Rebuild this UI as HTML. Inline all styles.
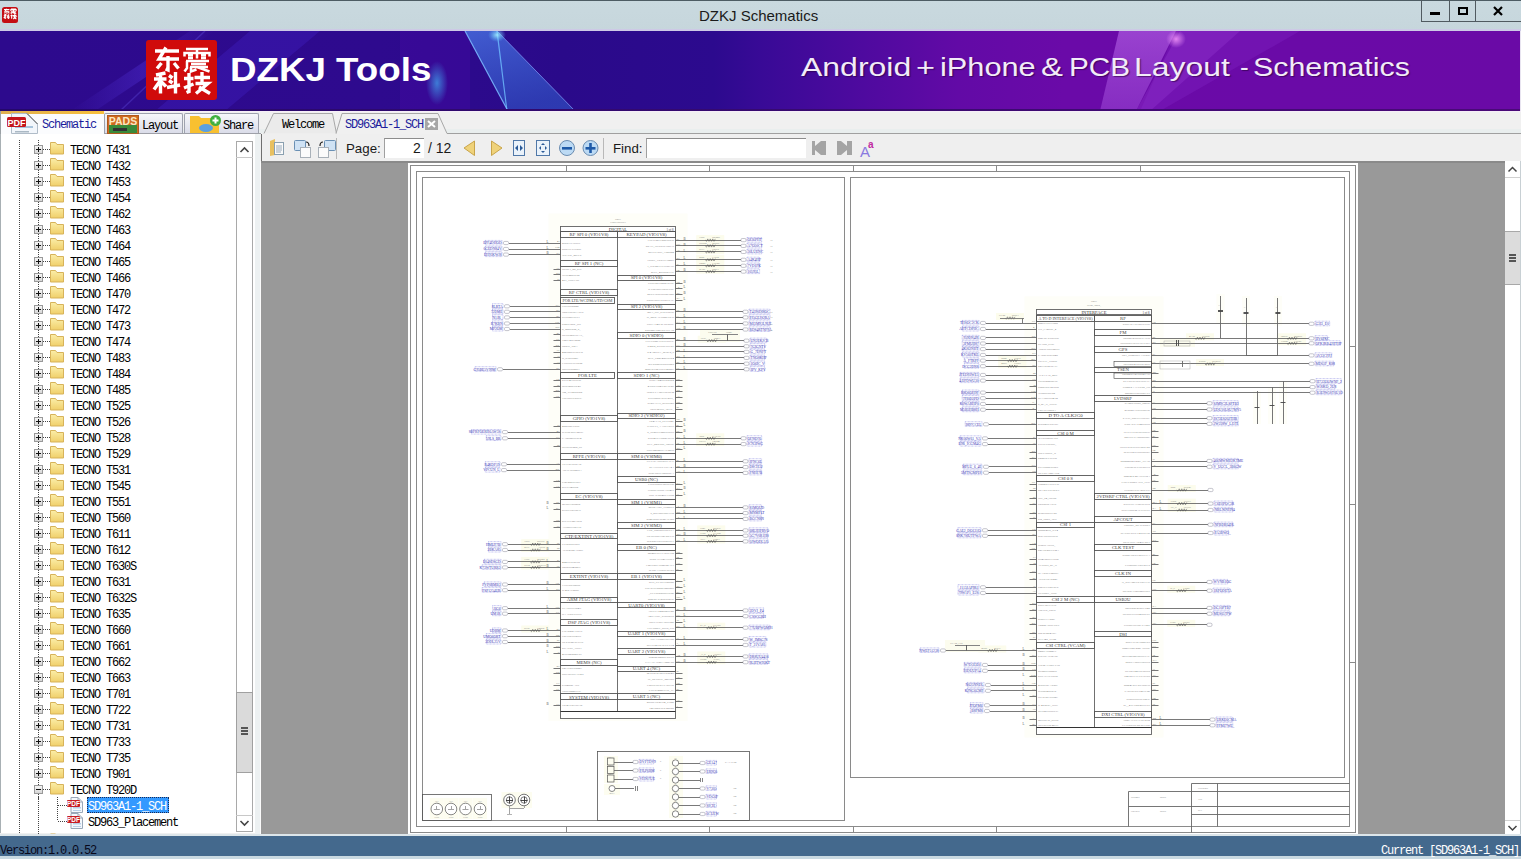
<!DOCTYPE html><html><head><meta charset="utf-8"><style>
*{margin:0;padding:0;box-sizing:border-box}
html,body{width:1521px;height:859px;overflow:hidden;background:#f0f0f0;position:relative;font-family:"Liberation Sans",sans-serif}
.abs{position:absolute}
.ttxt{position:absolute;font-family:"Liberation Mono",monospace;font-size:12px;line-height:14px;letter-spacing:-1.2px;color:#000;white-space:nowrap}
.tb{font-family:"Liberation Sans",sans-serif;font-size:14px;line-height:17px;color:#1a1a1a;white-space:nowrap}
</style></head><body><div class="abs" style="left:0;top:0;width:1521px;height:31px;background:linear-gradient(#c9d9df,#c6d6dc);border-top:1px solid #4d5c63"></div><div class="abs" style="left:0;top:29px;width:1521px;height:2px;background:#cdc9e6"></div><div class="abs" style="left:699px;top:7px;font-size:15px;line-height:18px;color:#1a1a1a;white-space:nowrap">DZKJ Schematics</div><div class="abs" style="left:1421px;top:0;width:101px;height:22px;border:1px solid #505a60;border-top:none"></div><div class="abs" style="left:1449px;top:0;width:1px;height:21px;background:#505a60"></div><div class="abs" style="left:1475px;top:0;width:1px;height:21px;background:#505a60"></div><div class="abs" style="left:1430px;top:12px;width:10px;height:3px;background:#000"></div><div class="abs" style="left:1458px;top:7px;width:10px;height:8px;border:2px solid #000"></div><svg class="abs" style="left:1490px;top:5px" width="16" height="12"><path d="M4 2 L12 10 M12 2 L4 10" stroke="#000" stroke-width="2.2"/></svg><svg class="abs" style="left:2px;top:7px" width="17" height="17"><rect x="0" y="0" width="16" height="16" rx="2.5" fill="#c40e14"/><g transform="scale(0.225) translate(0,0)" fill="none" stroke="#fff" stroke-width="5"><path d="M9 11 H33 M20 7.5 L13 19 H33 M22 16 V30 M15.5 23 L11 28.5 M28 23 L32.5 28.5"/><path d="M40 9 H62 M38.5 16.5 V13 H63.5 V16.5 M51 9 V18.5 M40 21 H63 M41 21 V31 M45 25 H60 M51 27 L63.5 31.5"/><path d="M10 35 L19.5 33 M8 39 H20.5 M14.5 34 V53.5 M14 41 L8 49.5 M23 37 L26.5 38 M23 41.5 L26.5 43 M21 47.5 L34 45 M29.5 32 V53.5"/><path d="M38 38.5 H47.5 M43 33 V52 M48.5 37.5 H64 M56 32 V43 M49.5 43.5 H62 L50 53.5 M53 47 L64 53.5"/></g></svg><div class="abs" style="left:0;top:31px;width:1520px;height:80px;overflow:hidden;background:linear-gradient(90deg,#2d0a8d 0%,#2e0a8e 25%,#2a0a8a 37%,#2c0a8e 47%,#380a96 50%,#4c0a9e 56%,#620aa6 63%,#6a0aa8 70%,#6a0aa6 100%)"><svg class="abs" style="left:0;top:0" width="1520" height="80"><defs><linearGradient id="tri" x1="0" y1="0" x2="0.3" y2="1"><stop offset="0" stop-color="#4a78e8" stop-opacity="0.75"/><stop offset="1" stop-color="#3060d0" stop-opacity="0.55"/></linearGradient><linearGradient id="str" x1="0" y1="0" x2="1" y2="0"><stop offset="0" stop-color="#5a3ae8" stop-opacity="0"/><stop offset="0.5" stop-color="#5a3ae8" stop-opacity="0.45"/><stop offset="1" stop-color="#5a3ae8" stop-opacity="0"/></linearGradient><radialGradient id="bl"><stop offset="0" stop-color="#40a8f0" stop-opacity="0.9"/><stop offset="1" stop-color="#40a8f0" stop-opacity="0"/></radialGradient><radialGradient id="cy"><stop offset="0" stop-color="#a0f0ff" stop-opacity="0.9"/><stop offset="1" stop-color="#60c0ff" stop-opacity="0"/></radialGradient><radialGradient id="pk"><stop offset="0" stop-color="#ffa0ff" stop-opacity="0.8"/><stop offset="1" stop-color="#f0a0ff" stop-opacity="0"/></radialGradient><linearGradient id="vio" x1="0" y1="0" x2="0" y2="1"><stop offset="0" stop-color="#c070f0" stop-opacity="0.55"/><stop offset="1" stop-color="#b060e8" stop-opacity="0.4"/></linearGradient></defs><path d="M190 0 L215 0 L95 80 L70 80 Z" fill="url(#str)" opacity="0.7"/><path d="M250 0 L320 0 L225 80 L155 80 Z" fill="#4a2ae0" opacity="0.25"/><line x1="205" y1="0" x2="120" y2="80" stroke="#6a5af0" stroke-width="1.5" opacity="0.3"/><path d="M400 0 L470 0 L470 80 L400 80 Z" fill="#4a0aa8" opacity="0.35"/><path d="M465 0 L497 0 L575 80 L508 80 Z" fill="url(#tri)"/><line x1="465" y1="0" x2="508" y2="80" stroke="#7ab8ff" stroke-width="1.2" opacity="0.9"/><line x1="497" y1="0" x2="507" y2="80" stroke="#70c0ff" stroke-width="1.2" opacity="0.8"/><line x1="497" y1="0" x2="575" y2="80" stroke="#7a90f0" stroke-width="1" opacity="0.8"/><ellipse cx="497" cy="4" rx="9" ry="7" fill="url(#cy)"/><ellipse cx="437" cy="52" rx="11" ry="22" fill="url(#bl)" opacity="0.8"/><path d="M1119 0 L1176 0 L1136 80 L1100 80 Z" fill="url(#vio)"/><path d="M1176 0 L1300 0 L1160 80 L1140 80 Z" fill="#8a30d0" opacity="0.25"/><path d="M1180 0 L1240 0 L1150 80 L1136 80 Z" fill="#9a40d8" opacity="0.3"/><ellipse cx="1176" cy="8" rx="10" ry="9" fill="url(#pk)"/></svg><div class="abs" style="left:146px;top:9px;width:71px;height:60px;background:#d00b0b;border-radius:3px"></div><svg class="abs" style="left:146px;top:9px" width="71" height="60" fill="none" stroke="#fff" stroke-width="3.4" stroke-linecap="butt" stroke-linejoin="miter"><path d="M9 11 H33 M20 7.5 L13 19 H33 M22 16 V30 L19.5 29 M15.5 23 L11 28.5 M28 23 L32.5 28.5"/><path stroke-width="2.5" d="M40 9 H62 M38.5 16.5 V13 H63.5 V16.5 M51 9 V18.5 M42 15.2 H47 M55 15.2 H60 M42 18 H47 M55 18 H60 M40 21 H63 M41 21 V28 L38.5 31.5 M45 24 H60 M44 27 H62 M51 27 L63.5 31.5 M45 27 V31.5 L50.5 29.5"/><path d="M10 35 L19.5 33 M8 39 H20.5 M14.5 34 V53.5 M14 41 L8 49.5 M15.5 42 L20 46.5 M23 35.5 L26.5 38 M23 40.5 L26.5 43 M21 47.5 L34 45 M29.5 32 V53.5"/><path d="M38 38.5 H47.5 M43 33 V51.5 L40.5 52.5 M38 48 L47.5 44 M48.5 37.5 H64 M56 32 V43 M49.5 43.5 H62 L50 53.5 M53 47 L64 53.5"/></svg><div class="abs" style="left:230px;top:21px;font-weight:bold;font-size:32.5px;line-height:36px;color:#fff;white-space:nowrap;transform-origin:0 0;transform:scaleX(1.13)">DZKJ Tools</div><div class="abs" style="left:801.0px;top:21px;font-size:26px;line-height:30px;color:#f2ecf8;white-space:nowrap;transform-origin:0 0;transform:scaleX(1.230);text-shadow:1px 1px 1px rgba(40,0,60,0.6)">Android</div><div class="abs" style="left:915.8px;top:21px;font-size:26px;line-height:30px;color:#f2ecf8;white-space:nowrap;transform-origin:0 0;transform:scaleX(1.250);text-shadow:1px 1px 1px rgba(40,0,60,0.6)">+</div><div class="abs" style="left:939.6px;top:21px;font-size:26px;line-height:30px;color:#f2ecf8;white-space:nowrap;transform-origin:0 0;transform:scaleX(1.182);text-shadow:1px 1px 1px rgba(40,0,60,0.6)">iPhone</div><div class="abs" style="left:1040.7px;top:21px;font-size:26px;line-height:30px;color:#f2ecf8;white-space:nowrap;transform-origin:0 0;transform:scaleX(1.267);text-shadow:1px 1px 1px rgba(40,0,60,0.6)">&amp;</div><div class="abs" style="left:1068.7px;top:21px;font-size:26px;line-height:30px;color:#f2ecf8;white-space:nowrap;transform-origin:0 0;transform:scaleX(1.143);text-shadow:1px 1px 1px rgba(40,0,60,0.6)">PCB</div><div class="abs" style="left:1133.5px;top:21px;font-size:26px;line-height:30px;color:#f2ecf8;white-space:nowrap;transform-origin:0 0;transform:scaleX(1.227);text-shadow:1px 1px 1px rgba(40,0,60,0.6)">Layout</div><div class="abs" style="left:1240.0px;top:21px;font-size:26px;line-height:30px;color:#f2ecf8;white-space:nowrap;transform-origin:0 0;transform:scaleX(1.000);text-shadow:1px 1px 1px rgba(40,0,60,0.6)">-</div><div class="abs" style="left:1252.8px;top:21px;font-size:26px;line-height:30px;color:#f2ecf8;white-space:nowrap;transform-origin:0 0;transform:scaleX(1.167);text-shadow:1px 1px 1px rgba(40,0,60,0.6)">Schematics</div></div><div class="abs" style="left:1520px;top:31px;width:1px;height:80px;background:#e8e4f0"></div><div class="abs" style="left:0;top:109px;width:1520px;height:2px;background:linear-gradient(90deg,#24086a,#3a0a70 60%,#4a0a78)"></div><div class="abs" style="left:0;top:111px;width:1521px;height:23px;background:#f0f0f0"></div><div class="abs" style="left:0;top:111px;width:1521px;height:1px;background:#f6eef8"></div><div class="abs" style="left:0;top:129px;width:1521px;height:4px;background:#e9eeee"></div><div class="abs" style="left:447px;top:133px;width:1074px;height:1px;background:#a0a0a0"></div><div class="abs" style="left:0;top:111px;width:104px;height:25px;background:#fbfcfe;border-left:1px solid #9aa0a4"></div><div class="abs" style="left:1px;top:111px;width:103px;height:3px;background:linear-gradient(90deg,#e0b050,#f7bf3c)"></div><div class="abs" style="left:104px;top:113px;width:79px;height:21px;background:linear-gradient(#f6f7fa,#d9dbe8);border:1px solid #9ea2ae;border-bottom:none;border-radius:2px 2px 0 0"></div><div class="abs" style="left:184px;top:113px;width:75px;height:21px;background:linear-gradient(#f6f7fa,#d9dbe8);border:1px solid #9ea2ae;border-bottom:none;border-radius:2px 2px 0 0"></div><div class="abs" style="left:104px;top:133px;width:157px;height:1px;background:#9ea0a8"></div><svg class="abs" style="left:0;top:111px" width="460" height="25"><path d="M11.5 2.5 H27 L37.5 13 V22.5 H11.5 Z" fill="#f2f6fb" stroke="#b0bcc8"/><path d="M27 2.5 L37.5 13" stroke="#555" stroke-width="1"/><rect x="15" y="15" width="18" height="2" fill="#a8c4dc"/><rect x="15" y="20" width="14" height="1.5" fill="#aab8c4"/><rect x="7" y="6" width="19" height="10" rx="1.5" fill="#c4141c"/><text x="16.5" y="14.5" font-family="Liberation Sans" font-weight="bold" font-size="9" fill="#fff" text-anchor="middle">PDF</text><rect x="107.5" y="4.5" width="31" height="18" fill="#d06a20" stroke="#b05a1c"/><rect x="109" y="14" width="28" height="8" fill="#3a8a3a"/><rect x="113" y="17" width="14" height="3" fill="#333"/><text x="123" y="13.5" font-family="Liberation Sans" font-weight="bold" font-size="10.5" fill="#fbe8c0" text-anchor="middle">PADS</text><path d="M190 5 h9 l2 2 h18 v15 h-29 z" fill="#f8c030"/><ellipse cx="206" cy="17" rx="7" ry="4" fill="#5aa0e0"/><circle cx="215.5" cy="9.5" r="5.5" fill="#40b040"/><rect x="212.5" y="8.5" width="6" height="2" fill="#fff"/><rect x="214.5" y="6.5" width="2" height="6" fill="#fff"/><path d="M264 22.5 L273.5 2.5 H332.5 L336.5 22.5" fill="#ebebeb" stroke="#a8a8a8"/><path d="M336 22.5 L342 2.5 H438 L447 22.5" fill="#f0f0f0" stroke="#a8a8a8"/><rect x="425" y="7" width="13" height="12" fill="#a6a6a6"/><path d="M428 10 L435 16 M435 10 L428 16" stroke="#fff" stroke-width="2"/></svg><div class="ttxt" style="left:42px;top:118px;color:#1c1c9c">Schematic</div><div class="ttxt" style="left:142px;top:119px">Layout</div><div class="ttxt" style="left:223px;top:119px">Share</div><div class="ttxt" style="left:282px;top:118px">Welcome</div><div class="ttxt" style="left:345px;top:118px;color:#1c1c9c">SD963A1-1_SCH</div><div class="abs" style="left:261px;top:134px;width:1260px;height:27px;background:#efefef;border-left:1px solid #707070"></div><div class="abs" style="left:336px;top:138px;width:1px;height:21px;background:#b8b8b8"></div><div class="abs" style="left:603px;top:138px;width:1px;height:21px;background:#b8b8b8"></div><div class="abs" style="left:384px;top:138px;width:40px;height:20px;background:#fff;border-top:1px solid #8c8c8c;border-left:1px solid #a0a0a0"></div><div class="abs" style="left:646px;top:138px;width:160px;height:20px;background:#fff;border-top:1px solid #8c8c8c;border-left:1px solid #a0a0a0"></div><div class="abs tb" style="left:346px;top:140px;font-size:13.3px">Page:</div><div class="abs tb" style="left:413px;top:140px">2</div><div class="abs tb" style="left:428px;top:140px">/ 12</div><div class="abs tb" style="left:613px;top:140px;font-size:13.3px">Find:</div><svg class="abs" style="left:262px;top:134px" width="620" height="27"><path d="M8 7 L13 5 V21 L8 22 Z" fill="#e8c060"/><rect x="12.5" y="8.5" width="9" height="12" fill="#fafafa" stroke="#8aa0b0"/><path d="M14 12 h6 M14 14 h6 M14 16 h6 M14 18 h5" stroke="#9ab" stroke-width="1"/><rect x="32.5" y="6.5" width="11" height="10" rx="1" fill="#cfe2f4" stroke="#6a90b4"/><rect x="38.5" y="13.5" width="10" height="10" fill="#fbfbfb" stroke="#a8b0b8"/><path d="M44 8 q3 0 3 4" stroke="#222" fill="none" stroke-width="1.2"/><rect x="62.5" y="6.5" width="11" height="10" rx="1" fill="#cfe2f4" stroke="#6a90b4"/><rect x="56.5" y="13.5" width="10" height="10" fill="#fbfbfb" stroke="#a8b0b8"/><path d="M61 8 q-3 0 -3 4" stroke="#222" fill="none" stroke-width="1.2"/><path d="M212.5 7 L202 14 L212.5 21.5 Z" fill="#efd27a" stroke="#c8a44a"/><path d="M229.5 7 L240 14 L229.5 21.5 Z" fill="#efd27a" stroke="#c8a44a"/><rect x="251.5" y="6.5" width="11" height="15" fill="#eaf2fa" stroke="#5078a8"/><path d="M253 14 L256 11 V17 Z M261 14 L258 11 V17 Z" fill="#2a5a98"/><rect x="274.5" y="6.5" width="13" height="15" fill="#eaf2fa" stroke="#5078a8"/><path d="M281 9 l-2 2 h4 z M281 19 l-2 -2 h4 z M277 14 l2 -2 v4 z M285 14 l-2 -2 v4 z" fill="#2a5a98"/><circle cx="305" cy="14" r="7.5" fill="#bcdaf4" stroke="#6a8cb0"/><rect x="300" y="13" width="10" height="2.6" fill="#1e5aa8"/><circle cx="328.5" cy="14" r="7.5" fill="#bcdaf4" stroke="#6a8cb0"/><rect x="323.5" y="13" width="10" height="2.6" fill="#1e5aa8"/><rect x="327.2" y="9" width="2.6" height="10" fill="#1e5aa8"/><path d="M550 7 h3 v5 l6 -5 h5 v14 h-5 l-6 -5 v5 h-3 z" fill="#a4a4a4"/><path d="M575 7 h4 l6 5 v-5 h5 v14 h-5 v-5 l-6 5 h-4 z" fill="#a4a4a4"/><text x="598" y="23" font-family="Liberation Sans" font-size="15" fill="#8a7ae0">A</text><text x="606" y="14" font-family="Liberation Sans" font-weight="bold" font-size="10" fill="#c02aa0">a</text></svg><div class="abs" style="left:261px;top:161px;width:1244px;height:673px;background:#999"></div><div class="abs" style="left:261px;top:161px;width:1244px;height:2px;background:#8a8a8a"></div><div class="abs" style="left:408px;top:163px;width:950px;height:671px;background:#fff"></div><svg class="abs" style="left:0;top:0" width="1521" height="859" font-family="Liberation Serif"><rect x="548.5" y="213.5" width="139.0" height="507.5" fill="#fefef8"/><rect x="521.25" y="539.2" width="28" height="7" fill="#fcfcec"/><rect x="521.25" y="545" width="28" height="7" fill="#fcfcec"/><rect x="521.25" y="556.9" width="28" height="7" fill="#fcfcec"/><rect x="521.25" y="562.4" width="28" height="7" fill="#fcfcec"/><rect x="521.25" y="625.5" width="28" height="7" fill="#fcfcec"/><rect x="696.25" y="235.1" width="28" height="7" fill="#fcfcec"/><rect x="696.25" y="240.9" width="28" height="7" fill="#fcfcec"/><rect x="696.25" y="246.9" width="28" height="7" fill="#fcfcec"/><rect x="696.25" y="254.8" width="28" height="7" fill="#fcfcec"/><rect x="696.25" y="260.8" width="28" height="7" fill="#fcfcec"/><rect x="696.25" y="266.6" width="28" height="7" fill="#fcfcec"/><rect x="697.75" y="335.7" width="28" height="7" fill="#fcfcec"/><rect x="696.25" y="433.3" width="28" height="7" fill="#fcfcec"/><rect x="696.25" y="439.1" width="28" height="7" fill="#fcfcec"/><rect x="697.25" y="525.4" width="28" height="7" fill="#fcfcec"/><rect x="697.25" y="530.7" width="28" height="7" fill="#fcfcec"/><rect x="697.25" y="536.4" width="28" height="7" fill="#fcfcec"/><rect x="697.25" y="622.7" width="28" height="7" fill="#fcfcec"/><rect x="697.25" y="651.5" width="28" height="7" fill="#fcfcec"/><rect x="697.25" y="657.2" width="28" height="7" fill="#fcfcec"/><rect x="700" y="330" width="40" height="12" fill="#fcfcee"/><rect x="1024.5" y="296.3" width="139.0" height="441.2" fill="#fefef8"/><rect x="998.25" y="355.6" width="28" height="7" fill="#fcfcec"/><rect x="998.25" y="361.2" width="28" height="7" fill="#fcfcec"/><rect x="978.25" y="645.5" width="28" height="7" fill="#fcfcec"/><rect x="1167.75" y="485" width="28" height="7" fill="#fcfcec"/><rect x="1167.75" y="498.6" width="28" height="7" fill="#fcfcec"/><rect x="1167.75" y="505" width="28" height="7" fill="#fcfcec"/><rect x="1167.25" y="585.7" width="28" height="7" fill="#fcfcec"/><rect x="1167.25" y="619.8" width="28" height="7" fill="#fcfcec"/><rect x="996" y="313" width="28" height="7" fill="#fcfcec"/><rect x="1160" y="338" width="35" height="9" fill="#fcfcee"/><rect x="1186" y="333.3" width="28" height="7" fill="#fcfcec"/><rect x="1278" y="333.3" width="28" height="7" fill="#fcfcec"/><rect x="1278" y="338.3" width="28" height="7" fill="#fcfcec"/><rect x="1196" y="359" width="28" height="7" fill="#fcfcec"/><rect x="945" y="640" width="40" height="12" fill="#fcfcee"/><rect x="1216.5" y="294" width="8.0" height="30" fill="#fefef8"/><rect x="1242" y="296" width="8" height="30" fill="#fefef8"/><rect x="1273.9" y="296" width="8.0" height="30" fill="#fefef8"/><rect x="1253" y="391" width="8" height="33" fill="#fefef8"/><rect x="1268" y="387.1" width="8" height="36.89999999999998" fill="#fefef8"/><rect x="1279" y="381.2" width="8" height="42.80000000000001" fill="#fefef8"/><rect x="429.8" y="798" width="14.0" height="21" fill="#fdfdf0"/><rect x="444" y="798" width="14" height="21" fill="#fdfdf0"/><rect x="458.5" y="798" width="14.0" height="21" fill="#fdfdf0"/><rect x="473" y="798" width="14" height="21" fill="#fdfdf0"/><rect x="501.5" y="792" width="16.0" height="16" fill="#fdfdf0"/><rect x="516" y="792" width="16" height="16" fill="#fdfdf0"/><rect x="604" y="756" width="14" height="27" fill="#fdfdf0"/><rect x="604" y="784" width="16" height="11" fill="#fdfdf0"/><rect x="669" y="756" width="14" height="62" fill="#fdfdf0"/><rect x="410.5" y="165.5" width="945.0" height="667.0" fill="none" stroke="#8a8a8a" stroke-width="1"/><rect x="416.5" y="171.5" width="933.0" height="655.0" fill="none" stroke="#8a8a8a" stroke-width="1"/><rect x="422.5" y="177.5" width="422.0" height="643.0" fill="none" stroke="#8a8a8a" stroke-width="1"/><rect x="850.5" y="177.5" width="494.0" height="600.0" fill="none" stroke="#8a8a8a" stroke-width="1"/><line x1="566.5" y1="165.5" x2="566.5" y2="171.5" stroke="#8a8a8a" stroke-width="1"/><line x1="709.5" y1="165.5" x2="709.5" y2="171.5" stroke="#8a8a8a" stroke-width="1"/><line x1="853.5" y1="165.5" x2="853.5" y2="171.5" stroke="#8a8a8a" stroke-width="1"/><line x1="996.5" y1="165.5" x2="996.5" y2="171.5" stroke="#8a8a8a" stroke-width="1"/><line x1="1140.5" y1="165.5" x2="1140.5" y2="171.5" stroke="#8a8a8a" stroke-width="1"/><line x1="566.5" y1="826.5" x2="566.5" y2="832.5" stroke="#8a8a8a" stroke-width="1"/><line x1="709.5" y1="826.5" x2="709.5" y2="832.5" stroke="#8a8a8a" stroke-width="1"/><line x1="853.5" y1="826.5" x2="853.5" y2="832.5" stroke="#8a8a8a" stroke-width="1"/><line x1="996.5" y1="826.5" x2="996.5" y2="832.5" stroke="#8a8a8a" stroke-width="1"/><line x1="1349.5" y1="346.5" x2="1355.5" y2="346.5" stroke="#8a8a8a" stroke-width="1"/><line x1="1349.5" y1="504.5" x2="1355.5" y2="504.5" stroke="#8a8a8a" stroke-width="1"/><line x1="1349.5" y1="662.5" x2="1355.5" y2="662.5" stroke="#8a8a8a" stroke-width="1"/><line x1="1191.5" y1="783.5" x2="1349.5" y2="783.5" stroke="#666" stroke-width="0.9"/><line x1="1128.5" y1="791.5" x2="1349.5" y2="791.5" stroke="#666" stroke-width="0.9"/><line x1="1128.5" y1="806.5" x2="1349.5" y2="806.5" stroke="#666" stroke-width="0.9"/><line x1="1191.5" y1="814.5" x2="1349.5" y2="814.5" stroke="#666" stroke-width="0.9"/><line x1="1128.5" y1="791.5" x2="1128.5" y2="826.5" stroke="#666" stroke-width="0.9"/><line x1="1191.5" y1="783.5" x2="1191.5" y2="832.5" stroke="#666" stroke-width="0.9"/><line x1="1217.5" y1="783.5" x2="1217.5" y2="826.5" stroke="#666" stroke-width="0.9"/><text x="1198" y="789" font-size="2.4" fill="#888" text-anchor="start" font-weight="normal">Footprints</text><text x="1198" y="800" font-size="2.4" fill="#888" text-anchor="start" font-weight="normal">Title</text><text x="1198" y="811" font-size="2.4" fill="#888" text-anchor="start" font-weight="normal">Rev</text><text x="1131" y="798" font-size="2.4" fill="#888" text-anchor="start" font-weight="normal">Designer</text><text x="1160" y="798" font-size="2.4" fill="#888" text-anchor="start" font-weight="normal">Board</text><text x="1131" y="812" font-size="2.4" fill="#888" text-anchor="start" font-weight="normal">Checked</text><text x="1160" y="812" font-size="2.4" fill="#888" text-anchor="start" font-weight="normal">Board</text><line x1="614.5" y1="303.3" x2="614.5" y2="401" stroke="#606060" stroke-width="0.9"/><line x1="560.5" y1="401.5" x2="614.5" y2="401.5" stroke="#606060" stroke-width="0.9"/><rect x="560.5" y="226.5" width="115.0" height="491.5" fill="#fff"/><text x="618.0" y="219.5" font-size="2.2" fill="#777" text-anchor="middle" font-weight="normal">PMU1</text><text x="618.0" y="223.0" font-size="2.2" fill="#777" text-anchor="middle" font-weight="normal">VJ2DEG0D9NCF</text><line x1="509" y1="243.5" x2="560.5" y2="243.5" stroke="#6a6a6a" stroke-width="0.9"/><text x="559.5" y="242.4" font-size="2.6" fill="#666" text-anchor="end" font-weight="normal">43</text><rect x="503.5" y="241.4" width="5" height="3.2" rx="1.2" fill="none" stroke="#8a8a9a" stroke-width="0.5"/><rect x="485.2" y="240.4" width="16.8" height="4.6" fill="none" stroke="#6a6ad8" stroke-width="0.45" stroke-dasharray="0.8 0.6"/><text x="501.5" y="244.3" font-size="3.6" fill="#3434b4" text-anchor="end" font-weight="normal">EPF4DHOD</text><text x="562.0" y="244.0" font-size="2.9" fill="#707070" text-anchor="start" font-weight="normal">2DOCIT3JHUL</text><line x1="509" y1="249.5" x2="560.5" y2="249.5" stroke="#6a6a6a" stroke-width="0.9"/><text x="559.5" y="248.4" font-size="2.6" fill="#666" text-anchor="end" font-weight="normal">GM</text><rect x="503.5" y="247.4" width="5" height="3.2" rx="1.2" fill="none" stroke="#8a8a9a" stroke-width="0.5"/><rect x="485.2" y="246.4" width="16.8" height="4.6" fill="none" stroke="#6a6ad8" stroke-width="0.45" stroke-dasharray="0.8 0.6"/><text x="501.5" y="250.3" font-size="3.6" fill="#3434b4" text-anchor="end" font-weight="normal">0GEDN84V</text><text x="562.0" y="250.0" font-size="2.9" fill="#707070" text-anchor="start" font-weight="normal">660UPLPFU8W</text><line x1="509" y1="254.5" x2="560.5" y2="254.5" stroke="#6a6a6a" stroke-width="0.9"/><text x="559.5" y="254.0" font-size="2.6" fill="#666" text-anchor="end" font-weight="normal">5T</text><rect x="503.5" y="253.0" width="5" height="3.2" rx="1.2" fill="none" stroke="#8a8a9a" stroke-width="0.5"/><rect x="485.2" y="252.0" width="16.8" height="4.6" fill="none" stroke="#6a6ad8" stroke-width="0.45" stroke-dasharray="0.8 0.6"/><text x="501.5" y="255.9" font-size="3.6" fill="#3434b4" text-anchor="end" font-weight="normal">EH93KWJ8</text><text x="562.0" y="255.6" font-size="2.9" fill="#707070" text-anchor="start" font-weight="normal">3CEVW_86EFS</text><line x1="553.5" y1="269.5" x2="560.5" y2="269.5" stroke="#6a6a6a" stroke-width="0.9"/><text x="559.5" y="268.79999999999995" font-size="2.6" fill="#666" text-anchor="end" font-weight="normal">7E</text><text x="562.0" y="270.4" font-size="2.9" fill="#707070" text-anchor="start" font-weight="normal">DU5T1_B6_KH</text><line x1="553.5" y1="274.5" x2="560.5" y2="274.5" stroke="#6a6a6a" stroke-width="0.9"/><text x="559.5" y="274.09999999999997" font-size="2.6" fill="#666" text-anchor="end" font-weight="normal">8D</text><text x="562.0" y="275.7" font-size="2.9" fill="#707070" text-anchor="start" font-weight="normal">NTIP228FK52</text><line x1="553.5" y1="280.5" x2="560.5" y2="280.5" stroke="#6a6a6a" stroke-width="0.9"/><text x="559.5" y="279.7" font-size="2.6" fill="#666" text-anchor="end" font-weight="normal">SI</text><text x="562.0" y="281.3" font-size="2.9" fill="#707070" text-anchor="start" font-weight="normal">4S3_1OJFLJO</text><line x1="510" y1="306.5" x2="560.5" y2="306.5" stroke="#6a6a6a" stroke-width="0.9"/><text x="559.5" y="305.7" font-size="2.6" fill="#666" text-anchor="end" font-weight="normal">OA</text><rect x="504.5" y="304.7" width="5" height="3.2" rx="1.2" fill="none" stroke="#8a8a9a" stroke-width="0.5"/><rect x="492.5" y="303.7" width="10.5" height="4.6" fill="none" stroke="#6a6ad8" stroke-width="0.45" stroke-dasharray="0.8 0.6"/><text x="502.5" y="307.6" font-size="3.6" fill="#3434b4" text-anchor="end" font-weight="normal">8LRTA</text><text x="562.0" y="307.3" font-size="2.9" fill="#707070" text-anchor="start" font-weight="normal">J30VI9D6222</text><line x1="510" y1="311.5" x2="560.5" y2="311.5" stroke="#6a6a6a" stroke-width="0.9"/><text x="559.5" y="311.2" font-size="2.6" fill="#666" text-anchor="end" font-weight="normal">2G</text><rect x="504.5" y="310.2" width="5" height="3.2" rx="1.2" fill="none" stroke="#8a8a9a" stroke-width="0.5"/><rect x="492.5" y="309.2" width="10.5" height="4.6" fill="none" stroke="#6a6ad8" stroke-width="0.45" stroke-dasharray="0.8 0.6"/><text x="502.5" y="313.1" font-size="3.6" fill="#3434b4" text-anchor="end" font-weight="normal">72DME</text><text x="562.0" y="312.8" font-size="2.9" fill="#707070" text-anchor="start" font-weight="normal">N5KHWDGAJG0</text><line x1="510" y1="317.5" x2="560.5" y2="317.5" stroke="#6a6a6a" stroke-width="0.9"/><text x="559.5" y="316.79999999999995" font-size="2.6" fill="#666" text-anchor="end" font-weight="normal">BE</text><rect x="504.5" y="315.79999999999995" width="5" height="3.2" rx="1.2" fill="none" stroke="#8a8a9a" stroke-width="0.5"/><rect x="492.5" y="314.79999999999995" width="10.5" height="4.6" fill="none" stroke="#6a6ad8" stroke-width="0.45" stroke-dasharray="0.8 0.6"/><text x="502.5" y="318.7" font-size="3.6" fill="#3434b4" text-anchor="end" font-weight="normal">N1JR_</text><text x="562.0" y="318.4" font-size="2.9" fill="#707070" text-anchor="start" font-weight="normal">07HH8677UFJ</text><line x1="510" y1="323.5" x2="560.5" y2="323.5" stroke="#6a6a6a" stroke-width="0.9"/><text x="559.5" y="322.9" font-size="2.6" fill="#666" text-anchor="end" font-weight="normal">GW</text><rect x="504.5" y="321.9" width="5" height="3.2" rx="1.2" fill="none" stroke="#8a8a9a" stroke-width="0.5"/><rect x="492.5" y="320.9" width="10.5" height="4.6" fill="none" stroke="#6a6ad8" stroke-width="0.45" stroke-dasharray="0.8 0.6"/><text x="502.5" y="324.8" font-size="3.6" fill="#3434b4" text-anchor="end" font-weight="normal">R7KBN</text><text x="562.0" y="324.5" font-size="2.9" fill="#707070" text-anchor="start" font-weight="normal">0JBUFR0K_O9</text><line x1="510" y1="329.5" x2="560.5" y2="329.5" stroke="#6a6a6a" stroke-width="0.9"/><text x="559.5" y="328.4" font-size="2.6" fill="#666" text-anchor="end" font-weight="normal">WO</text><rect x="504.5" y="327.4" width="5" height="3.2" rx="1.2" fill="none" stroke="#8a8a9a" stroke-width="0.5"/><rect x="492.5" y="326.4" width="10.5" height="4.6" fill="none" stroke="#6a6ad8" stroke-width="0.45" stroke-dasharray="0.8 0.6"/><text x="502.5" y="330.3" font-size="3.6" fill="#3434b4" text-anchor="end" font-weight="normal">MP2OM</text><text x="562.0" y="330.0" font-size="2.9" fill="#707070" text-anchor="start" font-weight="normal">8_BBS7RM_5_</text><line x1="553.5" y1="334.5" x2="560.5" y2="334.5" stroke="#6a6a6a" stroke-width="0.9"/><text x="559.5" y="334.0" font-size="2.6" fill="#666" text-anchor="end" font-weight="normal">0F</text><text x="562.0" y="335.6" font-size="2.9" fill="#707070" text-anchor="start" font-weight="normal">OGO7MWN7A7_</text><line x1="553.5" y1="340.5" x2="560.5" y2="340.5" stroke="#6a6a6a" stroke-width="0.9"/><text x="559.5" y="339.59999999999997" font-size="2.6" fill="#666" text-anchor="end" font-weight="normal">FH</text><text x="562.0" y="341.2" font-size="2.9" fill="#707070" text-anchor="start" font-weight="normal">1M7L4WF262F</text><line x1="553.5" y1="346.5" x2="560.5" y2="346.5" stroke="#6a6a6a" stroke-width="0.9"/><text x="559.5" y="345.7" font-size="2.6" fill="#666" text-anchor="end" font-weight="normal">KK</text><text x="562.0" y="347.3" font-size="2.9" fill="#707070" text-anchor="start" font-weight="normal">IBJ6J7_JIBA</text><line x1="553.5" y1="352.5" x2="560.5" y2="352.5" stroke="#6a6a6a" stroke-width="0.9"/><text x="559.5" y="351.4" font-size="2.6" fill="#666" text-anchor="end" font-weight="normal">GI</text><text x="562.0" y="353.0" font-size="2.9" fill="#707070" text-anchor="start" font-weight="normal">4MNBRNT9PVR</text><line x1="553.5" y1="357.5" x2="560.5" y2="357.5" stroke="#6a6a6a" stroke-width="0.9"/><text x="559.5" y="357.09999999999997" font-size="2.6" fill="#666" text-anchor="end" font-weight="normal">3I</text><text x="562.0" y="358.7" font-size="2.9" fill="#707070" text-anchor="start" font-weight="normal">D_639IJ9B5L</text><line x1="553.5" y1="363.5" x2="560.5" y2="363.5" stroke="#6a6a6a" stroke-width="0.9"/><text x="559.5" y="362.59999999999997" font-size="2.6" fill="#666" text-anchor="end" font-weight="normal">AJ</text><text x="562.0" y="364.2" font-size="2.9" fill="#707070" text-anchor="start" font-weight="normal">LJ7HDV7GDPM</text><line x1="503" y1="369.5" x2="560.5" y2="369.5" stroke="#6a6a6a" stroke-width="0.9"/><text x="559.5" y="368.7" font-size="2.6" fill="#666" text-anchor="end" font-weight="normal">SC</text><rect x="497.5" y="367.7" width="5" height="3.2" rx="1.2" fill="none" stroke="#8a8a9a" stroke-width="0.5"/><rect x="475.0" y="366.7" width="21.0" height="4.6" fill="none" stroke="#6a6ad8" stroke-width="0.45" stroke-dasharray="0.8 0.6"/><text x="495.5" y="370.6" font-size="3.6" fill="#3434b4" text-anchor="end" font-weight="normal">G95BE5V99M</text><text x="562.0" y="370.3" font-size="2.9" fill="#707070" text-anchor="start" font-weight="normal">S5979PRM5I3</text><line x1="553.5" y1="380.5" x2="560.5" y2="380.5" stroke="#6a6a6a" stroke-width="0.9"/><text x="559.5" y="379.79999999999995" font-size="2.6" fill="#666" text-anchor="end" font-weight="normal">H2</text><text x="562.0" y="381.4" font-size="2.9" fill="#707070" text-anchor="start" font-weight="normal">5VEP4ENUHJ0</text><line x1="553.5" y1="386.5" x2="560.5" y2="386.5" stroke="#6a6a6a" stroke-width="0.9"/><text x="559.5" y="385.5" font-size="2.6" fill="#666" text-anchor="end" font-weight="normal">JR</text><text x="562.0" y="387.1" font-size="2.9" fill="#707070" text-anchor="start" font-weight="normal">I6OG28KOK49</text><line x1="553.5" y1="391.5" x2="560.5" y2="391.5" stroke="#6a6a6a" stroke-width="0.9"/><text x="559.5" y="391.29999999999995" font-size="2.6" fill="#666" text-anchor="end" font-weight="normal">2W</text><text x="562.0" y="392.9" font-size="2.9" fill="#707070" text-anchor="start" font-weight="normal">3M_VF0BW65B</text><line x1="553.5" y1="397.5" x2="560.5" y2="397.5" stroke="#6a6a6a" stroke-width="0.9"/><text x="559.5" y="397.0" font-size="2.6" fill="#666" text-anchor="end" font-weight="normal">1W</text><text x="562.0" y="398.6" font-size="2.9" fill="#707070" text-anchor="start" font-weight="normal">T9EHOGFRSCL</text><line x1="553.5" y1="426.5" x2="560.5" y2="426.5" stroke="#6a6a6a" stroke-width="0.9"/><text x="559.5" y="425.79999999999995" font-size="2.6" fill="#666" text-anchor="end" font-weight="normal">SI</text><text x="562.0" y="427.4" font-size="2.9" fill="#707070" text-anchor="start" font-weight="normal">4R2J98VFSDL</text><line x1="508" y1="432.5" x2="560.5" y2="432.5" stroke="#6a6a6a" stroke-width="0.9"/><text x="559.5" y="431.5" font-size="2.6" fill="#666" text-anchor="end" font-weight="normal">4E</text><rect x="502.5" y="430.5" width="5" height="3.2" rx="1.2" fill="none" stroke="#8a8a9a" stroke-width="0.5"/><rect x="471.6" y="429.5" width="29.400000000000002" height="4.6" fill="none" stroke="#6a6ad8" stroke-width="0.45" stroke-dasharray="0.8 0.6"/><text x="500.5" y="433.40000000000003" font-size="3.6" fill="#3434b4" text-anchor="end" font-weight="normal">SBFRFOERH6AW3S</text><text x="562.0" y="433.1" font-size="2.9" fill="#707070" text-anchor="start" font-weight="normal">ICPHKRDLMUU</text><line x1="508" y1="438.5" x2="560.5" y2="438.5" stroke="#6a6a6a" stroke-width="0.9"/><text x="559.5" y="437.7" font-size="2.6" fill="#666" text-anchor="end" font-weight="normal">NT</text><rect x="502.5" y="436.7" width="5" height="3.2" rx="1.2" fill="none" stroke="#8a8a9a" stroke-width="0.5"/><rect x="486.3" y="435.7" width="14.700000000000001" height="4.6" fill="none" stroke="#6a6ad8" stroke-width="0.45" stroke-dasharray="0.8 0.6"/><text x="500.5" y="439.6" font-size="3.6" fill="#3434b4" text-anchor="end" font-weight="normal">59LS_BR</text><text x="562.0" y="439.3" font-size="2.9" fill="#707070" text-anchor="start" font-weight="normal">CAB9M97P5G4</text><line x1="553.5" y1="446.5" x2="560.5" y2="446.5" stroke="#6a6a6a" stroke-width="0.9"/><text x="559.5" y="446.0" font-size="2.6" fill="#666" text-anchor="end" font-weight="normal">82</text><text x="562.0" y="447.6" font-size="2.9" fill="#707070" text-anchor="start" font-weight="normal">9UNOWMI2_DI</text><line x1="507" y1="464.5" x2="560.5" y2="464.5" stroke="#6a6a6a" stroke-width="0.9"/><text x="559.5" y="463.7" font-size="2.6" fill="#666" text-anchor="end" font-weight="normal">AE</text><rect x="501.5" y="462.7" width="5" height="3.2" rx="1.2" fill="none" stroke="#8a8a9a" stroke-width="0.5"/><rect x="485.3" y="461.7" width="14.700000000000001" height="4.6" fill="none" stroke="#6a6ad8" stroke-width="0.45" stroke-dasharray="0.8 0.6"/><text x="499.5" y="465.6" font-size="3.6" fill="#3434b4" text-anchor="end" font-weight="normal">R4KDF19</text><text x="562.0" y="465.3" font-size="2.9" fill="#707070" text-anchor="start" font-weight="normal">TPTC6LKS5AR</text><line x1="507" y1="470.5" x2="560.5" y2="470.5" stroke="#6a6a6a" stroke-width="0.9"/><text x="559.5" y="469.5" font-size="2.6" fill="#666" text-anchor="end" font-weight="normal">0W</text><rect x="501.5" y="468.5" width="5" height="3.2" rx="1.2" fill="none" stroke="#8a8a9a" stroke-width="0.5"/><rect x="485.3" y="467.5" width="14.700000000000001" height="4.6" fill="none" stroke="#6a6ad8" stroke-width="0.45" stroke-dasharray="0.8 0.6"/><text x="499.5" y="471.40000000000003" font-size="3.6" fill="#3434b4" text-anchor="end" font-weight="normal">VPCUN_L</text><text x="562.0" y="471.1" font-size="2.9" fill="#707070" text-anchor="start" font-weight="normal">AW1F7S9MP9A</text><line x1="553.5" y1="481.5" x2="560.5" y2="481.5" stroke="#6a6a6a" stroke-width="0.9"/><text x="559.5" y="481.0" font-size="2.6" fill="#666" text-anchor="end" font-weight="normal">FR</text><text x="562.0" y="482.6" font-size="2.9" fill="#707070" text-anchor="start" font-weight="normal">FJ2C2BUUOFJ</text><line x1="553.5" y1="487.5" x2="560.5" y2="487.5" stroke="#6a6a6a" stroke-width="0.9"/><text x="559.5" y="486.7" font-size="2.6" fill="#666" text-anchor="end" font-weight="normal">1V</text><text x="562.0" y="488.3" font-size="2.9" fill="#707070" text-anchor="start" font-weight="normal">8JTJC949I9B</text><line x1="553.5" y1="503.5" x2="560.5" y2="503.5" stroke="#6a6a6a" stroke-width="0.9"/><text x="559.5" y="503.29999999999995" font-size="2.6" fill="#666" text-anchor="end" font-weight="normal">OF</text><text x="562.0" y="504.9" font-size="2.9" fill="#707070" text-anchor="start" font-weight="normal">BCI0G15DBP8</text><line x1="553.5" y1="509.5" x2="560.5" y2="509.5" stroke="#6a6a6a" stroke-width="0.9"/><text x="559.5" y="509.09999999999997" font-size="2.6" fill="#666" text-anchor="end" font-weight="normal">RA</text><text x="562.0" y="510.7" font-size="2.9" fill="#707070" text-anchor="start" font-weight="normal">6E9FE7RERPN</text><line x1="553.5" y1="521.5" x2="560.5" y2="521.5" stroke="#6a6a6a" stroke-width="0.9"/><text x="559.5" y="520.8" font-size="2.6" fill="#666" text-anchor="end" font-weight="normal">O6</text><text x="562.0" y="522.4" font-size="2.9" fill="#707070" text-anchor="start" font-weight="normal">81E7TCMEJWR</text><line x1="553.5" y1="527.5" x2="560.5" y2="527.5" stroke="#6a6a6a" stroke-width="0.9"/><text x="559.5" y="526.6" font-size="2.6" fill="#666" text-anchor="end" font-weight="normal">UI</text><text x="562.0" y="528.2" font-size="2.9" fill="#707070" text-anchor="start" font-weight="normal">A7D8SGN8TT6</text><line x1="508" y1="544.5" x2="560.5" y2="544.5" stroke="#6a6a6a" stroke-width="0.9"/><text x="559.5" y="543.6" font-size="2.6" fill="#666" text-anchor="end" font-weight="normal">66</text><rect x="502.5" y="542.6" width="5" height="3.2" rx="1.2" fill="none" stroke="#8a8a9a" stroke-width="0.5"/><rect x="488.4" y="541.6" width="12.600000000000001" height="4.6" fill="none" stroke="#6a6ad8" stroke-width="0.45" stroke-dasharray="0.8 0.6"/><text x="500.5" y="545.5" font-size="3.6" fill="#3434b4" text-anchor="end" font-weight="normal">HMUF7B</text><polyline points="530.25,544.2 531.50,545.4000000000001 532.75,543.0 534.00,545.4000000000001 535.25,543.0 536.50,545.4000000000001 537.75,543.0 539.00,545.4000000000001 540.25,543.0" fill="none" stroke="#555" stroke-width="0.55"/><text x="524.25" y="542.4000000000001" font-size="2.4" fill="#777" text-anchor="start" font-weight="normal">T6E9</text><text x="537.25" y="542.4000000000001" font-size="2.4" fill="#777" text-anchor="start" font-weight="normal">5S1NN</text><text x="562.0" y="545.2" font-size="2.9" fill="#707070" text-anchor="start" font-weight="normal">EFJR0I9SH0O</text><line x1="508" y1="550.5" x2="560.5" y2="550.5" stroke="#6a6a6a" stroke-width="0.9"/><text x="559.5" y="549.4" font-size="2.6" fill="#666" text-anchor="end" font-weight="normal">88</text><rect x="502.5" y="548.4" width="5" height="3.2" rx="1.2" fill="none" stroke="#8a8a9a" stroke-width="0.5"/><rect x="488.4" y="547.4" width="12.600000000000001" height="4.6" fill="none" stroke="#6a6ad8" stroke-width="0.45" stroke-dasharray="0.8 0.6"/><text x="500.5" y="551.3" font-size="3.6" fill="#3434b4" text-anchor="end" font-weight="normal">2BKA85</text><polyline points="530.25,550 531.50,551.2 532.75,548.8 534.00,551.2 535.25,548.8 536.50,551.2 537.75,548.8 539.00,551.2 540.25,548.8" fill="none" stroke="#555" stroke-width="0.55"/><text x="524.25" y="548.2" font-size="2.4" fill="#777" text-anchor="start" font-weight="normal">2UJ3</text><text x="537.25" y="548.2" font-size="2.4" fill="#777" text-anchor="start" font-weight="normal">_1VHW</text><text x="562.0" y="551.0" font-size="2.9" fill="#707070" text-anchor="start" font-weight="normal">AVW2HMATR0E</text><line x1="508" y1="561.5" x2="560.5" y2="561.5" stroke="#6a6a6a" stroke-width="0.9"/><text x="559.5" y="561.3" font-size="2.6" fill="#666" text-anchor="end" font-weight="normal">21</text><rect x="502.5" y="560.3" width="5" height="3.2" rx="1.2" fill="none" stroke="#8a8a9a" stroke-width="0.5"/><rect x="484.2" y="559.3" width="16.8" height="4.6" fill="none" stroke="#6a6ad8" stroke-width="0.45" stroke-dasharray="0.8 0.6"/><text x="500.5" y="563.1999999999999" font-size="3.6" fill="#3434b4" text-anchor="end" font-weight="normal">E04SDSGD</text><polyline points="530.25,561.9 531.50,563.1 532.75,560.6999999999999 534.00,563.1 535.25,560.6999999999999 536.50,563.1 537.75,560.6999999999999 539.00,563.1 540.25,560.6999999999999" fill="none" stroke="#555" stroke-width="0.55"/><text x="524.25" y="560.1" font-size="2.4" fill="#777" text-anchor="start" font-weight="normal">TJPS</text><text x="537.25" y="560.1" font-size="2.4" fill="#777" text-anchor="start" font-weight="normal">49VM0</text><text x="562.0" y="562.9" font-size="2.9" fill="#707070" text-anchor="start" font-weight="normal">4B2NFD35IT8</text><line x1="508" y1="567.5" x2="560.5" y2="567.5" stroke="#6a6a6a" stroke-width="0.9"/><text x="559.5" y="566.8" font-size="2.6" fill="#666" text-anchor="end" font-weight="normal">DI</text><rect x="502.5" y="565.8" width="5" height="3.2" rx="1.2" fill="none" stroke="#8a8a9a" stroke-width="0.5"/><rect x="482.1" y="564.8" width="18.900000000000002" height="4.6" fill="none" stroke="#6a6ad8" stroke-width="0.45" stroke-dasharray="0.8 0.6"/><text x="500.5" y="568.6999999999999" font-size="3.6" fill="#3434b4" text-anchor="end" font-weight="normal">K73WTURR2</text><polyline points="530.25,567.4 531.50,568.6 532.75,566.1999999999999 534.00,568.6 535.25,566.1999999999999 536.50,568.6 537.75,566.1999999999999 539.00,568.6 540.25,566.1999999999999" fill="none" stroke="#555" stroke-width="0.55"/><text x="524.25" y="565.6" font-size="2.4" fill="#777" text-anchor="start" font-weight="normal">PU72</text><text x="537.25" y="565.6" font-size="2.4" fill="#777" text-anchor="start" font-weight="normal">HKKEN</text><text x="562.0" y="568.4" font-size="2.9" fill="#707070" text-anchor="start" font-weight="normal">98O5W54IMPF</text><line x1="508" y1="584.5" x2="560.5" y2="584.5" stroke="#6a6a6a" stroke-width="0.9"/><text x="559.5" y="583.9" font-size="2.6" fill="#666" text-anchor="end" font-weight="normal">LW</text><rect x="502.5" y="582.9" width="5" height="3.2" rx="1.2" fill="none" stroke="#8a8a9a" stroke-width="0.5"/><rect x="484.2" y="581.9" width="16.8" height="4.6" fill="none" stroke="#6a6ad8" stroke-width="0.45" stroke-dasharray="0.8 0.6"/><text x="500.5" y="585.8" font-size="3.6" fill="#3434b4" text-anchor="end" font-weight="normal">FVP0RMB3</text><text x="562.0" y="585.5" font-size="2.9" fill="#707070" text-anchor="start" font-weight="normal">13N1SWD8S0I</text><line x1="508" y1="590.5" x2="560.5" y2="590.5" stroke="#6a6a6a" stroke-width="0.9"/><text x="559.5" y="589.6" font-size="2.6" fill="#666" text-anchor="end" font-weight="normal">9N</text><rect x="502.5" y="588.6" width="5" height="3.2" rx="1.2" fill="none" stroke="#8a8a9a" stroke-width="0.5"/><rect x="482.1" y="587.6" width="18.900000000000002" height="4.6" fill="none" stroke="#6a6ad8" stroke-width="0.45" stroke-dasharray="0.8 0.6"/><text x="500.5" y="591.5" font-size="3.6" fill="#3434b4" text-anchor="end" font-weight="normal">FSP1254UB</text><text x="562.0" y="591.2" font-size="2.9" fill="#707070" text-anchor="start" font-weight="normal">IC478AE265P</text><line x1="508" y1="608.5" x2="560.5" y2="608.5" stroke="#6a6a6a" stroke-width="0.9"/><text x="559.5" y="607.6" font-size="2.6" fill="#666" text-anchor="end" font-weight="normal">GO</text><rect x="502.5" y="606.6" width="5" height="3.2" rx="1.2" fill="none" stroke="#8a8a9a" stroke-width="0.5"/><rect x="492.6" y="605.6" width="8.4" height="4.6" fill="none" stroke="#6a6ad8" stroke-width="0.45" stroke-dasharray="0.8 0.6"/><text x="500.5" y="609.5" font-size="3.6" fill="#3434b4" text-anchor="end" font-weight="normal">JJG6</text><text x="562.0" y="609.2" font-size="2.9" fill="#707070" text-anchor="start" font-weight="normal">FCAIOCUIR4H</text><line x1="508" y1="613.5" x2="560.5" y2="613.5" stroke="#6a6a6a" stroke-width="0.9"/><text x="559.5" y="613.1" font-size="2.6" fill="#666" text-anchor="end" font-weight="normal">GE</text><rect x="502.5" y="612.1" width="5" height="3.2" rx="1.2" fill="none" stroke="#8a8a9a" stroke-width="0.5"/><rect x="492.6" y="611.1" width="8.4" height="4.6" fill="none" stroke="#6a6ad8" stroke-width="0.45" stroke-dasharray="0.8 0.6"/><text x="500.5" y="615.0" font-size="3.6" fill="#3434b4" text-anchor="end" font-weight="normal">UM1R</text><text x="562.0" y="614.7" font-size="2.9" fill="#707070" text-anchor="start" font-weight="normal">OAAU6SVP7PP</text><line x1="508" y1="630.5" x2="560.5" y2="630.5" stroke="#6a6a6a" stroke-width="0.9"/><text x="559.5" y="629.9" font-size="2.6" fill="#666" text-anchor="end" font-weight="normal">B3</text><rect x="502.5" y="628.9" width="5" height="3.2" rx="1.2" fill="none" stroke="#8a8a9a" stroke-width="0.5"/><rect x="492.6" y="627.9" width="8.4" height="4.6" fill="none" stroke="#6a6ad8" stroke-width="0.45" stroke-dasharray="0.8 0.6"/><text x="500.5" y="631.8" font-size="3.6" fill="#3434b4" text-anchor="end" font-weight="normal">UDBM</text><polyline points="530.25,630.5 531.50,631.7 532.75,629.3 534.00,631.7 535.25,629.3 536.50,631.7 537.75,629.3 539.00,631.7 540.25,629.3" fill="none" stroke="#555" stroke-width="0.55"/><text x="524.25" y="628.7" font-size="2.4" fill="#777" text-anchor="start" font-weight="normal">83FR</text><text x="537.25" y="628.7" font-size="2.4" fill="#777" text-anchor="start" font-weight="normal">O40O8</text><text x="562.0" y="631.5" font-size="2.9" fill="#707070" text-anchor="start" font-weight="normal">CW302MAT9EN</text><line x1="508" y1="636.5" x2="560.5" y2="636.5" stroke="#6a6a6a" stroke-width="0.9"/><text x="559.5" y="635.6" font-size="2.6" fill="#666" text-anchor="end" font-weight="normal">8M</text><rect x="502.5" y="634.6" width="5" height="3.2" rx="1.2" fill="none" stroke="#8a8a9a" stroke-width="0.5"/><rect x="486.3" y="633.6" width="14.700000000000001" height="4.6" fill="none" stroke="#6a6ad8" stroke-width="0.45" stroke-dasharray="0.8 0.6"/><text x="500.5" y="637.5" font-size="3.6" fill="#3434b4" text-anchor="end" font-weight="normal">UMO6ORT</text><text x="562.0" y="637.2" font-size="2.9" fill="#707070" text-anchor="start" font-weight="normal">G8LO83DJ2DN</text><line x1="508" y1="642.5" x2="560.5" y2="642.5" stroke="#6a6a6a" stroke-width="0.9"/><text x="559.5" y="641.4" font-size="2.6" fill="#666" text-anchor="end" font-weight="normal">BJ</text><rect x="502.5" y="640.4" width="5" height="3.2" rx="1.2" fill="none" stroke="#8a8a9a" stroke-width="0.5"/><rect x="486.3" y="639.4" width="14.700000000000001" height="4.6" fill="none" stroke="#6a6ad8" stroke-width="0.45" stroke-dasharray="0.8 0.6"/><text x="500.5" y="643.3" font-size="3.6" fill="#3434b4" text-anchor="end" font-weight="normal">3DDL25V</text><text x="562.0" y="643.0" font-size="2.9" fill="#707070" text-anchor="start" font-weight="normal">HFKWML6CU10</text><line x1="553.5" y1="647.5" x2="560.5" y2="647.5" stroke="#6a6a6a" stroke-width="0.9"/><text x="559.5" y="647.1" font-size="2.6" fill="#666" text-anchor="end" font-weight="normal">W5</text><text x="562.0" y="648.7" font-size="2.9" fill="#707070" text-anchor="start" font-weight="normal">KGAFSF_3HN1</text><line x1="553.5" y1="653.5" x2="560.5" y2="653.5" stroke="#6a6a6a" stroke-width="0.9"/><text x="559.5" y="652.9" font-size="2.6" fill="#666" text-anchor="end" font-weight="normal">_U</text><text x="562.0" y="654.5" font-size="2.9" fill="#707070" text-anchor="start" font-weight="normal">4FD7M05MV07</text><line x1="553.5" y1="668.5" x2="560.5" y2="668.5" stroke="#6a6a6a" stroke-width="0.9"/><text x="559.5" y="667.4" font-size="2.6" fill="#666" text-anchor="end" font-weight="normal">B3</text><text x="562.0" y="669.0" font-size="2.9" fill="#707070" text-anchor="start" font-weight="normal">P2C1C6EDRME</text><line x1="553.5" y1="673.5" x2="560.5" y2="673.5" stroke="#6a6a6a" stroke-width="0.9"/><text x="559.5" y="672.9" font-size="2.6" fill="#666" text-anchor="end" font-weight="normal">W0</text><text x="562.0" y="674.5" font-size="2.9" fill="#707070" text-anchor="start" font-weight="normal">SWCRVSUAEBO</text><line x1="553.5" y1="685.5" x2="560.5" y2="685.5" stroke="#6a6a6a" stroke-width="0.9"/><text x="559.5" y="684.4" font-size="2.6" fill="#666" text-anchor="end" font-weight="normal">G7</text><text x="562.0" y="686.0" font-size="2.9" fill="#707070" text-anchor="start" font-weight="normal">61R48I8LAUJ</text><line x1="553.5" y1="690.5" x2="560.5" y2="690.5" stroke="#6a6a6a" stroke-width="0.9"/><text x="559.5" y="690.1999999999999" font-size="2.6" fill="#666" text-anchor="end" font-weight="normal">PV</text><text x="562.0" y="691.8" font-size="2.9" fill="#707070" text-anchor="start" font-weight="normal">V60F9M2KP3E</text><line x1="553.5" y1="705.5" x2="560.5" y2="705.5" stroke="#6a6a6a" stroke-width="0.9"/><text x="559.5" y="704.6999999999999" font-size="2.6" fill="#666" text-anchor="end" font-weight="normal">C7</text><text x="562.0" y="706.3" font-size="2.9" fill="#707070" text-anchor="start" font-weight="normal">VK4GERFNG38</text><line x1="675.5" y1="240.5" x2="741" y2="240.5" stroke="#6a6a6a" stroke-width="0.9"/><text x="676.5" y="239.5" font-size="2.6" fill="#666" text-anchor="start" font-weight="normal">5L</text><rect x="741" y="238.5" width="5" height="3.2" rx="1.2" fill="none" stroke="#8a8a9a" stroke-width="0.5"/><rect x="747" y="237.5" width="14.700000000000001" height="4.6" fill="none" stroke="#6a6ad8" stroke-width="0.45" stroke-dasharray="0.8 0.6"/><text x="747.5" y="241.4" font-size="3.6" fill="#3434b4" text-anchor="start" font-weight="normal">OI36PHT</text><polyline points="705.25,240.1 706.50,241.29999999999998 707.75,238.9 709.00,241.29999999999998 710.25,238.9 711.50,241.29999999999998 712.75,238.9 714.00,241.29999999999998 715.25,238.9" fill="none" stroke="#555" stroke-width="0.55"/><text x="699.25" y="238.29999999999998" font-size="2.4" fill="#777" text-anchor="start" font-weight="normal">TSS0</text><text x="712.25" y="238.29999999999998" font-size="2.4" fill="#777" text-anchor="start" font-weight="normal">RRM5P</text><text x="674.0" y="241.1" font-size="2.9" fill="#707070" text-anchor="end" font-weight="normal">LPPJTMVE2RP9OG6</text><line x1="675.5" y1="245.5" x2="741" y2="245.5" stroke="#6a6a6a" stroke-width="0.9"/><text x="676.5" y="245.3" font-size="2.6" fill="#666" text-anchor="start" font-weight="normal">CG</text><rect x="741" y="244.3" width="5" height="3.2" rx="1.2" fill="none" stroke="#8a8a9a" stroke-width="0.5"/><rect x="747" y="243.3" width="14.700000000000001" height="4.6" fill="none" stroke="#6a6ad8" stroke-width="0.45" stroke-dasharray="0.8 0.6"/><text x="747.5" y="247.20000000000002" font-size="3.6" fill="#3434b4" text-anchor="start" font-weight="normal">A7O50CT</text><polyline points="705.25,245.9 706.50,247.1 707.75,244.70000000000002 709.00,247.1 710.25,244.70000000000002 711.50,247.1 712.75,244.70000000000002 714.00,247.1 715.25,244.70000000000002" fill="none" stroke="#555" stroke-width="0.55"/><text x="699.25" y="244.1" font-size="2.4" fill="#777" text-anchor="start" font-weight="normal">OHDM</text><text x="712.25" y="244.1" font-size="2.4" fill="#777" text-anchor="start" font-weight="normal">ME09L</text><text x="674.0" y="246.9" font-size="2.9" fill="#707070" text-anchor="end" font-weight="normal">5RAG_NC0WJCNRCN</text><line x1="675.5" y1="251.5" x2="741" y2="251.5" stroke="#6a6a6a" stroke-width="0.9"/><text x="676.5" y="251.3" font-size="2.6" fill="#666" text-anchor="start" font-weight="normal">AV</text><rect x="741" y="250.3" width="5" height="3.2" rx="1.2" fill="none" stroke="#8a8a9a" stroke-width="0.5"/><rect x="747" y="249.3" width="14.700000000000001" height="4.6" fill="none" stroke="#6a6ad8" stroke-width="0.45" stroke-dasharray="0.8 0.6"/><text x="747.5" y="253.20000000000002" font-size="3.6" fill="#3434b4" text-anchor="start" font-weight="normal">30LUENC</text><polyline points="705.25,251.9 706.50,253.1 707.75,250.70000000000002 709.00,253.1 710.25,250.70000000000002 711.50,253.1 712.75,250.70000000000002 714.00,253.1 715.25,250.70000000000002" fill="none" stroke="#555" stroke-width="0.55"/><text x="699.25" y="250.1" font-size="2.4" fill="#777" text-anchor="start" font-weight="normal">87E3</text><text x="712.25" y="250.1" font-size="2.4" fill="#777" text-anchor="start" font-weight="normal">G2JFK</text><text x="674.0" y="252.9" font-size="2.9" fill="#707070" text-anchor="end" font-weight="normal">2S3TU3DU_33B0M2</text><line x1="675.5" y1="259.5" x2="741" y2="259.5" stroke="#6a6a6a" stroke-width="0.9"/><text x="676.5" y="259.2" font-size="2.6" fill="#666" text-anchor="start" font-weight="normal">2N</text><rect x="741" y="258.2" width="5" height="3.2" rx="1.2" fill="none" stroke="#8a8a9a" stroke-width="0.5"/><rect x="747" y="257.2" width="12.600000000000001" height="4.6" fill="none" stroke="#6a6ad8" stroke-width="0.45" stroke-dasharray="0.8 0.6"/><text x="747.5" y="261.1" font-size="3.6" fill="#3434b4" text-anchor="start" font-weight="normal">A4K4HF</text><polyline points="705.25,259.8 706.50,261.0 707.75,258.6 709.00,261.0 710.25,258.6 711.50,261.0 712.75,258.6 714.00,261.0 715.25,258.6" fill="none" stroke="#555" stroke-width="0.55"/><text x="699.25" y="258.0" font-size="2.4" fill="#777" text-anchor="start" font-weight="normal">206K</text><text x="712.25" y="258.0" font-size="2.4" fill="#777" text-anchor="start" font-weight="normal">IADJ2</text><text x="674.0" y="260.8" font-size="2.9" fill="#707070" text-anchor="end" font-weight="normal">F09KJ_TKKEG18MU</text><line x1="675.5" y1="265.5" x2="741" y2="265.5" stroke="#6a6a6a" stroke-width="0.9"/><text x="676.5" y="265.2" font-size="2.6" fill="#666" text-anchor="start" font-weight="normal">IC</text><rect x="741" y="264.2" width="5" height="3.2" rx="1.2" fill="none" stroke="#8a8a9a" stroke-width="0.5"/><rect x="747" y="263.2" width="12.600000000000001" height="4.6" fill="none" stroke="#6a6ad8" stroke-width="0.45" stroke-dasharray="0.8 0.6"/><text x="747.5" y="267.1" font-size="3.6" fill="#3434b4" text-anchor="start" font-weight="normal">7VD1FK</text><polyline points="705.25,265.8 706.50,267.0 707.75,264.6 709.00,267.0 710.25,264.6 711.50,267.0 712.75,264.6 714.00,267.0 715.25,264.6" fill="none" stroke="#555" stroke-width="0.55"/><text x="699.25" y="264.0" font-size="2.4" fill="#777" text-anchor="start" font-weight="normal">O2M7</text><text x="712.25" y="264.0" font-size="2.4" fill="#777" text-anchor="start" font-weight="normal">LNC2K</text><text x="674.0" y="266.8" font-size="2.9" fill="#707070" text-anchor="end" font-weight="normal">1_HJPMCCVH16U3U</text><line x1="675.5" y1="271.5" x2="741" y2="271.5" stroke="#6a6a6a" stroke-width="0.9"/><text x="676.5" y="271.0" font-size="2.6" fill="#666" text-anchor="start" font-weight="normal">P4</text><rect x="741" y="270.0" width="5" height="3.2" rx="1.2" fill="none" stroke="#8a8a9a" stroke-width="0.5"/><rect x="747" y="269.0" width="12.600000000000001" height="4.6" fill="none" stroke="#6a6ad8" stroke-width="0.45" stroke-dasharray="0.8 0.6"/><text x="747.5" y="272.90000000000003" font-size="3.6" fill="#3434b4" text-anchor="start" font-weight="normal">10595L</text><polyline points="705.25,271.6 706.50,272.8 707.75,270.40000000000003 709.00,272.8 710.25,270.40000000000003 711.50,272.8 712.75,270.40000000000003 714.00,272.8 715.25,270.40000000000003" fill="none" stroke="#555" stroke-width="0.55"/><text x="699.25" y="269.8" font-size="2.4" fill="#777" text-anchor="start" font-weight="normal">BA86</text><text x="712.25" y="269.8" font-size="2.4" fill="#777" text-anchor="start" font-weight="normal">P56L7</text><text x="674.0" y="272.6" font-size="2.9" fill="#707070" text-anchor="end" font-weight="normal">2GEI_40F599CCIF</text><line x1="675.5" y1="283.5" x2="682.5" y2="283.5" stroke="#6a6a6a" stroke-width="0.9"/><text x="676.5" y="282.59999999999997" font-size="2.6" fill="#666" text-anchor="start" font-weight="normal">V9</text><text x="674.0" y="284.2" font-size="2.9" fill="#707070" text-anchor="end" font-weight="normal">FD91IBEHMI8TKOE</text><line x1="675.5" y1="288.5" x2="682.5" y2="288.5" stroke="#6a6a6a" stroke-width="0.9"/><text x="676.5" y="288.2" font-size="2.6" fill="#666" text-anchor="start" font-weight="normal">_R</text><text x="674.0" y="289.8" font-size="2.9" fill="#707070" text-anchor="end" font-weight="normal">KVS6JR97NR9PV0C</text><line x1="675.5" y1="294.5" x2="682.5" y2="294.5" stroke="#6a6a6a" stroke-width="0.9"/><text x="676.5" y="293.79999999999995" font-size="2.6" fill="#666" text-anchor="start" font-weight="normal">ML</text><text x="674.0" y="295.4" font-size="2.9" fill="#707070" text-anchor="end" font-weight="normal">2KSV1KRHD05GR20</text><line x1="675.5" y1="300.5" x2="682.5" y2="300.5" stroke="#6a6a6a" stroke-width="0.9"/><text x="676.5" y="299.4" font-size="2.6" fill="#666" text-anchor="start" font-weight="normal">R1</text><text x="674.0" y="301.0" font-size="2.9" fill="#707070" text-anchor="end" font-weight="normal">0J0WF5OLDTRUVAC</text><line x1="675.5" y1="311.5" x2="743" y2="311.5" stroke="#6a6a6a" stroke-width="0.9"/><text x="676.5" y="311.2" font-size="2.6" fill="#666" text-anchor="start" font-weight="normal">OJ</text><rect x="743" y="310.2" width="5" height="3.2" rx="1.2" fill="none" stroke="#8a8a9a" stroke-width="0.5"/><rect x="749" y="309.2" width="21.0" height="4.6" fill="none" stroke="#6a6ad8" stroke-width="0.45" stroke-dasharray="0.8 0.6"/><text x="749.5" y="313.1" font-size="3.6" fill="#3434b4" text-anchor="start" font-weight="normal">T4390DI8OC</text><text x="674.0" y="312.8" font-size="2.9" fill="#707070" text-anchor="end" font-weight="normal">BDA_UG_O3UIN07K</text><line x1="675.5" y1="317.5" x2="743" y2="317.5" stroke="#6a6a6a" stroke-width="0.9"/><text x="676.5" y="316.79999999999995" font-size="2.6" fill="#666" text-anchor="start" font-weight="normal">IA</text><rect x="743" y="315.79999999999995" width="5" height="3.2" rx="1.2" fill="none" stroke="#8a8a9a" stroke-width="0.5"/><rect x="749" y="314.79999999999995" width="21.0" height="4.6" fill="none" stroke="#6a6ad8" stroke-width="0.45" stroke-dasharray="0.8 0.6"/><text x="749.5" y="318.7" font-size="3.6" fill="#3434b4" text-anchor="start" font-weight="normal">PJ5GEJS2RA</text><text x="674.0" y="318.4" font-size="2.9" fill="#707070" text-anchor="end" font-weight="normal">D_58PKACDB2LPKD</text><line x1="675.5" y1="323.5" x2="743" y2="323.5" stroke="#6a6a6a" stroke-width="0.9"/><text x="676.5" y="322.9" font-size="2.6" fill="#666" text-anchor="start" font-weight="normal">GA</text><rect x="743" y="321.9" width="5" height="3.2" rx="1.2" fill="none" stroke="#8a8a9a" stroke-width="0.5"/><rect x="749" y="320.9" width="21.0" height="4.6" fill="none" stroke="#6a6ad8" stroke-width="0.45" stroke-dasharray="0.8 0.6"/><text x="749.5" y="324.8" font-size="3.6" fill="#3434b4" text-anchor="start" font-weight="normal">MJ3M93L9UE</text><text x="674.0" y="324.5" font-size="2.9" fill="#707070" text-anchor="end" font-weight="normal">UD7A146F5LOGROC</text><line x1="675.5" y1="329.5" x2="743" y2="329.5" stroke="#6a6a6a" stroke-width="0.9"/><text x="676.5" y="328.9" font-size="2.6" fill="#666" text-anchor="start" font-weight="normal">HW</text><rect x="743" y="327.9" width="5" height="3.2" rx="1.2" fill="none" stroke="#8a8a9a" stroke-width="0.5"/><rect x="749" y="326.9" width="21.0" height="4.6" fill="none" stroke="#6a6ad8" stroke-width="0.45" stroke-dasharray="0.8 0.6"/><text x="749.5" y="330.8" font-size="3.6" fill="#3434b4" text-anchor="start" font-weight="normal">RDS4RTNF9A</text><text x="674.0" y="330.5" font-size="2.9" fill="#707070" text-anchor="end" font-weight="normal">KRPMKVM1WP177AB</text><line x1="675.5" y1="340.5" x2="744" y2="340.5" stroke="#6a6a6a" stroke-width="0.9"/><text x="676.5" y="340.09999999999997" font-size="2.6" fill="#666" text-anchor="start" font-weight="normal">4O</text><rect x="744" y="339.09999999999997" width="5" height="3.2" rx="1.2" fill="none" stroke="#8a8a9a" stroke-width="0.5"/><rect x="750" y="338.09999999999997" width="16.8" height="4.6" fill="none" stroke="#6a6ad8" stroke-width="0.45" stroke-dasharray="0.8 0.6"/><text x="750.5" y="342.0" font-size="3.6" fill="#3434b4" text-anchor="start" font-weight="normal">UN2EKJCB</text><polyline points="706.75,340.7 708.00,341.9 709.25,339.5 710.50,341.9 711.75,339.5 713.00,341.9 714.25,339.5 715.50,341.9 716.75,339.5" fill="none" stroke="#555" stroke-width="0.55"/><text x="700.75" y="338.9" font-size="2.4" fill="#777" text-anchor="start" font-weight="normal">HGK_</text><text x="713.75" y="338.9" font-size="2.4" fill="#777" text-anchor="start" font-weight="normal">JBBCI</text><text x="674.0" y="341.7" font-size="2.9" fill="#707070" text-anchor="end" font-weight="normal">CECE0ME1GPNNHCC</text><line x1="675.5" y1="346.5" x2="744" y2="346.5" stroke="#6a6a6a" stroke-width="0.9"/><text x="676.5" y="345.7" font-size="2.6" fill="#666" text-anchor="start" font-weight="normal">FT</text><rect x="744" y="344.7" width="5" height="3.2" rx="1.2" fill="none" stroke="#8a8a9a" stroke-width="0.5"/><rect x="750" y="343.7" width="14.700000000000001" height="4.6" fill="none" stroke="#6a6ad8" stroke-width="0.45" stroke-dasharray="0.8 0.6"/><text x="750.5" y="347.6" font-size="3.6" fill="#3434b4" text-anchor="start" font-weight="normal">7GIGNTV</text><text x="674.0" y="347.3" font-size="2.9" fill="#707070" text-anchor="end" font-weight="normal">W4RB_RTD0V97TB3</text><line x1="675.5" y1="351.5" x2="744" y2="351.5" stroke="#6a6a6a" stroke-width="0.9"/><text x="676.5" y="351.29999999999995" font-size="2.6" fill="#666" text-anchor="start" font-weight="normal">B4</text><rect x="744" y="350.29999999999995" width="5" height="3.2" rx="1.2" fill="none" stroke="#8a8a9a" stroke-width="0.5"/><rect x="750" y="349.29999999999995" width="14.700000000000001" height="4.6" fill="none" stroke="#6a6ad8" stroke-width="0.45" stroke-dasharray="0.8 0.6"/><text x="750.5" y="353.2" font-size="3.6" fill="#3434b4" text-anchor="start" font-weight="normal">G_7DNFT</text><text x="674.0" y="352.9" font-size="2.9" fill="#707070" text-anchor="end" font-weight="normal">K4AMTDA_8G8L8_9</text><line x1="675.5" y1="357.5" x2="744" y2="357.5" stroke="#6a6a6a" stroke-width="0.9"/><text x="676.5" y="357.29999999999995" font-size="2.6" fill="#666" text-anchor="start" font-weight="normal">RK</text><rect x="744" y="356.29999999999995" width="5" height="3.2" rx="1.2" fill="none" stroke="#8a8a9a" stroke-width="0.5"/><rect x="750" y="355.29999999999995" width="14.700000000000001" height="4.6" fill="none" stroke="#6a6ad8" stroke-width="0.45" stroke-dasharray="0.8 0.6"/><text x="750.5" y="359.2" font-size="3.6" fill="#3434b4" text-anchor="start" font-weight="normal">TNO8KHF</text><text x="674.0" y="358.9" font-size="2.9" fill="#707070" text-anchor="end" font-weight="normal">8GV_G22F4B0NUR4</text><line x1="675.5" y1="363.5" x2="744" y2="363.5" stroke="#6a6a6a" stroke-width="0.9"/><text x="676.5" y="363.09999999999997" font-size="2.6" fill="#666" text-anchor="start" font-weight="normal">9K</text><rect x="744" y="362.09999999999997" width="5" height="3.2" rx="1.2" fill="none" stroke="#8a8a9a" stroke-width="0.5"/><rect x="750" y="361.09999999999997" width="14.700000000000001" height="4.6" fill="none" stroke="#6a6ad8" stroke-width="0.45" stroke-dasharray="0.8 0.6"/><text x="750.5" y="365.0" font-size="3.6" fill="#3434b4" text-anchor="start" font-weight="normal">1O6IC_V</text><text x="674.0" y="364.7" font-size="2.9" fill="#707070" text-anchor="end" font-weight="normal">J5VK65ROIW6P9MS</text><line x1="675.5" y1="369.5" x2="744" y2="369.5" stroke="#6a6a6a" stroke-width="0.9"/><text x="676.5" y="368.7" font-size="2.6" fill="#666" text-anchor="start" font-weight="normal">UJ</text><rect x="744" y="367.7" width="5" height="3.2" rx="1.2" fill="none" stroke="#8a8a9a" stroke-width="0.5"/><rect x="750" y="366.7" width="14.700000000000001" height="4.6" fill="none" stroke="#6a6ad8" stroke-width="0.45" stroke-dasharray="0.8 0.6"/><text x="750.5" y="370.6" font-size="3.6" fill="#3434b4" text-anchor="start" font-weight="normal">JPV_KPV</text><text x="674.0" y="370.3" font-size="2.9" fill="#707070" text-anchor="end" font-weight="normal">MRGKGM1JJUU4SMG</text><line x1="675.5" y1="380.5" x2="682.5" y2="380.5" stroke="#6a6a6a" stroke-width="0.9"/><text x="676.5" y="379.79999999999995" font-size="2.6" fill="#666" text-anchor="start" font-weight="normal">GS</text><text x="674.0" y="381.4" font-size="2.9" fill="#707070" text-anchor="end" font-weight="normal">N16CA24O9T6BJR2</text><line x1="675.5" y1="386.5" x2="682.5" y2="386.5" stroke="#6a6a6a" stroke-width="0.9"/><text x="676.5" y="385.5" font-size="2.6" fill="#666" text-anchor="start" font-weight="normal">AP</text><text x="674.0" y="387.1" font-size="2.9" fill="#707070" text-anchor="end" font-weight="normal">43OOLH64VRG3P2K</text><line x1="675.5" y1="391.5" x2="682.5" y2="391.5" stroke="#6a6a6a" stroke-width="0.9"/><text x="676.5" y="391.29999999999995" font-size="2.6" fill="#666" text-anchor="start" font-weight="normal">R4</text><text x="674.0" y="392.9" font-size="2.9" fill="#707070" text-anchor="end" font-weight="normal">76B3LVA18GCRNKM</text><line x1="675.5" y1="397.5" x2="682.5" y2="397.5" stroke="#6a6a6a" stroke-width="0.9"/><text x="676.5" y="397.0" font-size="2.6" fill="#666" text-anchor="start" font-weight="normal">_G</text><text x="674.0" y="398.6" font-size="2.9" fill="#707070" text-anchor="end" font-weight="normal">6N79B0W36NL29H_</text><line x1="675.5" y1="403.5" x2="682.5" y2="403.5" stroke="#6a6a6a" stroke-width="0.9"/><text x="676.5" y="402.7" font-size="2.6" fill="#666" text-anchor="start" font-weight="normal">DR</text><text x="674.0" y="404.3" font-size="2.9" fill="#707070" text-anchor="end" font-weight="normal">S12DAE33_RGOU2O</text><line x1="675.5" y1="409.5" x2="682.5" y2="409.5" stroke="#6a6a6a" stroke-width="0.9"/><text x="676.5" y="408.4" font-size="2.6" fill="#666" text-anchor="start" font-weight="normal">26</text><text x="674.0" y="410.0" font-size="2.9" fill="#707070" text-anchor="end" font-weight="normal">NKIEM7OJ_36TI7_</text><line x1="675.5" y1="421.5" x2="682.5" y2="421.5" stroke="#6a6a6a" stroke-width="0.9"/><text x="676.5" y="420.4" font-size="2.6" fill="#666" text-anchor="start" font-weight="normal">OS</text><text x="674.0" y="422.0" font-size="2.9" fill="#707070" text-anchor="end" font-weight="normal">1R4L7AS_PUV784F</text><line x1="675.5" y1="426.5" x2="682.5" y2="426.5" stroke="#6a6a6a" stroke-width="0.9"/><text x="676.5" y="425.79999999999995" font-size="2.6" fill="#666" text-anchor="start" font-weight="normal">0J</text><text x="674.0" y="427.4" font-size="2.9" fill="#707070" text-anchor="end" font-weight="normal">U1DFVI_AANETRGJ</text><line x1="675.5" y1="432.5" x2="682.5" y2="432.5" stroke="#6a6a6a" stroke-width="0.9"/><text x="676.5" y="431.5" font-size="2.6" fill="#666" text-anchor="start" font-weight="normal">OL</text><text x="674.0" y="433.1" font-size="2.9" fill="#707070" text-anchor="end" font-weight="normal">5_JN2KFUM8NF5HH</text><line x1="675.5" y1="438.5" x2="741" y2="438.5" stroke="#6a6a6a" stroke-width="0.9"/><text x="676.5" y="437.7" font-size="2.6" fill="#666" text-anchor="start" font-weight="normal">R3</text><rect x="741" y="436.7" width="5" height="3.2" rx="1.2" fill="none" stroke="#8a8a9a" stroke-width="0.5"/><rect x="747" y="435.7" width="14.700000000000001" height="4.6" fill="none" stroke="#6a6ad8" stroke-width="0.45" stroke-dasharray="0.8 0.6"/><text x="747.5" y="439.6" font-size="3.6" fill="#3434b4" text-anchor="start" font-weight="normal">OI78D76</text><polyline points="705.25,438.3 706.50,439.5 707.75,437.1 709.00,439.5 710.25,437.1 711.50,439.5 712.75,437.1 714.00,439.5 715.25,437.1" fill="none" stroke="#555" stroke-width="0.55"/><text x="699.25" y="436.5" font-size="2.4" fill="#777" text-anchor="start" font-weight="normal">J8P8</text><text x="712.25" y="436.5" font-size="2.4" fill="#777" text-anchor="start" font-weight="normal">KAKV6</text><text x="674.0" y="439.3" font-size="2.9" fill="#707070" text-anchor="end" font-weight="normal">8T6043EL0BBCWG9</text><line x1="675.5" y1="444.5" x2="741" y2="444.5" stroke="#6a6a6a" stroke-width="0.9"/><text x="676.5" y="443.5" font-size="2.6" fill="#666" text-anchor="start" font-weight="normal">78</text><rect x="741" y="442.5" width="5" height="3.2" rx="1.2" fill="none" stroke="#8a8a9a" stroke-width="0.5"/><rect x="747" y="441.5" width="14.700000000000001" height="4.6" fill="none" stroke="#6a6ad8" stroke-width="0.45" stroke-dasharray="0.8 0.6"/><text x="747.5" y="445.40000000000003" font-size="3.6" fill="#3434b4" text-anchor="start" font-weight="normal">JCN3IWG</text><polyline points="705.25,444.1 706.50,445.3 707.75,442.90000000000003 709.00,445.3 710.25,442.90000000000003 711.50,445.3 712.75,442.90000000000003 714.00,445.3 715.25,442.90000000000003" fill="none" stroke="#555" stroke-width="0.55"/><text x="699.25" y="442.3" font-size="2.4" fill="#777" text-anchor="start" font-weight="normal">0W7N</text><text x="712.25" y="442.3" font-size="2.4" fill="#777" text-anchor="start" font-weight="normal">T4W4R</text><text x="674.0" y="445.1" font-size="2.9" fill="#707070" text-anchor="end" font-weight="normal">DTT_82W9S9_N8HW</text><line x1="675.5" y1="449.5" x2="682.5" y2="449.5" stroke="#6a6a6a" stroke-width="0.9"/><text x="676.5" y="449.2" font-size="2.6" fill="#666" text-anchor="start" font-weight="normal">MV</text><text x="674.0" y="450.8" font-size="2.9" fill="#707070" text-anchor="end" font-weight="normal">UIFC22D2UGACM7D</text><line x1="675.5" y1="461.5" x2="743" y2="461.5" stroke="#6a6a6a" stroke-width="0.9"/><text x="676.5" y="460.7" font-size="2.6" fill="#666" text-anchor="start" font-weight="normal">91</text><rect x="743" y="459.7" width="5" height="3.2" rx="1.2" fill="none" stroke="#8a8a9a" stroke-width="0.5"/><rect x="749" y="458.7" width="12.600000000000001" height="4.6" fill="none" stroke="#6a6ad8" stroke-width="0.45" stroke-dasharray="0.8 0.6"/><text x="749.5" y="462.6" font-size="3.6" fill="#3434b4" text-anchor="start" font-weight="normal">JFNC6L</text><text x="674.0" y="462.3" font-size="2.9" fill="#707070" text-anchor="end" font-weight="normal">GLC3GA0IURUL3CV</text><line x1="675.5" y1="467.5" x2="743" y2="467.5" stroke="#6a6a6a" stroke-width="0.9"/><text x="676.5" y="466.5" font-size="2.6" fill="#666" text-anchor="start" font-weight="normal">B4</text><rect x="743" y="465.5" width="5" height="3.2" rx="1.2" fill="none" stroke="#8a8a9a" stroke-width="0.5"/><rect x="749" y="464.5" width="12.600000000000001" height="4.6" fill="none" stroke="#6a6ad8" stroke-width="0.45" stroke-dasharray="0.8 0.6"/><text x="749.5" y="468.40000000000003" font-size="3.6" fill="#3434b4" text-anchor="start" font-weight="normal">D8CH32</text><text x="674.0" y="468.1" font-size="2.9" fill="#707070" text-anchor="end" font-weight="normal">5EA1J73GF7NJA4A</text><line x1="675.5" y1="472.5" x2="743" y2="472.5" stroke="#6a6a6a" stroke-width="0.9"/><text x="676.5" y="472.29999999999995" font-size="2.6" fill="#666" text-anchor="start" font-weight="normal">AH</text><rect x="743" y="471.29999999999995" width="5" height="3.2" rx="1.2" fill="none" stroke="#8a8a9a" stroke-width="0.5"/><rect x="749" y="470.29999999999995" width="12.600000000000001" height="4.6" fill="none" stroke="#6a6ad8" stroke-width="0.45" stroke-dasharray="0.8 0.6"/><text x="749.5" y="474.2" font-size="3.6" fill="#3434b4" text-anchor="start" font-weight="normal">FNHI7B</text><text x="674.0" y="473.9" font-size="2.9" fill="#707070" text-anchor="end" font-weight="normal">SP5LD0JFT86RDCA</text><line x1="675.5" y1="484.5" x2="682.5" y2="484.5" stroke="#6a6a6a" stroke-width="0.9"/><text x="676.5" y="483.79999999999995" font-size="2.6" fill="#666" text-anchor="start" font-weight="normal">DA</text><text x="674.0" y="485.4" font-size="2.9" fill="#707070" text-anchor="end" font-weight="normal">F1UUK8DV057KJH0</text><line x1="675.5" y1="489.5" x2="682.5" y2="489.5" stroke="#6a6a6a" stroke-width="0.9"/><text x="676.5" y="489.09999999999997" font-size="2.6" fill="#666" text-anchor="start" font-weight="normal">K3</text><text x="674.0" y="490.7" font-size="2.9" fill="#707070" text-anchor="end" font-weight="normal">715SWTSDWAJU4P1</text><line x1="675.5" y1="495.5" x2="682.5" y2="495.5" stroke="#6a6a6a" stroke-width="0.9"/><text x="676.5" y="494.79999999999995" font-size="2.6" fill="#666" text-anchor="start" font-weight="normal">11</text><text x="674.0" y="496.4" font-size="2.9" fill="#707070" text-anchor="end" font-weight="normal">O5TAVRS4KCTJJS8</text><line x1="675.5" y1="507.5" x2="743" y2="507.5" stroke="#6a6a6a" stroke-width="0.9"/><text x="676.5" y="506.79999999999995" font-size="2.6" fill="#666" text-anchor="start" font-weight="normal">_F</text><rect x="743" y="505.79999999999995" width="5" height="3.2" rx="1.2" fill="none" stroke="#8a8a9a" stroke-width="0.5"/><rect x="749" y="504.79999999999995" width="12.600000000000001" height="4.6" fill="none" stroke="#6a6ad8" stroke-width="0.45" stroke-dasharray="0.8 0.6"/><text x="749.5" y="508.7" font-size="3.6" fill="#3434b4" text-anchor="start" font-weight="normal">81MOUD</text><text x="674.0" y="508.4" font-size="2.9" fill="#707070" text-anchor="end" font-weight="normal">26NRA16F_EO2RV7</text><line x1="675.5" y1="513.5" x2="743" y2="513.5" stroke="#6a6a6a" stroke-width="0.9"/><text x="676.5" y="512.5" font-size="2.6" fill="#666" text-anchor="start" font-weight="normal">9M</text><rect x="743" y="511.5" width="5" height="3.2" rx="1.2" fill="none" stroke="#8a8a9a" stroke-width="0.5"/><rect x="749" y="510.5" width="12.600000000000001" height="4.6" fill="none" stroke="#6a6ad8" stroke-width="0.45" stroke-dasharray="0.8 0.6"/><text x="749.5" y="514.4" font-size="3.6" fill="#3434b4" text-anchor="start" font-weight="normal">MNMFLT</text><text x="674.0" y="514.1" font-size="2.9" fill="#707070" text-anchor="end" font-weight="normal">0_2JPC80G06FJVB</text><line x1="675.5" y1="518.5" x2="743" y2="518.5" stroke="#6a6a6a" stroke-width="0.9"/><text x="676.5" y="518.3" font-size="2.6" fill="#666" text-anchor="start" font-weight="normal">_S</text><rect x="743" y="517.3" width="5" height="3.2" rx="1.2" fill="none" stroke="#8a8a9a" stroke-width="0.5"/><rect x="749" y="516.3" width="12.600000000000001" height="4.6" fill="none" stroke="#6a6ad8" stroke-width="0.45" stroke-dasharray="0.8 0.6"/><text x="749.5" y="520.1999999999999" font-size="3.6" fill="#3434b4" text-anchor="start" font-weight="normal">BGCN8N</text><text x="674.0" y="519.9" font-size="2.9" fill="#707070" text-anchor="end" font-weight="normal">RS4G5IRCWML1FBD</text><line x1="675.5" y1="530.5" x2="743" y2="530.5" stroke="#6a6a6a" stroke-width="0.9"/><text x="676.5" y="529.8" font-size="2.6" fill="#666" text-anchor="start" font-weight="normal">C0</text><rect x="743" y="528.8" width="5" height="3.2" rx="1.2" fill="none" stroke="#8a8a9a" stroke-width="0.5"/><rect x="749" y="527.8" width="18.900000000000002" height="4.6" fill="none" stroke="#6a6ad8" stroke-width="0.45" stroke-dasharray="0.8 0.6"/><text x="749.5" y="531.6999999999999" font-size="3.6" fill="#3434b4" text-anchor="start" font-weight="normal">68E2HFRVO</text><polyline points="706.25,530.4 707.50,531.6 708.75,529.1999999999999 710.00,531.6 711.25,529.1999999999999 712.50,531.6 713.75,529.1999999999999 715.00,531.6 716.25,529.1999999999999" fill="none" stroke="#555" stroke-width="0.55"/><text x="700.25" y="528.6" font-size="2.4" fill="#777" text-anchor="start" font-weight="normal">F92L</text><text x="713.25" y="528.6" font-size="2.4" fill="#777" text-anchor="start" font-weight="normal">5K0PO</text><text x="674.0" y="531.4" font-size="2.9" fill="#707070" text-anchor="end" font-weight="normal">LCR_DBDR97DGJVA</text><line x1="675.5" y1="535.5" x2="743" y2="535.5" stroke="#6a6a6a" stroke-width="0.9"/><text x="676.5" y="535.1" font-size="2.6" fill="#666" text-anchor="start" font-weight="normal">MU</text><rect x="743" y="534.1" width="5" height="3.2" rx="1.2" fill="none" stroke="#8a8a9a" stroke-width="0.5"/><rect x="749" y="533.1" width="18.900000000000002" height="4.6" fill="none" stroke="#6a6ad8" stroke-width="0.45" stroke-dasharray="0.8 0.6"/><text x="749.5" y="537.0" font-size="3.6" fill="#3434b4" text-anchor="start" font-weight="normal">5G7V0R1H0</text><polyline points="706.25,535.7 707.50,536.9000000000001 708.75,534.5 710.00,536.9000000000001 711.25,534.5 712.50,536.9000000000001 713.75,534.5 715.00,536.9000000000001 716.25,534.5" fill="none" stroke="#555" stroke-width="0.55"/><text x="700.25" y="533.9000000000001" font-size="2.4" fill="#777" text-anchor="start" font-weight="normal">71K5</text><text x="713.25" y="533.9000000000001" font-size="2.4" fill="#777" text-anchor="start" font-weight="normal">PJA6M</text><text x="674.0" y="536.7" font-size="2.9" fill="#707070" text-anchor="end" font-weight="normal">CKOE0I5G1BE5WVO</text><line x1="675.5" y1="541.5" x2="743" y2="541.5" stroke="#6a6a6a" stroke-width="0.9"/><text x="676.5" y="540.8" font-size="2.6" fill="#666" text-anchor="start" font-weight="normal">7H</text><rect x="743" y="539.8" width="5" height="3.2" rx="1.2" fill="none" stroke="#8a8a9a" stroke-width="0.5"/><rect x="749" y="538.8" width="18.900000000000002" height="4.6" fill="none" stroke="#6a6ad8" stroke-width="0.45" stroke-dasharray="0.8 0.6"/><text x="749.5" y="542.6999999999999" font-size="3.6" fill="#3434b4" text-anchor="start" font-weight="normal">0JWODL5J5</text><polyline points="706.25,541.4 707.50,542.6 708.75,540.1999999999999 710.00,542.6 711.25,540.1999999999999 712.50,542.6 713.75,540.1999999999999 715.00,542.6 716.25,540.1999999999999" fill="none" stroke="#555" stroke-width="0.55"/><text x="700.25" y="539.6" font-size="2.4" fill="#777" text-anchor="start" font-weight="normal">JS33</text><text x="713.25" y="539.6" font-size="2.4" fill="#777" text-anchor="start" font-weight="normal">PJBST</text><text x="674.0" y="542.4" font-size="2.9" fill="#707070" text-anchor="end" font-weight="normal">WKR8GV67HJ9DN7T</text><line x1="675.5" y1="553.5" x2="682.5" y2="553.5" stroke="#6a6a6a" stroke-width="0.9"/><text x="676.5" y="552.8" font-size="2.6" fill="#666" text-anchor="start" font-weight="normal">HR</text><text x="674.0" y="554.4" font-size="2.9" fill="#707070" text-anchor="end" font-weight="normal">M04RPPG1T3KDTJB</text><line x1="675.5" y1="558.5" x2="682.5" y2="558.5" stroke="#6a6a6a" stroke-width="0.9"/><text x="676.5" y="558.1" font-size="2.6" fill="#666" text-anchor="start" font-weight="normal">59</text><text x="674.0" y="559.7" font-size="2.9" fill="#707070" text-anchor="end" font-weight="normal">W9I5ATL04C3NSLI</text><line x1="675.5" y1="564.5" x2="682.5" y2="564.5" stroke="#6a6a6a" stroke-width="0.9"/><text x="676.5" y="563.9" font-size="2.6" fill="#666" text-anchor="start" font-weight="normal">LO</text><text x="674.0" y="565.5" font-size="2.9" fill="#707070" text-anchor="end" font-weight="normal">LMFF8SLNIMUMAE3</text><line x1="675.5" y1="570.5" x2="682.5" y2="570.5" stroke="#6a6a6a" stroke-width="0.9"/><text x="676.5" y="569.6" font-size="2.6" fill="#666" text-anchor="start" font-weight="normal">D_</text><text x="674.0" y="571.2" font-size="2.9" fill="#707070" text-anchor="end" font-weight="normal">WT8FA37ISPL0CK0</text><line x1="675.5" y1="581.5" x2="682.5" y2="581.5" stroke="#6a6a6a" stroke-width="0.9"/><text x="676.5" y="581.1" font-size="2.6" fill="#666" text-anchor="start" font-weight="normal">A_</text><text x="674.0" y="582.7" font-size="2.9" fill="#707070" text-anchor="end" font-weight="normal">5EH_PV1DTG859BI</text><line x1="675.5" y1="587.5" x2="682.5" y2="587.5" stroke="#6a6a6a" stroke-width="0.9"/><text x="676.5" y="586.9" font-size="2.6" fill="#666" text-anchor="start" font-weight="normal">BP</text><text x="674.0" y="588.5" font-size="2.9" fill="#707070" text-anchor="end" font-weight="normal">FOLKGURBBGMRB6P</text><line x1="675.5" y1="593.5" x2="682.5" y2="593.5" stroke="#6a6a6a" stroke-width="0.9"/><text x="676.5" y="592.6" font-size="2.6" fill="#666" text-anchor="start" font-weight="normal">5G</text><text x="674.0" y="594.2" font-size="2.9" fill="#707070" text-anchor="end" font-weight="normal">_GLCSH689SHHH2I</text><line x1="675.5" y1="599.5" x2="682.5" y2="599.5" stroke="#6a6a6a" stroke-width="0.9"/><text x="676.5" y="598.4" font-size="2.6" fill="#666" text-anchor="start" font-weight="normal">OO</text><text x="674.0" y="600.0" font-size="2.9" fill="#707070" text-anchor="end" font-weight="normal">J62KB13C2D0W2PW</text><line x1="675.5" y1="610.5" x2="743" y2="610.5" stroke="#6a6a6a" stroke-width="0.9"/><text x="676.5" y="609.9" font-size="2.6" fill="#666" text-anchor="start" font-weight="normal">4V</text><rect x="743" y="608.9" width="5" height="3.2" rx="1.2" fill="none" stroke="#8a8a9a" stroke-width="0.5"/><rect x="749" y="607.9" width="14.700000000000001" height="4.6" fill="none" stroke="#6a6ad8" stroke-width="0.45" stroke-dasharray="0.8 0.6"/><text x="749.5" y="611.8" font-size="3.6" fill="#3434b4" text-anchor="start" font-weight="normal">2DVJ_P4</text><text x="674.0" y="611.5" font-size="2.9" fill="#707070" text-anchor="end" font-weight="normal">A0GLEV4M9BOI326</text><line x1="675.5" y1="616.5" x2="743" y2="616.5" stroke="#6a6a6a" stroke-width="0.9"/><text x="676.5" y="615.6" font-size="2.6" fill="#666" text-anchor="start" font-weight="normal">CC</text><rect x="743" y="614.6" width="5" height="3.2" rx="1.2" fill="none" stroke="#8a8a9a" stroke-width="0.5"/><rect x="749" y="613.6" width="14.700000000000001" height="4.6" fill="none" stroke="#6a6ad8" stroke-width="0.45" stroke-dasharray="0.8 0.6"/><text x="749.5" y="617.5" font-size="3.6" fill="#3434b4" text-anchor="start" font-weight="normal">CSSCGRH</text><text x="674.0" y="617.2" font-size="2.9" fill="#707070" text-anchor="end" font-weight="normal">A4PCTHU_KHD9SF6</text><line x1="675.5" y1="622.5" x2="682.5" y2="622.5" stroke="#6a6a6a" stroke-width="0.9"/><text x="676.5" y="621.4" font-size="2.6" fill="#666" text-anchor="start" font-weight="normal">J5</text><text x="674.0" y="623.0" font-size="2.9" fill="#707070" text-anchor="end" font-weight="normal">H9IT3TSPFT6O1M0</text><line x1="675.5" y1="627.5" x2="743" y2="627.5" stroke="#6a6a6a" stroke-width="0.9"/><text x="676.5" y="627.1" font-size="2.6" fill="#666" text-anchor="start" font-weight="normal">6U</text><rect x="743" y="626.1" width="5" height="3.2" rx="1.2" fill="none" stroke="#8a8a9a" stroke-width="0.5"/><rect x="749" y="625.1" width="21.0" height="4.6" fill="none" stroke="#6a6ad8" stroke-width="0.45" stroke-dasharray="0.8 0.6"/><text x="749.5" y="629.0" font-size="3.6" fill="#3434b4" text-anchor="start" font-weight="normal">77UBPWOM91</text><polyline points="706.25,627.7 707.50,628.9000000000001 708.75,626.5 710.00,628.9000000000001 711.25,626.5 712.50,628.9000000000001 713.75,626.5 715.00,628.9000000000001 716.25,626.5" fill="none" stroke="#555" stroke-width="0.55"/><text x="700.25" y="625.9000000000001" font-size="2.4" fill="#777" text-anchor="start" font-weight="normal">2A_K</text><text x="713.25" y="625.9000000000001" font-size="2.4" fill="#777" text-anchor="start" font-weight="normal">PVV8S</text><text x="674.0" y="628.7" font-size="2.9" fill="#707070" text-anchor="end" font-weight="normal">TNTDBKE_5D15_GO</text><line x1="675.5" y1="639.5" x2="743" y2="639.5" stroke="#6a6a6a" stroke-width="0.9"/><text x="676.5" y="638.6" font-size="2.6" fill="#666" text-anchor="start" font-weight="normal">J3</text><rect x="743" y="637.6" width="5" height="3.2" rx="1.2" fill="none" stroke="#8a8a9a" stroke-width="0.5"/><rect x="749" y="636.6" width="16.8" height="4.6" fill="none" stroke="#6a6ad8" stroke-width="0.45" stroke-dasharray="0.8 0.6"/><text x="749.5" y="640.5" font-size="3.6" fill="#3434b4" text-anchor="start" font-weight="normal">W_IMSG7S</text><text x="674.0" y="640.2" font-size="2.9" fill="#707070" text-anchor="end" font-weight="normal">I3GA3H82J3SH156</text><line x1="675.5" y1="645.5" x2="743" y2="645.5" stroke="#6a6a6a" stroke-width="0.9"/><text x="676.5" y="644.4" font-size="2.6" fill="#666" text-anchor="start" font-weight="normal">T_</text><rect x="743" y="643.4" width="5" height="3.2" rx="1.2" fill="none" stroke="#8a8a9a" stroke-width="0.5"/><rect x="749" y="642.4" width="16.8" height="4.6" fill="none" stroke="#6a6ad8" stroke-width="0.45" stroke-dasharray="0.8 0.6"/><text x="749.5" y="646.3" font-size="3.6" fill="#3434b4" text-anchor="start" font-weight="normal">T_21VA81</text><text x="674.0" y="646.0" font-size="2.9" fill="#707070" text-anchor="end" font-weight="normal">5ULUJ41OFWVPVN4</text><line x1="675.5" y1="656.5" x2="743" y2="656.5" stroke="#6a6a6a" stroke-width="0.9"/><text x="676.5" y="655.9" font-size="2.6" fill="#666" text-anchor="start" font-weight="normal">AB</text><rect x="743" y="654.9" width="5" height="3.2" rx="1.2" fill="none" stroke="#8a8a9a" stroke-width="0.5"/><rect x="749" y="653.9" width="18.900000000000002" height="4.6" fill="none" stroke="#6a6ad8" stroke-width="0.45" stroke-dasharray="0.8 0.6"/><text x="749.5" y="657.8" font-size="3.6" fill="#3434b4" text-anchor="start" font-weight="normal">DR8UU4416</text><polyline points="706.25,656.5 707.50,657.7 708.75,655.3 710.00,657.7 711.25,655.3 712.50,657.7 713.75,655.3 715.00,657.7 716.25,655.3" fill="none" stroke="#555" stroke-width="0.55"/><text x="700.25" y="654.7" font-size="2.4" fill="#777" text-anchor="start" font-weight="normal">_C_5</text><text x="713.25" y="654.7" font-size="2.4" fill="#777" text-anchor="start" font-weight="normal">AEOG3</text><text x="674.0" y="657.5" font-size="2.9" fill="#707070" text-anchor="end" font-weight="normal">092JM3825WFK0V0</text><line x1="675.5" y1="662.5" x2="743" y2="662.5" stroke="#6a6a6a" stroke-width="0.9"/><text x="676.5" y="661.6" font-size="2.6" fill="#666" text-anchor="start" font-weight="normal">EU</text><rect x="743" y="660.6" width="5" height="3.2" rx="1.2" fill="none" stroke="#8a8a9a" stroke-width="0.5"/><rect x="749" y="659.6" width="18.900000000000002" height="4.6" fill="none" stroke="#6a6ad8" stroke-width="0.45" stroke-dasharray="0.8 0.6"/><text x="749.5" y="663.5" font-size="3.6" fill="#3434b4" text-anchor="start" font-weight="normal">9LHTW93KT</text><polyline points="706.25,662.2 707.50,663.4000000000001 708.75,661.0 710.00,663.4000000000001 711.25,661.0 712.50,663.4000000000001 713.75,661.0 715.00,663.4000000000001 716.25,661.0" fill="none" stroke="#555" stroke-width="0.55"/><text x="700.25" y="660.4000000000001" font-size="2.4" fill="#777" text-anchor="start" font-weight="normal">9N9M</text><text x="713.25" y="660.4000000000001" font-size="2.4" fill="#777" text-anchor="start" font-weight="normal">3LDG_</text><text x="674.0" y="663.2" font-size="2.9" fill="#707070" text-anchor="end" font-weight="normal">C3AAUAU2GABML8S</text><line x1="675.5" y1="673.5" x2="682.5" y2="673.5" stroke="#6a6a6a" stroke-width="0.9"/><text x="676.5" y="672.4" font-size="2.6" fill="#666" text-anchor="start" font-weight="normal">9J</text><text x="674.0" y="674.0" font-size="2.9" fill="#707070" text-anchor="end" font-weight="normal">M3HJK9GBGEK864D</text><line x1="675.5" y1="678.5" x2="682.5" y2="678.5" stroke="#6a6a6a" stroke-width="0.9"/><text x="676.5" y="678.1999999999999" font-size="2.6" fill="#666" text-anchor="start" font-weight="normal">AV</text><text x="674.0" y="679.8" font-size="2.9" fill="#707070" text-anchor="end" font-weight="normal">JP_SKCSGE_M51BD</text><line x1="675.5" y1="684.5" x2="682.5" y2="684.5" stroke="#6a6a6a" stroke-width="0.9"/><text x="676.5" y="684.0" font-size="2.6" fill="#666" text-anchor="start" font-weight="normal">O2</text><text x="674.0" y="685.6" font-size="2.9" fill="#707070" text-anchor="end" font-weight="normal">C5DPPOCKLVA6U3R</text><line x1="675.5" y1="690.5" x2="682.5" y2="690.5" stroke="#6a6a6a" stroke-width="0.9"/><text x="676.5" y="689.6999999999999" font-size="2.6" fill="#666" text-anchor="start" font-weight="normal">8E</text><text x="674.0" y="691.3" font-size="2.9" fill="#707070" text-anchor="end" font-weight="normal">P1O3U28BPFLK_1L</text><line x1="675.5" y1="701.5" x2="682.5" y2="701.5" stroke="#6a6a6a" stroke-width="0.9"/><text x="676.5" y="701.1999999999999" font-size="2.6" fill="#666" text-anchor="start" font-weight="normal">AT</text><text x="674.0" y="702.8" font-size="2.9" fill="#707070" text-anchor="end" font-weight="normal">20HW1W2EH4_P1M6</text><line x1="675.5" y1="707.5" x2="682.5" y2="707.5" stroke="#6a6a6a" stroke-width="0.9"/><text x="676.5" y="707.0" font-size="2.6" fill="#666" text-anchor="start" font-weight="normal">T_</text><text x="674.0" y="708.6" font-size="2.9" fill="#707070" text-anchor="end" font-weight="normal">P4CSBWJPIFMSI56</text><text x="546.5" y="242.6" font-size="3.2" fill="#555" text-anchor="start" font-weight="normal">L</text><text x="546.5" y="248.6" font-size="3.2" fill="#555" text-anchor="start" font-weight="normal">L</text><text x="546.5" y="254.2" font-size="3.2" fill="#555" text-anchor="start" font-weight="normal">B</text><text x="546.5" y="503.5" font-size="3.2" fill="#555" text-anchor="start" font-weight="normal">B</text><text x="546.5" y="509.3" font-size="3.2" fill="#555" text-anchor="start" font-weight="normal">L</text><text x="546.5" y="543.8000000000001" font-size="3.2" fill="#555" text-anchor="start" font-weight="normal">B</text><text x="546.5" y="549.6" font-size="3.2" fill="#555" text-anchor="start" font-weight="normal">B</text><text x="546.5" y="561.5" font-size="3.2" fill="#555" text-anchor="start" font-weight="normal">L</text><text x="546.5" y="567.0" font-size="3.2" fill="#555" text-anchor="start" font-weight="normal">B</text><text x="546.5" y="584.1" font-size="3.2" fill="#555" text-anchor="start" font-weight="normal">B</text><text x="546.5" y="589.8000000000001" font-size="3.2" fill="#555" text-anchor="start" font-weight="normal">L</text><text x="546.5" y="607.8000000000001" font-size="3.2" fill="#555" text-anchor="start" font-weight="normal">L</text><text x="546.5" y="613.3000000000001" font-size="3.2" fill="#555" text-anchor="start" font-weight="normal">B</text><text x="546.5" y="630.1" font-size="3.2" fill="#555" text-anchor="start" font-weight="normal">L</text><text x="546.5" y="635.8000000000001" font-size="3.2" fill="#555" text-anchor="start" font-weight="normal">B</text><text x="546.5" y="641.6" font-size="3.2" fill="#555" text-anchor="start" font-weight="normal">B</text><text x="546.5" y="647.3000000000001" font-size="3.2" fill="#555" text-anchor="start" font-weight="normal">B</text><text x="546.5" y="653.1" font-size="3.2" fill="#555" text-anchor="start" font-weight="normal">L</text><text x="546.5" y="704.9" font-size="3.2" fill="#555" text-anchor="start" font-weight="normal">B</text><text x="683.5" y="239.7" font-size="3.2" fill="#555" text-anchor="start" font-weight="normal">B</text><text x="683.5" y="245.5" font-size="3.2" fill="#555" text-anchor="start" font-weight="normal">B</text><text x="683.5" y="251.5" font-size="3.2" fill="#555" text-anchor="start" font-weight="normal">L</text><text x="683.5" y="259.40000000000003" font-size="3.2" fill="#555" text-anchor="start" font-weight="normal">L</text><text x="683.5" y="265.40000000000003" font-size="3.2" fill="#555" text-anchor="start" font-weight="normal">L</text><text x="683.5" y="271.20000000000005" font-size="3.2" fill="#555" text-anchor="start" font-weight="normal">B</text><text x="683.5" y="282.8" font-size="3.2" fill="#555" text-anchor="start" font-weight="normal">B</text><text x="683.5" y="288.40000000000003" font-size="3.2" fill="#555" text-anchor="start" font-weight="normal">L</text><text x="683.5" y="294.0" font-size="3.2" fill="#555" text-anchor="start" font-weight="normal">B</text><text x="683.5" y="299.6" font-size="3.2" fill="#555" text-anchor="start" font-weight="normal">L</text><text x="683.5" y="311.40000000000003" font-size="3.2" fill="#555" text-anchor="start" font-weight="normal">B</text><text x="683.5" y="317.0" font-size="3.2" fill="#555" text-anchor="start" font-weight="normal">L</text><text x="683.5" y="323.1" font-size="3.2" fill="#555" text-anchor="start" font-weight="normal">L</text><text x="683.5" y="329.1" font-size="3.2" fill="#555" text-anchor="start" font-weight="normal">B</text><text x="683.5" y="340.3" font-size="3.2" fill="#555" text-anchor="start" font-weight="normal">B</text><text x="683.5" y="345.90000000000003" font-size="3.2" fill="#555" text-anchor="start" font-weight="normal">B</text><text x="683.5" y="351.5" font-size="3.2" fill="#555" text-anchor="start" font-weight="normal">L</text><text x="683.5" y="357.5" font-size="3.2" fill="#555" text-anchor="start" font-weight="normal">L</text><text x="683.5" y="363.3" font-size="3.2" fill="#555" text-anchor="start" font-weight="normal">L</text><text x="683.5" y="368.90000000000003" font-size="3.2" fill="#555" text-anchor="start" font-weight="normal">L</text><text x="683.5" y="420.6" font-size="3.2" fill="#555" text-anchor="start" font-weight="normal">B</text><text x="683.5" y="426.0" font-size="3.2" fill="#555" text-anchor="start" font-weight="normal">L</text><text x="683.5" y="431.70000000000005" font-size="3.2" fill="#555" text-anchor="start" font-weight="normal">B</text><text x="683.5" y="437.90000000000003" font-size="3.2" fill="#555" text-anchor="start" font-weight="normal">L</text><text x="683.5" y="443.70000000000005" font-size="3.2" fill="#555" text-anchor="start" font-weight="normal">L</text><text x="683.5" y="449.40000000000003" font-size="3.2" fill="#555" text-anchor="start" font-weight="normal">L</text><text x="683.5" y="460.90000000000003" font-size="3.2" fill="#555" text-anchor="start" font-weight="normal">L</text><text x="683.5" y="466.70000000000005" font-size="3.2" fill="#555" text-anchor="start" font-weight="normal">B</text><text x="683.5" y="472.5" font-size="3.2" fill="#555" text-anchor="start" font-weight="normal">L</text><text x="683.5" y="484.0" font-size="3.2" fill="#555" text-anchor="start" font-weight="normal">L</text><text x="683.5" y="489.3" font-size="3.2" fill="#555" text-anchor="start" font-weight="normal">B</text><text x="683.5" y="495.0" font-size="3.2" fill="#555" text-anchor="start" font-weight="normal">L</text><text x="683.5" y="507.0" font-size="3.2" fill="#555" text-anchor="start" font-weight="normal">B</text><text x="683.5" y="512.7" font-size="3.2" fill="#555" text-anchor="start" font-weight="normal">L</text><text x="683.5" y="518.5" font-size="3.2" fill="#555" text-anchor="start" font-weight="normal">L</text><text x="683.5" y="530.0" font-size="3.2" fill="#555" text-anchor="start" font-weight="normal">L</text><text x="683.5" y="535.3000000000001" font-size="3.2" fill="#555" text-anchor="start" font-weight="normal">B</text><text x="683.5" y="541.0" font-size="3.2" fill="#555" text-anchor="start" font-weight="normal">L</text><text x="683.5" y="581.3000000000001" font-size="3.2" fill="#555" text-anchor="start" font-weight="normal">L</text><text x="683.5" y="587.1" font-size="3.2" fill="#555" text-anchor="start" font-weight="normal">L</text><text x="683.5" y="592.8000000000001" font-size="3.2" fill="#555" text-anchor="start" font-weight="normal">L</text><text x="683.5" y="598.6" font-size="3.2" fill="#555" text-anchor="start" font-weight="normal">L</text><text x="683.5" y="610.1" font-size="3.2" fill="#555" text-anchor="start" font-weight="normal">B</text><text x="683.5" y="615.8000000000001" font-size="3.2" fill="#555" text-anchor="start" font-weight="normal">L</text><text x="683.5" y="621.6" font-size="3.2" fill="#555" text-anchor="start" font-weight="normal">L</text><text x="683.5" y="627.3000000000001" font-size="3.2" fill="#555" text-anchor="start" font-weight="normal">L</text><text x="683.5" y="638.8000000000001" font-size="3.2" fill="#555" text-anchor="start" font-weight="normal">L</text><text x="683.5" y="644.6" font-size="3.2" fill="#555" text-anchor="start" font-weight="normal">L</text><text x="683.5" y="656.1" font-size="3.2" fill="#555" text-anchor="start" font-weight="normal">B</text><text x="683.5" y="661.8000000000001" font-size="3.2" fill="#555" text-anchor="start" font-weight="normal">B</text><rect x="560.5" y="226.5" width="115.0" height="492.0" fill="none" stroke="#606060" stroke-width="0.9"/><line x1="617.5" y1="231.5" x2="617.5" y2="711" stroke="#606060" stroke-width="0.9"/><line x1="560.5" y1="231.5" x2="675.5" y2="231.5" stroke="#606060" stroke-width="0.9"/><line x1="560.5" y1="711.5" x2="675.5" y2="711.5" stroke="#333" stroke-width="1.0"/><text x="618.0" y="230.7" font-size="4.6" fill="#333" text-anchor="middle" font-weight="normal">DIGITAL</text><text x="673.5" y="230.7" font-size="3" fill="#444" text-anchor="end" font-weight="normal">1 of 8</text><rect x="560.5" y="231.5" width="57.0" height="6.0" fill="none" stroke="#555" stroke-width="0.9"/><text x="589.0" y="236.3" font-size="4.8" fill="#444" text-anchor="middle">RF SPI 0 (VIO1V8)</text><rect x="560.5" y="260.5" width="57.0" height="6.0" fill="none" stroke="#555" stroke-width="0.9"/><text x="589.0" y="265.3" font-size="4.8" fill="#444" text-anchor="middle">RF SPI 1 (NC)</text><rect x="560.5" y="289.5" width="57.0" height="6.0" fill="none" stroke="#555" stroke-width="0.9"/><text x="589.0" y="294.0" font-size="4.8" fill="#444" text-anchor="middle">RF CTRL (VIO1V8)</text><rect x="560.5" y="297.5" width="54.0" height="6.0" fill="none" stroke="#555" stroke-width="0.9"/><text x="587.5" y="302.1" font-size="4.8" fill="#444" text-anchor="middle" textLength="50.0" lengthAdjust="spacingAndGlyphs">FOR LTE/WCDMA/TD/GSM</text><rect x="560.5" y="372.5" width="54.0" height="6.0" fill="none" stroke="#555" stroke-width="0.9"/><text x="587.5" y="377.1" font-size="4.8" fill="#444" text-anchor="middle">FOR LTE</text><rect x="560.5" y="415.5" width="57.0" height="6.0" fill="none" stroke="#555" stroke-width="0.9"/><text x="589.0" y="420.1" font-size="4.8" fill="#444" text-anchor="middle">GPIO (VIO1V8)</text><rect x="560.5" y="453.5" width="57.0" height="6.0" fill="none" stroke="#555" stroke-width="0.9"/><text x="589.0" y="457.8" font-size="4.8" fill="#444" text-anchor="middle">RFFE (VIO1V8)</text><rect x="560.5" y="493.5" width="57.0" height="6.0" fill="none" stroke="#555" stroke-width="0.9"/><text x="589.0" y="497.8" font-size="4.8" fill="#444" text-anchor="middle">EC (VIO1V8)</text><rect x="560.5" y="533.5" width="57.0" height="5.0" fill="none" stroke="#555" stroke-width="0.9"/><text x="589.0" y="537.5" font-size="4.8" fill="#444" text-anchor="middle">CTP/EXTINT (VIO1V8)</text><rect x="560.5" y="573.5" width="57.0" height="6.0" fill="none" stroke="#555" stroke-width="0.9"/><text x="589.0" y="578.0999999999999" font-size="4.8" fill="#444" text-anchor="middle">EXTINT (VIO1V8)</text><rect x="560.5" y="597.5" width="57.0" height="5.0" fill="none" stroke="#555" stroke-width="0.9"/><text x="589.0" y="600.8" font-size="4.8" fill="#444" text-anchor="middle">ARM JTAG (VIO1V8)</text><rect x="560.5" y="619.5" width="57.0" height="6.0" fill="none" stroke="#555" stroke-width="0.9"/><text x="589.0" y="623.8" font-size="4.8" fill="#444" text-anchor="middle">DSP JTAG (VIO1V8)</text><rect x="560.5" y="659.5" width="57.0" height="6.0" fill="none" stroke="#555" stroke-width="0.9"/><text x="589.0" y="664.1999999999999" font-size="4.8" fill="#444" text-anchor="middle">MEMS (NC)</text><rect x="560.5" y="693.5" width="57.0" height="6.0" fill="none" stroke="#555" stroke-width="0.9"/><text x="589.0" y="698.6999999999999" font-size="4.8" fill="#444" text-anchor="middle">SYSTEM (VIO1V8)</text><rect x="617.5" y="231.5" width="58.0" height="6.0" fill="none" stroke="#555" stroke-width="0.9"/><text x="646.5" y="236.3" font-size="4.8" fill="#444" text-anchor="middle">KEYPAD (VIO1V8)</text><rect x="617.5" y="275.5" width="58.0" height="5.0" fill="none" stroke="#555" stroke-width="0.9"/><text x="646.5" y="279.3" font-size="4.8" fill="#444" text-anchor="middle">SPI 0 (VIO1V8)</text><rect x="617.5" y="304.5" width="58.0" height="5.0" fill="none" stroke="#555" stroke-width="0.9"/><text x="646.5" y="308.3" font-size="4.8" fill="#444" text-anchor="middle">SPI 2 (VIO1V8)</text><rect x="617.5" y="332.5" width="58.0" height="6.0" fill="none" stroke="#555" stroke-width="0.9"/><text x="646.5" y="336.8" font-size="4.8" fill="#444" text-anchor="middle">SDIO 0 (VSDIO)</text><rect x="617.5" y="372.5" width="58.0" height="6.0" fill="none" stroke="#555" stroke-width="0.9"/><text x="646.5" y="377.1" font-size="4.8" fill="#444" text-anchor="middle">SDIO 1 (NC)</text><rect x="617.5" y="413.5" width="58.0" height="5.0" fill="none" stroke="#555" stroke-width="0.9"/><text x="646.5" y="417.3" font-size="4.8" fill="#444" text-anchor="middle">SDIO 2 (VSDIO2)</text><rect x="617.5" y="453.5" width="58.0" height="6.0" fill="none" stroke="#555" stroke-width="0.9"/><text x="646.5" y="457.8" font-size="4.8" fill="#444" text-anchor="middle">SIM 0 (VSIM0)</text><rect x="617.5" y="476.5" width="58.0" height="6.0" fill="none" stroke="#555" stroke-width="0.9"/><text x="646.5" y="480.8" font-size="4.8" fill="#444" text-anchor="middle">USB0 (NC)</text><rect x="617.5" y="499.5" width="58.0" height="5.0" fill="none" stroke="#555" stroke-width="0.9"/><text x="646.5" y="503.5" font-size="4.8" fill="#444" text-anchor="middle">SIM 1 (VSIM1)</text><rect x="617.5" y="522.5" width="58.0" height="6.0" fill="none" stroke="#555" stroke-width="0.9"/><text x="646.5" y="526.8" font-size="4.8" fill="#444" text-anchor="middle">SIM 2 (VSIM2)</text><rect x="617.5" y="544.5" width="58.0" height="6.0" fill="none" stroke="#555" stroke-width="0.9"/><text x="646.5" y="549.1999999999999" font-size="4.8" fill="#444" text-anchor="middle">EB 0 (NC)</text><rect x="617.5" y="573.5" width="58.0" height="6.0" fill="none" stroke="#555" stroke-width="0.9"/><text x="646.5" y="578.0999999999999" font-size="4.8" fill="#444" text-anchor="middle">EB 1 (VIO1V8)</text><rect x="617.5" y="602.5" width="58.0" height="5.0" fill="none" stroke="#555" stroke-width="0.9"/><text x="646.5" y="606.5" font-size="4.8" fill="#444" text-anchor="middle">UART0 (VIO1V8)</text><rect x="617.5" y="631.5" width="58.0" height="5.0" fill="none" stroke="#555" stroke-width="0.9"/><text x="646.5" y="635.3" font-size="4.8" fill="#444" text-anchor="middle">UART 1 (VIO1V8)</text><rect x="617.5" y="648.5" width="58.0" height="6.0" fill="none" stroke="#555" stroke-width="0.9"/><text x="646.5" y="653.0" font-size="4.8" fill="#444" text-anchor="middle">UART 2 (VIO1V8)</text><rect x="617.5" y="666.5" width="58.0" height="5.0" fill="none" stroke="#555" stroke-width="0.9"/><text x="646.5" y="670.3" font-size="4.8" fill="#444" text-anchor="middle">UART 4 (NC)</text><rect x="617.5" y="693.5" width="58.0" height="6.0" fill="none" stroke="#555" stroke-width="0.9"/><text x="646.5" y="698.1999999999999" font-size="4.8" fill="#444" text-anchor="middle">UART 5 (NC)</text><line x1="712" y1="334.5" x2="738" y2="334.5" stroke="#777" stroke-width="0.9"/><line x1="727.5" y1="334.5" x2="727.5" y2="340.7" stroke="#555" stroke-width="0.9"/><text x="708" y="333" font-size="2.4" fill="#777" text-anchor="start" font-weight="normal">VIO1V8</text><text x="726" y="333" font-size="2.4" fill="#777" text-anchor="start" font-weight="normal">100nF</text><text x="770" y="241.1" font-size="2.4" fill="#999" text-anchor="start" font-weight="normal">12</text><text x="770" y="246.9" font-size="2.4" fill="#999" text-anchor="start" font-weight="normal">12</text><text x="770" y="252.9" font-size="2.4" fill="#999" text-anchor="start" font-weight="normal">12</text><text x="770" y="260.8" font-size="2.4" fill="#999" text-anchor="start" font-weight="normal">12</text><text x="770" y="266.8" font-size="2.4" fill="#999" text-anchor="start" font-weight="normal">12</text><text x="770" y="272.6" font-size="2.4" fill="#999" text-anchor="start" font-weight="normal">12</text><text x="770" y="312.8" font-size="2.4" fill="#999" text-anchor="start" font-weight="normal">12</text><text x="770" y="318.4" font-size="2.4" fill="#999" text-anchor="start" font-weight="normal">12</text><text x="770" y="324.5" font-size="2.4" fill="#999" text-anchor="start" font-weight="normal">12</text><text x="770" y="330.5" font-size="2.4" fill="#999" text-anchor="start" font-weight="normal">12</text><rect x="1036.5" y="309.3" width="115.0" height="425.2" fill="#fff"/><text x="1094.0" y="302.3" font-size="2.2" fill="#777" text-anchor="middle" font-weight="normal">PMU1</text><text x="1094.0" y="305.8" font-size="2.2" fill="#777" text-anchor="middle" font-weight="normal">ISLB0_3B6P2_</text><line x1="986" y1="323.5" x2="1036.5" y2="323.5" stroke="#6a6a6a" stroke-width="0.9"/><text x="1035.5" y="322.4" font-size="2.6" fill="#666" text-anchor="end" font-weight="normal">GL</text><rect x="980.5" y="321.4" width="5" height="3.2" rx="1.2" fill="none" stroke="#8a8a9a" stroke-width="0.5"/><rect x="962.2" y="320.4" width="16.8" height="4.6" fill="none" stroke="#6a6ad8" stroke-width="0.45" stroke-dasharray="0.8 0.6"/><text x="978.5" y="324.3" font-size="3.6" fill="#3434b4" text-anchor="end" font-weight="normal">THSOC2CK</text><text x="1038.0" y="324.0" font-size="2.9" fill="#707070" text-anchor="start" font-weight="normal">4MUJ1CULO8R</text><line x1="986" y1="329.5" x2="1036.5" y2="329.5" stroke="#6a6a6a" stroke-width="0.9"/><text x="1035.5" y="328.4" font-size="2.6" fill="#666" text-anchor="end" font-weight="normal">4_</text><rect x="980.5" y="327.4" width="5" height="3.2" rx="1.2" fill="none" stroke="#8a8a9a" stroke-width="0.5"/><rect x="962.2" y="326.4" width="16.8" height="4.6" fill="none" stroke="#6a6ad8" stroke-width="0.45" stroke-dasharray="0.8 0.6"/><text x="978.5" y="330.3" font-size="3.6" fill="#3434b4" text-anchor="end" font-weight="normal">AHTCDPHC</text><text x="1038.0" y="330.0" font-size="2.9" fill="#707070" text-anchor="start" font-weight="normal">VN_F32OSF_4</text><line x1="986" y1="337.5" x2="1036.5" y2="337.5" stroke="#6a6a6a" stroke-width="0.9"/><text x="1035.5" y="337.29999999999995" font-size="2.6" fill="#666" text-anchor="end" font-weight="normal">5W</text><rect x="980.5" y="336.29999999999995" width="5" height="3.2" rx="1.2" fill="none" stroke="#8a8a9a" stroke-width="0.5"/><rect x="962.2" y="335.29999999999995" width="16.8" height="4.6" fill="none" stroke="#6a6ad8" stroke-width="0.45" stroke-dasharray="0.8 0.6"/><text x="978.5" y="339.2" font-size="3.6" fill="#3434b4" text-anchor="end" font-weight="normal">959DN49I</text><text x="1038.0" y="338.9" font-size="2.9" fill="#707070" text-anchor="start" font-weight="normal">8MCRLKPRPDK</text><line x1="986" y1="343.5" x2="1036.5" y2="343.5" stroke="#6a6a6a" stroke-width="0.9"/><text x="1035.5" y="342.9" font-size="2.6" fill="#666" text-anchor="end" font-weight="normal">__</text><rect x="980.5" y="341.9" width="5" height="3.2" rx="1.2" fill="none" stroke="#8a8a9a" stroke-width="0.5"/><rect x="962.2" y="340.9" width="16.8" height="4.6" fill="none" stroke="#6a6ad8" stroke-width="0.45" stroke-dasharray="0.8 0.6"/><text x="978.5" y="344.8" font-size="3.6" fill="#3434b4" text-anchor="end" font-weight="normal">3FMUII87</text><text x="1038.0" y="344.5" font-size="2.9" fill="#707070" text-anchor="start" font-weight="normal">PPA95I_UIJP</text><line x1="986" y1="349.5" x2="1036.5" y2="349.5" stroke="#6a6a6a" stroke-width="0.9"/><text x="1035.5" y="348.5" font-size="2.6" fill="#666" text-anchor="end" font-weight="normal">WH</text><rect x="980.5" y="347.5" width="5" height="3.2" rx="1.2" fill="none" stroke="#8a8a9a" stroke-width="0.5"/><rect x="962.2" y="346.5" width="16.8" height="4.6" fill="none" stroke="#6a6ad8" stroke-width="0.45" stroke-dasharray="0.8 0.6"/><text x="978.5" y="350.40000000000003" font-size="3.6" fill="#3434b4" text-anchor="end" font-weight="normal">4KJ62NHT</text><text x="1038.0" y="350.1" font-size="2.9" fill="#707070" text-anchor="start" font-weight="normal">A08NCDSUMHU</text><line x1="986" y1="355.5" x2="1036.5" y2="355.5" stroke="#6a6a6a" stroke-width="0.9"/><text x="1035.5" y="354.4" font-size="2.6" fill="#666" text-anchor="end" font-weight="normal">5H</text><rect x="980.5" y="353.4" width="5" height="3.2" rx="1.2" fill="none" stroke="#8a8a9a" stroke-width="0.5"/><rect x="962.2" y="352.4" width="16.8" height="4.6" fill="none" stroke="#6a6ad8" stroke-width="0.45" stroke-dasharray="0.8 0.6"/><text x="978.5" y="356.3" font-size="3.6" fill="#3434b4" text-anchor="end" font-weight="normal">KV560TKE</text><text x="1038.0" y="356.0" font-size="2.9" fill="#707070" text-anchor="start" font-weight="normal">CA68FWRG848</text><line x1="986" y1="360.5" x2="1036.5" y2="360.5" stroke="#6a6a6a" stroke-width="0.9"/><text x="1035.5" y="360.0" font-size="2.6" fill="#666" text-anchor="end" font-weight="normal">MV</text><rect x="980.5" y="359.0" width="5" height="3.2" rx="1.2" fill="none" stroke="#8a8a9a" stroke-width="0.5"/><rect x="964.3" y="358.0" width="14.700000000000001" height="4.6" fill="none" stroke="#6a6ad8" stroke-width="0.45" stroke-dasharray="0.8 0.6"/><text x="978.5" y="361.90000000000003" font-size="3.6" fill="#3434b4" text-anchor="end" font-weight="normal">A_FTRPF</text><polyline points="1007.25,360.6 1008.50,361.8 1009.75,359.40000000000003 1011.00,361.8 1012.25,359.40000000000003 1013.50,361.8 1014.75,359.40000000000003 1016.00,361.8 1017.25,359.40000000000003" fill="none" stroke="#555" stroke-width="0.55"/><text x="1001.25" y="358.8" font-size="2.4" fill="#777" text-anchor="start" font-weight="normal">IBB2</text><text x="1014.25" y="358.8" font-size="2.4" fill="#777" text-anchor="start" font-weight="normal">JT0LK</text><text x="1038.0" y="361.6" font-size="2.9" fill="#707070" text-anchor="start" font-weight="normal">GUV1L_VO0I0</text><line x1="986" y1="366.5" x2="1036.5" y2="366.5" stroke="#6a6a6a" stroke-width="0.9"/><text x="1035.5" y="365.59999999999997" font-size="2.6" fill="#666" text-anchor="end" font-weight="normal">RP</text><rect x="980.5" y="364.59999999999997" width="5" height="3.2" rx="1.2" fill="none" stroke="#8a8a9a" stroke-width="0.5"/><rect x="964.3" y="363.59999999999997" width="14.700000000000001" height="4.6" fill="none" stroke="#6a6ad8" stroke-width="0.45" stroke-dasharray="0.8 0.6"/><text x="978.5" y="367.5" font-size="3.6" fill="#3434b4" text-anchor="end" font-weight="normal">DCG2DN8</text><polyline points="1007.25,366.2 1008.50,367.4 1009.75,365.0 1011.00,367.4 1012.25,365.0 1013.50,367.4 1014.75,365.0 1016.00,367.4 1017.25,365.0" fill="none" stroke="#555" stroke-width="0.55"/><text x="1001.25" y="364.4" font-size="2.4" fill="#777" text-anchor="start" font-weight="normal">48KU</text><text x="1014.25" y="364.4" font-size="2.4" fill="#777" text-anchor="start" font-weight="normal">FJOKI</text><text x="1038.0" y="367.2" font-size="2.9" fill="#707070" text-anchor="start" font-weight="normal">52FC57MN0AC</text><line x1="986" y1="375.5" x2="1036.5" y2="375.5" stroke="#6a6a6a" stroke-width="0.9"/><text x="1035.5" y="374.4" font-size="2.6" fill="#666" text-anchor="end" font-weight="normal">94</text><rect x="980.5" y="373.4" width="5" height="3.2" rx="1.2" fill="none" stroke="#8a8a9a" stroke-width="0.5"/><rect x="960.1" y="372.4" width="18.900000000000002" height="4.6" fill="none" stroke="#6a6ad8" stroke-width="0.45" stroke-dasharray="0.8 0.6"/><text x="978.5" y="376.3" font-size="3.6" fill="#3434b4" text-anchor="end" font-weight="normal">JTED93WE5</text><text x="1038.0" y="376.0" font-size="2.9" fill="#707070" text-anchor="start" font-weight="normal">ALK1TA5_M7F</text><line x1="986" y1="380.5" x2="1036.5" y2="380.5" stroke="#6a6a6a" stroke-width="0.9"/><text x="1035.5" y="380.0" font-size="2.6" fill="#666" text-anchor="end" font-weight="normal">V6</text><rect x="980.5" y="379.0" width="5" height="3.2" rx="1.2" fill="none" stroke="#8a8a9a" stroke-width="0.5"/><rect x="960.1" y="378.0" width="18.900000000000002" height="4.6" fill="none" stroke="#6a6ad8" stroke-width="0.45" stroke-dasharray="0.8 0.6"/><text x="978.5" y="381.90000000000003" font-size="3.6" fill="#3434b4" text-anchor="end" font-weight="normal">4J2FDWU30</text><text x="1038.0" y="381.6" font-size="2.9" fill="#707070" text-anchor="start" font-weight="normal">7IUWBMO5FJ0</text><line x1="1029.5" y1="386.5" x2="1036.5" y2="386.5" stroke="#6a6a6a" stroke-width="0.9"/><text x="1035.5" y="386.0" font-size="2.6" fill="#666" text-anchor="end" font-weight="normal">30</text><text x="1038.0" y="387.6" font-size="2.9" fill="#707070" text-anchor="start" font-weight="normal">P52RHOLMHOR</text><line x1="986" y1="392.5" x2="1036.5" y2="392.5" stroke="#6a6a6a" stroke-width="0.9"/><text x="1035.5" y="392.0" font-size="2.6" fill="#666" text-anchor="end" font-weight="normal">GM</text><rect x="980.5" y="391.0" width="5" height="3.2" rx="1.2" fill="none" stroke="#8a8a9a" stroke-width="0.5"/><rect x="962.2" y="390.0" width="16.8" height="4.6" fill="none" stroke="#6a6ad8" stroke-width="0.45" stroke-dasharray="0.8 0.6"/><text x="978.5" y="393.90000000000003" font-size="3.6" fill="#3434b4" text-anchor="end" font-weight="normal">R8O6OH9F</text><text x="1038.0" y="393.6" font-size="2.9" fill="#707070" text-anchor="start" font-weight="normal">3E5I99H9G62</text><line x1="986" y1="398.5" x2="1036.5" y2="398.5" stroke="#6a6a6a" stroke-width="0.9"/><text x="1035.5" y="397.59999999999997" font-size="2.6" fill="#666" text-anchor="end" font-weight="normal">KM</text><rect x="980.5" y="396.59999999999997" width="5" height="3.2" rx="1.2" fill="none" stroke="#8a8a9a" stroke-width="0.5"/><rect x="962.2" y="395.59999999999997" width="16.8" height="4.6" fill="none" stroke="#6a6ad8" stroke-width="0.45" stroke-dasharray="0.8 0.6"/><text x="978.5" y="399.5" font-size="3.6" fill="#3434b4" text-anchor="end" font-weight="normal">7FI0D2PD</text><text x="1038.0" y="399.2" font-size="2.9" fill="#707070" text-anchor="start" font-weight="normal">0CAN6UHI4FM</text><line x1="986" y1="404.5" x2="1036.5" y2="404.5" stroke="#6a6a6a" stroke-width="0.9"/><text x="1035.5" y="403.4" font-size="2.6" fill="#666" text-anchor="end" font-weight="normal">H_</text><rect x="980.5" y="402.4" width="5" height="3.2" rx="1.2" fill="none" stroke="#8a8a9a" stroke-width="0.5"/><rect x="962.2" y="401.4" width="16.8" height="4.6" fill="none" stroke="#6a6ad8" stroke-width="0.45" stroke-dasharray="0.8 0.6"/><text x="978.5" y="405.3" font-size="3.6" fill="#3434b4" text-anchor="end" font-weight="normal">K0WARHP0</text><text x="1038.0" y="405.0" font-size="2.9" fill="#707070" text-anchor="start" font-weight="normal">9_8C_G_VHCP</text><line x1="986" y1="409.5" x2="1036.5" y2="409.5" stroke="#6a6a6a" stroke-width="0.9"/><text x="1035.5" y="409.09999999999997" font-size="2.6" fill="#666" text-anchor="end" font-weight="normal">R_</text><rect x="980.5" y="408.09999999999997" width="5" height="3.2" rx="1.2" fill="none" stroke="#8a8a9a" stroke-width="0.5"/><rect x="962.2" y="407.09999999999997" width="16.8" height="4.6" fill="none" stroke="#6a6ad8" stroke-width="0.45" stroke-dasharray="0.8 0.6"/><text x="978.5" y="411.0" font-size="3.6" fill="#3434b4" text-anchor="end" font-weight="normal">M5B5HB8H</text><text x="1038.0" y="410.7" font-size="2.9" fill="#707070" text-anchor="start" font-weight="normal">ERLJT1JRS5A</text><line x1="989" y1="424.5" x2="1036.5" y2="424.5" stroke="#6a6a6a" stroke-width="0.9"/><text x="1035.5" y="423.7" font-size="2.6" fill="#666" text-anchor="end" font-weight="normal">BW</text><rect x="983.5" y="422.7" width="5" height="3.2" rx="1.2" fill="none" stroke="#8a8a9a" stroke-width="0.5"/><rect x="965.2" y="421.7" width="16.8" height="4.6" fill="none" stroke="#6a6ad8" stroke-width="0.45" stroke-dasharray="0.8 0.6"/><text x="981.5" y="425.6" font-size="3.6" fill="#3434b4" text-anchor="end" font-weight="normal">J897CCEL</text><text x="1038.0" y="425.3" font-size="2.9" fill="#707070" text-anchor="start" font-weight="normal">27K52OE0WNU</text><line x1="988" y1="438.5" x2="1036.5" y2="438.5" stroke="#6a6a6a" stroke-width="0.9"/><text x="1035.5" y="437.79999999999995" font-size="2.6" fill="#666" text-anchor="end" font-weight="normal">IC</text><rect x="982.5" y="436.79999999999995" width="5" height="3.2" rx="1.2" fill="none" stroke="#8a8a9a" stroke-width="0.5"/><rect x="960.0" y="435.79999999999995" width="21.0" height="4.6" fill="none" stroke="#6a6ad8" stroke-width="0.45" stroke-dasharray="0.8 0.6"/><text x="980.5" y="439.7" font-size="3.6" fill="#3434b4" text-anchor="end" font-weight="normal">NK06W61_VA</text><text x="1038.0" y="439.4" font-size="2.9" fill="#707070" text-anchor="start" font-weight="normal">W7WOBP6CJJS</text><line x1="988" y1="444.5" x2="1036.5" y2="444.5" stroke="#6a6a6a" stroke-width="0.9"/><text x="1035.5" y="443.5" font-size="2.6" fill="#666" text-anchor="end" font-weight="normal">1S</text><rect x="982.5" y="442.5" width="5" height="3.2" rx="1.2" fill="none" stroke="#8a8a9a" stroke-width="0.5"/><rect x="960.0" y="441.5" width="21.0" height="4.6" fill="none" stroke="#6a6ad8" stroke-width="0.45" stroke-dasharray="0.8 0.6"/><text x="980.5" y="445.40000000000003" font-size="3.6" fill="#3434b4" text-anchor="end" font-weight="normal">E9R_ICGM4G</text><text x="1038.0" y="445.1" font-size="2.9" fill="#707070" text-anchor="start" font-weight="normal">0TPJEUW09P_</text><line x1="1029.5" y1="452.5" x2="1036.5" y2="452.5" stroke="#6a6a6a" stroke-width="0.9"/><text x="1035.5" y="451.9" font-size="2.6" fill="#666" text-anchor="end" font-weight="normal">2W</text><text x="1038.0" y="453.5" font-size="2.9" fill="#707070" text-anchor="start" font-weight="normal">DWV790PP_JI</text><line x1="1029.5" y1="458.5" x2="1036.5" y2="458.5" stroke="#6a6a6a" stroke-width="0.9"/><text x="1035.5" y="457.79999999999995" font-size="2.6" fill="#666" text-anchor="end" font-weight="normal">NA</text><text x="1038.0" y="459.4" font-size="2.9" fill="#707070" text-anchor="start" font-weight="normal">6252UKEJUUR</text><line x1="989" y1="466.5" x2="1036.5" y2="466.5" stroke="#6a6a6a" stroke-width="0.9"/><text x="1035.5" y="466.2" font-size="2.6" fill="#666" text-anchor="end" font-weight="normal">WE</text><rect x="983.5" y="465.2" width="5" height="3.2" rx="1.2" fill="none" stroke="#8a8a9a" stroke-width="0.5"/><rect x="963.1" y="464.2" width="18.900000000000002" height="4.6" fill="none" stroke="#6a6ad8" stroke-width="0.45" stroke-dasharray="0.8 0.6"/><text x="981.5" y="468.1" font-size="3.6" fill="#3434b4" text-anchor="end" font-weight="normal">MFLU_6_4E</text><text x="1038.0" y="467.8" font-size="2.9" fill="#707070" text-anchor="start" font-weight="normal">8VLSRBKSPBN</text><line x1="989" y1="472.5" x2="1036.5" y2="472.5" stroke="#6a6a6a" stroke-width="0.9"/><text x="1035.5" y="472.09999999999997" font-size="2.6" fill="#666" text-anchor="end" font-weight="normal">D2</text><rect x="983.5" y="471.09999999999997" width="5" height="3.2" rx="1.2" fill="none" stroke="#8a8a9a" stroke-width="0.5"/><rect x="963.1" y="470.09999999999997" width="18.900000000000002" height="4.6" fill="none" stroke="#6a6ad8" stroke-width="0.45" stroke-dasharray="0.8 0.6"/><text x="981.5" y="474.0" font-size="3.6" fill="#3434b4" text-anchor="end" font-weight="normal">5MT9GMPDI</text><text x="1038.0" y="473.7" font-size="2.9" fill="#707070" text-anchor="start" font-weight="normal">DFEWIAMSAVB</text><line x1="1029.5" y1="484.5" x2="1036.5" y2="484.5" stroke="#6a6a6a" stroke-width="0.9"/><text x="1035.5" y="483.4" font-size="2.6" fill="#666" text-anchor="end" font-weight="normal">NV</text><text x="1038.0" y="485.0" font-size="2.9" fill="#707070" text-anchor="start" font-weight="normal">VB82WLD3CFW</text><line x1="1029.5" y1="490.5" x2="1036.5" y2="490.5" stroke="#6a6a6a" stroke-width="0.9"/><text x="1035.5" y="489.4" font-size="2.6" fill="#666" text-anchor="end" font-weight="normal">82</text><text x="1038.0" y="491.0" font-size="2.9" fill="#707070" text-anchor="start" font-weight="normal">R6ABVVD3WKF</text><line x1="1029.5" y1="498.5" x2="1036.5" y2="498.5" stroke="#6a6a6a" stroke-width="0.9"/><text x="1035.5" y="497.79999999999995" font-size="2.6" fill="#666" text-anchor="end" font-weight="normal">BJ</text><text x="1038.0" y="499.4" font-size="2.9" fill="#707070" text-anchor="start" font-weight="normal">NJF_04_JWOR</text><line x1="1029.5" y1="504.5" x2="1036.5" y2="504.5" stroke="#6a6a6a" stroke-width="0.9"/><text x="1035.5" y="503.7" font-size="2.6" fill="#666" text-anchor="end" font-weight="normal">7C</text><text x="1038.0" y="505.3" font-size="2.9" fill="#707070" text-anchor="start" font-weight="normal">U6S0SIRA7G0</text><line x1="1029.5" y1="513.5" x2="1036.5" y2="513.5" stroke="#6a6a6a" stroke-width="0.9"/><text x="1035.5" y="512.5" font-size="2.6" fill="#666" text-anchor="end" font-weight="normal">JO</text><text x="1038.0" y="514.1" font-size="2.9" fill="#707070" text-anchor="start" font-weight="normal">2FBIHD9NLR0</text><line x1="1029.5" y1="518.5" x2="1036.5" y2="518.5" stroke="#6a6a6a" stroke-width="0.9"/><text x="1035.5" y="518.1999999999999" font-size="2.6" fill="#666" text-anchor="end" font-weight="normal">JL</text><text x="1038.0" y="519.8" font-size="2.9" fill="#707070" text-anchor="start" font-weight="normal">KB_P58N_16N</text><line x1="988" y1="530.5" x2="1036.5" y2="530.5" stroke="#6a6a6a" stroke-width="0.9"/><text x="1035.5" y="529.6999999999999" font-size="2.6" fill="#666" text-anchor="end" font-weight="normal">VB</text><rect x="982.5" y="528.6999999999999" width="5" height="3.2" rx="1.2" fill="none" stroke="#8a8a9a" stroke-width="0.5"/><rect x="957.9" y="527.6999999999999" width="23.1" height="4.6" fill="none" stroke="#6a6ad8" stroke-width="0.45" stroke-dasharray="0.8 0.6"/><text x="980.5" y="531.5999999999999" font-size="3.6" fill="#3434b4" text-anchor="end" font-weight="normal">GAE2_DO131O</text><text x="1038.0" y="531.3" font-size="2.9" fill="#707070" text-anchor="start" font-weight="normal">BRBR4PO_NV4</text><line x1="988" y1="535.5" x2="1036.5" y2="535.5" stroke="#6a6a6a" stroke-width="0.9"/><text x="1035.5" y="535.1999999999999" font-size="2.6" fill="#666" text-anchor="end" font-weight="normal">SU</text><rect x="982.5" y="534.1999999999999" width="5" height="3.2" rx="1.2" fill="none" stroke="#8a8a9a" stroke-width="0.5"/><rect x="957.9" y="533.1999999999999" width="23.1" height="4.6" fill="none" stroke="#6a6ad8" stroke-width="0.45" stroke-dasharray="0.8 0.6"/><text x="980.5" y="537.0999999999999" font-size="3.6" fill="#3434b4" text-anchor="end" font-weight="normal">8NK7SIUTFWA</text><text x="1038.0" y="536.8" font-size="2.9" fill="#707070" text-anchor="start" font-weight="normal">8PKV5NDN0C5</text><line x1="1029.5" y1="544.5" x2="1036.5" y2="544.5" stroke="#6a6a6a" stroke-width="0.9"/><text x="1035.5" y="544.0" font-size="2.6" fill="#666" text-anchor="end" font-weight="normal">L4</text><text x="1038.0" y="545.6" font-size="2.9" fill="#707070" text-anchor="start" font-weight="normal">IUBHJAIUJ9_</text><line x1="1029.5" y1="549.5" x2="1036.5" y2="549.5" stroke="#6a6a6a" stroke-width="0.9"/><text x="1035.5" y="549.3" font-size="2.6" fill="#666" text-anchor="end" font-weight="normal">GK</text><text x="1038.0" y="550.9" font-size="2.9" fill="#707070" text-anchor="start" font-weight="normal">62F3W2WCPMA</text><line x1="1029.5" y1="559.5" x2="1036.5" y2="559.5" stroke="#6a6a6a" stroke-width="0.9"/><text x="1035.5" y="558.4" font-size="2.6" fill="#666" text-anchor="end" font-weight="normal">CI</text><text x="1038.0" y="560.0" font-size="2.9" fill="#707070" text-anchor="start" font-weight="normal">9O4GBDVEHH8</text><line x1="1029.5" y1="564.5" x2="1036.5" y2="564.5" stroke="#6a6a6a" stroke-width="0.9"/><text x="1035.5" y="564.0" font-size="2.6" fill="#666" text-anchor="end" font-weight="normal">I4</text><text x="1038.0" y="565.6" font-size="2.9" fill="#707070" text-anchor="start" font-weight="normal">ALOJ9H_8E_N</text><line x1="1029.5" y1="572.5" x2="1036.5" y2="572.5" stroke="#6a6a6a" stroke-width="0.9"/><text x="1035.5" y="572.1999999999999" font-size="2.6" fill="#666" text-anchor="end" font-weight="normal">OE</text><text x="1038.0" y="573.8" font-size="2.9" fill="#707070" text-anchor="start" font-weight="normal">SLARSECM9D3</text><line x1="1029.5" y1="579.5" x2="1036.5" y2="579.5" stroke="#6a6a6a" stroke-width="0.9"/><text x="1035.5" y="578.6" font-size="2.6" fill="#666" text-anchor="end" font-weight="normal">0S</text><text x="1038.0" y="580.2" font-size="2.9" fill="#707070" text-anchor="start" font-weight="normal">AVC6TW3S24V</text><line x1="986" y1="587.5" x2="1036.5" y2="587.5" stroke="#6a6a6a" stroke-width="0.9"/><text x="1035.5" y="586.6999999999999" font-size="2.6" fill="#666" text-anchor="end" font-weight="normal">31</text><rect x="980.5" y="585.6999999999999" width="5" height="3.2" rx="1.2" fill="none" stroke="#8a8a9a" stroke-width="0.5"/><rect x="958.0" y="584.6999999999999" width="21.0" height="4.6" fill="none" stroke="#6a6ad8" stroke-width="0.45" stroke-dasharray="0.8 0.6"/><text x="978.5" y="588.5999999999999" font-size="3.6" fill="#3434b4" text-anchor="end" font-weight="normal">J113JAP9R1</text><text x="1038.0" y="588.3" font-size="2.9" fill="#707070" text-anchor="start" font-weight="normal">PMHFCD2V5V6</text><line x1="986" y1="593.5" x2="1036.5" y2="593.5" stroke="#6a6a6a" stroke-width="0.9"/><text x="1035.5" y="592.4" font-size="2.6" fill="#666" text-anchor="end" font-weight="normal">A7</text><rect x="980.5" y="591.4" width="5" height="3.2" rx="1.2" fill="none" stroke="#8a8a9a" stroke-width="0.5"/><rect x="958.0" y="590.4" width="21.0" height="4.6" fill="none" stroke="#6a6ad8" stroke-width="0.45" stroke-dasharray="0.8 0.6"/><text x="978.5" y="594.3" font-size="3.6" fill="#3434b4" text-anchor="end" font-weight="normal">79W1P1_E2S</text><text x="1038.0" y="594.0" font-size="2.9" fill="#707070" text-anchor="start" font-weight="normal">VEORR7_7OJE</text><line x1="1029.5" y1="604.5" x2="1036.5" y2="604.5" stroke="#6a6a6a" stroke-width="0.9"/><text x="1035.5" y="603.9" font-size="2.6" fill="#666" text-anchor="end" font-weight="normal">0N</text><text x="1038.0" y="605.5" font-size="2.9" fill="#707070" text-anchor="start" font-weight="normal">K0PLJ6LCV10</text><line x1="1029.5" y1="610.5" x2="1036.5" y2="610.5" stroke="#6a6a6a" stroke-width="0.9"/><text x="1035.5" y="609.6999999999999" font-size="2.6" fill="#666" text-anchor="end" font-weight="normal">4H</text><text x="1038.0" y="611.3" font-size="2.9" fill="#707070" text-anchor="start" font-weight="normal">3JR1G0_U5FS</text><line x1="1029.5" y1="618.5" x2="1036.5" y2="618.5" stroke="#6a6a6a" stroke-width="0.9"/><text x="1035.5" y="618.1999999999999" font-size="2.6" fill="#666" text-anchor="end" font-weight="normal">2T</text><text x="1038.0" y="619.8" font-size="2.9" fill="#707070" text-anchor="start" font-weight="normal">5H57LJAI08P</text><line x1="1029.5" y1="624.5" x2="1036.5" y2="624.5" stroke="#6a6a6a" stroke-width="0.9"/><text x="1035.5" y="624.1999999999999" font-size="2.6" fill="#666" text-anchor="end" font-weight="normal">0W</text><text x="1038.0" y="625.8" font-size="2.9" fill="#707070" text-anchor="start" font-weight="normal">1RBMARDLUSV</text><line x1="1029.5" y1="633.5" x2="1036.5" y2="633.5" stroke="#6a6a6a" stroke-width="0.9"/><text x="1035.5" y="632.6999999999999" font-size="2.6" fill="#666" text-anchor="end" font-weight="normal">RP</text><text x="1038.0" y="634.3" font-size="2.9" fill="#707070" text-anchor="start" font-weight="normal">R5F8FMI4T0C</text><line x1="1029.5" y1="639.5" x2="1036.5" y2="639.5" stroke="#6a6a6a" stroke-width="0.9"/><text x="1035.5" y="638.4" font-size="2.6" fill="#666" text-anchor="end" font-weight="normal">51</text><text x="1038.0" y="640.0" font-size="2.9" fill="#707070" text-anchor="start" font-weight="normal">0CT34R_P1IM</text><line x1="946" y1="650.5" x2="1036.5" y2="650.5" stroke="#6a6a6a" stroke-width="0.9"/><text x="1035.5" y="649.9" font-size="2.6" fill="#666" text-anchor="end" font-weight="normal">0E</text><rect x="940.5" y="648.9" width="5" height="3.2" rx="1.2" fill="none" stroke="#8a8a9a" stroke-width="0.5"/><rect x="920.1" y="647.9" width="18.900000000000002" height="4.6" fill="none" stroke="#6a6ad8" stroke-width="0.45" stroke-dasharray="0.8 0.6"/><text x="938.5" y="651.8" font-size="3.6" fill="#3434b4" text-anchor="end" font-weight="normal">NWEF51238</text><polyline points="987.25,650.5 988.50,651.7 989.75,649.3 991.00,651.7 992.25,649.3 993.50,651.7 994.75,649.3 996.00,651.7 997.25,649.3" fill="none" stroke="#555" stroke-width="0.55"/><text x="981.25" y="648.7" font-size="2.4" fill="#777" text-anchor="start" font-weight="normal">BG66</text><text x="994.25" y="648.7" font-size="2.4" fill="#777" text-anchor="start" font-weight="normal">437LE</text><text x="1038.0" y="651.5" font-size="2.9" fill="#707070" text-anchor="start" font-weight="normal">528I9AOM2CT</text><line x1="1029.5" y1="656.5" x2="1036.5" y2="656.5" stroke="#6a6a6a" stroke-width="0.9"/><text x="1035.5" y="655.6999999999999" font-size="2.6" fill="#666" text-anchor="end" font-weight="normal">W1</text><text x="1038.0" y="657.3" font-size="2.9" fill="#707070" text-anchor="start" font-weight="normal">6HFOEAG8FN6</text><line x1="988" y1="665.5" x2="1036.5" y2="665.5" stroke="#6a6a6a" stroke-width="0.9"/><text x="1035.5" y="664.4" font-size="2.6" fill="#666" text-anchor="end" font-weight="normal">DM</text><rect x="982.5" y="663.4" width="5" height="3.2" rx="1.2" fill="none" stroke="#8a8a9a" stroke-width="0.5"/><rect x="964.2" y="662.4" width="16.8" height="4.6" fill="none" stroke="#6a6ad8" stroke-width="0.45" stroke-dasharray="0.8 0.6"/><text x="980.5" y="666.3" font-size="3.6" fill="#3434b4" text-anchor="end" font-weight="normal">W7D3I3DJ</text><text x="1038.0" y="666.0" font-size="2.9" fill="#707070" text-anchor="start" font-weight="normal">VWMALSRFV1R</text><line x1="988" y1="670.5" x2="1036.5" y2="670.5" stroke="#6a6a6a" stroke-width="0.9"/><text x="1035.5" y="670.1999999999999" font-size="2.6" fill="#666" text-anchor="end" font-weight="normal">U2</text><rect x="982.5" y="669.1999999999999" width="5" height="3.2" rx="1.2" fill="none" stroke="#8a8a9a" stroke-width="0.5"/><rect x="964.2" y="668.1999999999999" width="16.8" height="4.6" fill="none" stroke="#6a6ad8" stroke-width="0.45" stroke-dasharray="0.8 0.6"/><text x="980.5" y="672.0999999999999" font-size="3.6" fill="#3434b4" text-anchor="end" font-weight="normal">93DUUP14</text><text x="1038.0" y="671.8" font-size="2.9" fill="#707070" text-anchor="start" font-weight="normal">RUMIDN068J0</text><line x1="1029.5" y1="676.5" x2="1036.5" y2="676.5" stroke="#6a6a6a" stroke-width="0.9"/><text x="1035.5" y="675.6999999999999" font-size="2.6" fill="#666" text-anchor="end" font-weight="normal">WM</text><text x="1038.0" y="677.3" font-size="2.9" fill="#707070" text-anchor="start" font-weight="normal">6DVAE3VCSO5</text><line x1="991" y1="685.5" x2="1036.5" y2="685.5" stroke="#6a6a6a" stroke-width="0.9"/><text x="1035.5" y="684.4" font-size="2.6" fill="#666" text-anchor="end" font-weight="normal">TM</text><rect x="985.5" y="683.4" width="5" height="3.2" rx="1.2" fill="none" stroke="#8a8a9a" stroke-width="0.5"/><rect x="967.2" y="682.4" width="16.8" height="4.6" fill="none" stroke="#6a6ad8" stroke-width="0.45" stroke-dasharray="0.8 0.6"/><text x="983.5" y="686.3" font-size="3.6" fill="#3434b4" text-anchor="end" font-weight="normal">N625NNDL</text><text x="1038.0" y="686.0" font-size="2.9" fill="#707070" text-anchor="start" font-weight="normal">4HDIE8LAK8O</text><line x1="991" y1="690.5" x2="1036.5" y2="690.5" stroke="#6a6a6a" stroke-width="0.9"/><text x="1035.5" y="690.1999999999999" font-size="2.6" fill="#666" text-anchor="end" font-weight="normal">TN</text><rect x="985.5" y="689.1999999999999" width="5" height="3.2" rx="1.2" fill="none" stroke="#8a8a9a" stroke-width="0.5"/><rect x="967.2" y="688.1999999999999" width="16.8" height="4.6" fill="none" stroke="#6a6ad8" stroke-width="0.45" stroke-dasharray="0.8 0.6"/><text x="983.5" y="692.0999999999999" font-size="3.6" fill="#3434b4" text-anchor="end" font-weight="normal">KJNG6GMF</text><text x="1038.0" y="691.8" font-size="2.9" fill="#707070" text-anchor="start" font-weight="normal">D3OR54JDICK</text><line x1="1029.5" y1="696.5" x2="1036.5" y2="696.5" stroke="#6a6a6a" stroke-width="0.9"/><text x="1035.5" y="696.0" font-size="2.6" fill="#666" text-anchor="end" font-weight="normal">5T</text><text x="1038.0" y="697.6" font-size="2.9" fill="#707070" text-anchor="start" font-weight="normal">OVJURVNJO2C</text><line x1="990" y1="705.5" x2="1036.5" y2="705.5" stroke="#6a6a6a" stroke-width="0.9"/><text x="1035.5" y="704.6999999999999" font-size="2.6" fill="#666" text-anchor="end" font-weight="normal">V1</text><rect x="984.5" y="703.6999999999999" width="5" height="3.2" rx="1.2" fill="none" stroke="#8a8a9a" stroke-width="0.5"/><rect x="970.4" y="702.6999999999999" width="12.600000000000001" height="4.6" fill="none" stroke="#6a6ad8" stroke-width="0.45" stroke-dasharray="0.8 0.6"/><text x="982.5" y="706.5999999999999" font-size="3.6" fill="#3434b4" text-anchor="end" font-weight="normal">JTOFM6</text><text x="1038.0" y="706.3" font-size="2.9" fill="#707070" text-anchor="start" font-weight="normal">JL4W2HC_HNE</text><line x1="990" y1="711.5" x2="1036.5" y2="711.5" stroke="#6a6a6a" stroke-width="0.9"/><text x="1035.5" y="710.4" font-size="2.6" fill="#666" text-anchor="end" font-weight="normal">T8</text><rect x="984.5" y="709.4" width="5" height="3.2" rx="1.2" fill="none" stroke="#8a8a9a" stroke-width="0.5"/><rect x="970.4" y="708.4" width="12.600000000000001" height="4.6" fill="none" stroke="#6a6ad8" stroke-width="0.45" stroke-dasharray="0.8 0.6"/><text x="982.5" y="712.3" font-size="3.6" fill="#3434b4" text-anchor="end" font-weight="normal">_B8FM8</text><text x="1038.0" y="712.0" font-size="2.9" fill="#707070" text-anchor="start" font-weight="normal">SUFMI7SOUCG</text><line x1="1029.5" y1="719.5" x2="1036.5" y2="719.5" stroke="#6a6a6a" stroke-width="0.9"/><text x="1035.5" y="719.0" font-size="2.6" fill="#666" text-anchor="end" font-weight="normal">A_</text><text x="1038.0" y="720.6" font-size="2.9" fill="#707070" text-anchor="start" font-weight="normal">MJUDLW_57PW</text><line x1="1029.5" y1="725.5" x2="1036.5" y2="725.5" stroke="#6a6a6a" stroke-width="0.9"/><text x="1035.5" y="724.6999999999999" font-size="2.6" fill="#666" text-anchor="end" font-weight="normal">0L</text><text x="1038.0" y="726.3" font-size="2.9" fill="#707070" text-anchor="start" font-weight="normal">HUE6GHK26CC</text><line x1="1151.5" y1="323.5" x2="1309" y2="323.5" stroke="#6a6a6a" stroke-width="0.9"/><text x="1152.5" y="323.2" font-size="2.6" fill="#666" text-anchor="start" font-weight="normal">C9</text><rect x="1309" y="322.2" width="5" height="3.2" rx="1.2" fill="none" stroke="#8a8a9a" stroke-width="0.5"/><rect x="1315" y="321.2" width="14.700000000000001" height="4.6" fill="none" stroke="#6a6ad8" stroke-width="0.45" stroke-dasharray="0.8 0.6"/><text x="1315.5" y="325.1" font-size="3.6" fill="#3434b4" text-anchor="start" font-weight="normal">G3I3_E0</text><text x="1150.0" y="324.8" font-size="2.9" fill="#707070" text-anchor="end" font-weight="normal">K0KFWA7UJRGGPHJ</text><line x1="1151.5" y1="338.5" x2="1309" y2="338.5" stroke="#6a6a6a" stroke-width="0.9"/><text x="1152.5" y="337.7" font-size="2.6" fill="#666" text-anchor="start" font-weight="normal">8S</text><rect x="1309" y="336.7" width="5" height="3.2" rx="1.2" fill="none" stroke="#8a8a9a" stroke-width="0.5"/><rect x="1315" y="335.7" width="12.600000000000001" height="4.6" fill="none" stroke="#6a6ad8" stroke-width="0.45" stroke-dasharray="0.8 0.6"/><text x="1315.5" y="339.6" font-size="3.6" fill="#3434b4" text-anchor="start" font-weight="normal">HV6PKC</text><text x="1150.0" y="339.3" font-size="2.9" fill="#707070" text-anchor="end" font-weight="normal">9R0MT2NIP9PGAGD</text><line x1="1151.5" y1="343.5" x2="1309" y2="343.5" stroke="#6a6a6a" stroke-width="0.9"/><text x="1152.5" y="342.7" font-size="2.6" fill="#666" text-anchor="start" font-weight="normal">8N</text><rect x="1309" y="341.7" width="5" height="3.2" rx="1.2" fill="none" stroke="#8a8a9a" stroke-width="0.5"/><rect x="1315" y="340.7" width="25.200000000000003" height="4.6" fill="none" stroke="#6a6ad8" stroke-width="0.45" stroke-dasharray="0.8 0.6"/><text x="1315.5" y="344.6" font-size="3.6" fill="#3434b4" text-anchor="start" font-weight="normal">OFKJRB42HTHF</text><text x="1150.0" y="344.3" font-size="2.9" fill="#707070" text-anchor="end" font-weight="normal">NOP9DPEWGCNLUWF</text><line x1="1151.5" y1="355.5" x2="1309" y2="355.5" stroke="#6a6a6a" stroke-width="0.9"/><text x="1152.5" y="354.79999999999995" font-size="2.6" fill="#666" text-anchor="start" font-weight="normal">6L</text><rect x="1309" y="353.79999999999995" width="5" height="3.2" rx="1.2" fill="none" stroke="#8a8a9a" stroke-width="0.5"/><rect x="1315" y="352.79999999999995" width="16.8" height="4.6" fill="none" stroke="#6a6ad8" stroke-width="0.45" stroke-dasharray="0.8 0.6"/><text x="1315.5" y="356.7" font-size="3.6" fill="#3434b4" text-anchor="start" font-weight="normal">AV33CFPJ</text><text x="1150.0" y="356.4" font-size="2.9" fill="#707070" text-anchor="end" font-weight="normal">9KJ_INMOWEA7C8W</text><line x1="1151.5" y1="363.5" x2="1309" y2="363.5" stroke="#6a6a6a" stroke-width="0.9"/><text x="1152.5" y="363.2" font-size="2.6" fill="#666" text-anchor="start" font-weight="normal">EE</text><rect x="1309" y="362.2" width="5" height="3.2" rx="1.2" fill="none" stroke="#8a8a9a" stroke-width="0.5"/><rect x="1315" y="361.2" width="18.900000000000002" height="4.6" fill="none" stroke="#6a6ad8" stroke-width="0.45" stroke-dasharray="0.8 0.6"/><text x="1315.5" y="365.1" font-size="3.6" fill="#3434b4" text-anchor="start" font-weight="normal">MD03F_K88</text><text x="1150.0" y="364.8" font-size="2.9" fill="#707070" text-anchor="end" font-weight="normal">IRUD6K419UHEROP</text><line x1="1151.5" y1="373.5" x2="1158.5" y2="373.5" stroke="#6a6a6a" stroke-width="0.9"/><text x="1152.5" y="373.2" font-size="2.6" fill="#666" text-anchor="start" font-weight="normal">M6</text><text x="1150.0" y="374.8" font-size="2.9" fill="#707070" text-anchor="end" font-weight="normal">P8D22W12FOW4UAU</text><line x1="1151.5" y1="381.5" x2="1310" y2="381.5" stroke="#6a6a6a" stroke-width="0.9"/><text x="1152.5" y="380.59999999999997" font-size="2.6" fill="#666" text-anchor="start" font-weight="normal">8B</text><rect x="1310" y="379.59999999999997" width="5" height="3.2" rx="1.2" fill="none" stroke="#8a8a9a" stroke-width="0.5"/><rect x="1316" y="378.59999999999997" width="25.200000000000003" height="4.6" fill="none" stroke="#6a6ad8" stroke-width="0.45" stroke-dasharray="0.8 0.6"/><text x="1316.5" y="382.5" font-size="3.6" fill="#3434b4" text-anchor="start" font-weight="normal">H733U6JWNF_2</text><text x="1150.0" y="382.2" font-size="2.9" fill="#707070" text-anchor="end" font-weight="normal">6CTWFSL53PHNC1L</text><line x1="1151.5" y1="387.5" x2="1310" y2="387.5" stroke="#6a6a6a" stroke-width="0.9"/><text x="1152.5" y="386.5" font-size="2.6" fill="#666" text-anchor="start" font-weight="normal">1S</text><rect x="1310" y="385.5" width="5" height="3.2" rx="1.2" fill="none" stroke="#8a8a9a" stroke-width="0.5"/><rect x="1316" y="384.5" width="18.900000000000002" height="4.6" fill="none" stroke="#6a6ad8" stroke-width="0.45" stroke-dasharray="0.8 0.6"/><text x="1316.5" y="388.40000000000003" font-size="3.6" fill="#3434b4" text-anchor="start" font-weight="normal">WJ0KO_2U8</text><text x="1150.0" y="388.1" font-size="2.9" fill="#707070" text-anchor="end" font-weight="normal">V9MK2AALGP6R_G9</text><line x1="1151.5" y1="392.5" x2="1310" y2="392.5" stroke="#6a6a6a" stroke-width="0.9"/><text x="1152.5" y="392.09999999999997" font-size="2.6" fill="#666" text-anchor="start" font-weight="normal">1I</text><rect x="1310" y="391.09999999999997" width="5" height="3.2" rx="1.2" fill="none" stroke="#8a8a9a" stroke-width="0.5"/><rect x="1316" y="390.09999999999997" width="25.200000000000003" height="4.6" fill="none" stroke="#6a6ad8" stroke-width="0.45" stroke-dasharray="0.8 0.6"/><text x="1316.5" y="394.0" font-size="3.6" fill="#3434b4" text-anchor="start" font-weight="normal">R3E9W5ST0U1D</text><text x="1150.0" y="393.7" font-size="2.9" fill="#707070" text-anchor="end" font-weight="normal">880BDH15U9J6CV7</text><line x1="1151.5" y1="403.5" x2="1207" y2="403.5" stroke="#6a6a6a" stroke-width="0.9"/><text x="1152.5" y="402.7" font-size="2.6" fill="#666" text-anchor="start" font-weight="normal">IA</text><rect x="1207" y="401.7" width="5" height="3.2" rx="1.2" fill="none" stroke="#8a8a9a" stroke-width="0.5"/><rect x="1213" y="400.7" width="25.200000000000003" height="4.6" fill="none" stroke="#6a6ad8" stroke-width="0.45" stroke-dasharray="0.8 0.6"/><text x="1213.5" y="404.6" font-size="3.6" fill="#3434b4" text-anchor="start" font-weight="normal">SJM9C2LSPTB3</text><text x="1150.0" y="404.3" font-size="2.9" fill="#707070" text-anchor="end" font-weight="normal">3F180SVK8D_IMDK</text><line x1="1151.5" y1="409.5" x2="1207" y2="409.5" stroke="#6a6a6a" stroke-width="0.9"/><text x="1152.5" y="408.9" font-size="2.6" fill="#666" text-anchor="start" font-weight="normal">UK</text><rect x="1207" y="407.9" width="5" height="3.2" rx="1.2" fill="none" stroke="#8a8a9a" stroke-width="0.5"/><rect x="1213" y="406.9" width="25.200000000000003" height="4.6" fill="none" stroke="#6a6ad8" stroke-width="0.45" stroke-dasharray="0.8 0.6"/><text x="1213.5" y="410.8" font-size="3.6" fill="#3434b4" text-anchor="start" font-weight="normal">UDU10LSU7MV5</text><text x="1150.0" y="410.5" font-size="2.9" fill="#707070" text-anchor="end" font-weight="normal">2GR02V17SHN593K</text><line x1="1151.5" y1="418.5" x2="1207" y2="418.5" stroke="#6a6a6a" stroke-width="0.9"/><text x="1152.5" y="417.59999999999997" font-size="2.6" fill="#666" text-anchor="start" font-weight="normal">VC</text><rect x="1207" y="416.59999999999997" width="5" height="3.2" rx="1.2" fill="none" stroke="#8a8a9a" stroke-width="0.5"/><rect x="1213" y="415.59999999999997" width="25.200000000000003" height="4.6" fill="none" stroke="#6a6ad8" stroke-width="0.45" stroke-dasharray="0.8 0.6"/><text x="1213.5" y="419.5" font-size="3.6" fill="#3434b4" text-anchor="start" font-weight="normal">JS73ES202THR</text><text x="1150.0" y="419.2" font-size="2.9" fill="#707070" text-anchor="end" font-weight="normal">5ACU_0RPEG3HUKL</text><line x1="1151.5" y1="423.5" x2="1207" y2="423.5" stroke="#6a6a6a" stroke-width="0.9"/><text x="1152.5" y="423.2" font-size="2.6" fill="#666" text-anchor="start" font-weight="normal">H2</text><rect x="1207" y="422.2" width="5" height="3.2" rx="1.2" fill="none" stroke="#8a8a9a" stroke-width="0.5"/><rect x="1213" y="421.2" width="25.200000000000003" height="4.6" fill="none" stroke="#6a6ad8" stroke-width="0.45" stroke-dasharray="0.8 0.6"/><text x="1213.5" y="425.1" font-size="3.6" fill="#3434b4" text-anchor="start" font-weight="normal">2W228W_LJ3TI</text><text x="1150.0" y="424.8" font-size="2.9" fill="#707070" text-anchor="end" font-weight="normal">NWE3E9AP42NSIJO</text><line x1="1151.5" y1="431.5" x2="1158.5" y2="431.5" stroke="#6a6a6a" stroke-width="0.9"/><text x="1152.5" y="431.09999999999997" font-size="2.6" fill="#666" text-anchor="start" font-weight="normal">P9</text><text x="1150.0" y="432.7" font-size="2.9" fill="#707070" text-anchor="end" font-weight="normal">HTC1TI1SE9SNOUG</text><line x1="1151.5" y1="437.5" x2="1158.5" y2="437.5" stroke="#6a6a6a" stroke-width="0.9"/><text x="1152.5" y="436.79999999999995" font-size="2.6" fill="#666" text-anchor="start" font-weight="normal">0F</text><text x="1150.0" y="438.4" font-size="2.9" fill="#707070" text-anchor="end" font-weight="normal">0BEHVNA6I5S9D5C</text><line x1="1151.5" y1="446.5" x2="1158.5" y2="446.5" stroke="#6a6a6a" stroke-width="0.9"/><text x="1152.5" y="446.2" font-size="2.6" fill="#666" text-anchor="start" font-weight="normal">C6</text><text x="1150.0" y="447.8" font-size="2.9" fill="#707070" text-anchor="end" font-weight="normal">H7OTWWONNTBOLB9</text><line x1="1151.5" y1="452.5" x2="1158.5" y2="452.5" stroke="#6a6a6a" stroke-width="0.9"/><text x="1152.5" y="451.4" font-size="2.6" fill="#666" text-anchor="start" font-weight="normal">S4</text><text x="1150.0" y="453.0" font-size="2.9" fill="#707070" text-anchor="end" font-weight="normal">0ESFH2193OD0WRE</text><line x1="1151.5" y1="461.5" x2="1207" y2="461.5" stroke="#6a6a6a" stroke-width="0.9"/><text x="1152.5" y="460.4" font-size="2.6" fill="#666" text-anchor="start" font-weight="normal">7I</text><rect x="1207" y="459.4" width="5" height="3.2" rx="1.2" fill="none" stroke="#8a8a9a" stroke-width="0.5"/><rect x="1213" y="458.4" width="25.200000000000003" height="4.6" fill="none" stroke="#6a6ad8" stroke-width="0.45" stroke-dasharray="0.8 0.6"/><text x="1213.5" y="462.3" font-size="3.6" fill="#3434b4" text-anchor="start" font-weight="normal">466MWMH2KTME</text><text x="1150.0" y="462.0" font-size="2.9" fill="#707070" text-anchor="end" font-weight="normal">B5MMRMTBBE_N3AR</text><line x1="1151.5" y1="466.5" x2="1207" y2="466.5" stroke="#6a6a6a" stroke-width="0.9"/><text x="1152.5" y="466.2" font-size="2.6" fill="#666" text-anchor="start" font-weight="normal">_K</text><rect x="1207" y="465.2" width="5" height="3.2" rx="1.2" fill="none" stroke="#8a8a9a" stroke-width="0.5"/><rect x="1213" y="464.2" width="25.200000000000003" height="4.6" fill="none" stroke="#6a6ad8" stroke-width="0.45" stroke-dasharray="0.8 0.6"/><text x="1213.5" y="468.1" font-size="3.6" fill="#3434b4" text-anchor="start" font-weight="normal">V_UGCL_3B6GW</text><text x="1150.0" y="467.8" font-size="2.9" fill="#707070" text-anchor="end" font-weight="normal">GJ078FWV7IGR91N</text><line x1="1151.5" y1="475.5" x2="1158.5" y2="475.5" stroke="#6a6a6a" stroke-width="0.9"/><text x="1152.5" y="475.29999999999995" font-size="2.6" fill="#666" text-anchor="start" font-weight="normal">_R</text><text x="1150.0" y="476.9" font-size="2.9" fill="#707070" text-anchor="end" font-weight="normal">BMS41K4IIAHN1BA</text><line x1="1151.5" y1="481.5" x2="1158.5" y2="481.5" stroke="#6a6a6a" stroke-width="0.9"/><text x="1152.5" y="480.9" font-size="2.6" fill="#666" text-anchor="start" font-weight="normal">F6</text><text x="1150.0" y="482.5" font-size="2.9" fill="#707070" text-anchor="end" font-weight="normal">CNEVW68NAPN_1GG</text><line x1="1151.5" y1="490.5" x2="1208" y2="490.5" stroke="#6a6a6a" stroke-width="0.9"/><text x="1152.5" y="489.4" font-size="2.6" fill="#666" text-anchor="start" font-weight="normal">IM</text><rect x="1208" y="488.4" width="5" height="3.2" rx="1.2" fill="none" stroke="#8a8a9a" stroke-width="0.5"/><rect x="1214" y="487.4" width="0.0" height="4.6" fill="none" stroke="#6a6ad8" stroke-width="0.45" stroke-dasharray="0.8 0.6"/><text x="1214.5" y="491.3" font-size="3.6" fill="#3434b4" text-anchor="start" font-weight="normal"></text><polyline points="1176.75,490 1178.00,491.2 1179.25,488.8 1180.50,491.2 1181.75,488.8 1183.00,491.2 1184.25,488.8 1185.50,491.2 1186.75,488.8" fill="none" stroke="#555" stroke-width="0.55"/><text x="1170.75" y="488.2" font-size="2.4" fill="#777" text-anchor="start" font-weight="normal">565E</text><text x="1183.75" y="488.2" font-size="2.4" fill="#777" text-anchor="start" font-weight="normal">D7K2P</text><text x="1150.0" y="491.0" font-size="2.9" fill="#707070" text-anchor="end" font-weight="normal">77JH81EPOA2OCPG</text><line x1="1151.5" y1="503.5" x2="1208" y2="503.5" stroke="#6a6a6a" stroke-width="0.9"/><text x="1152.5" y="503.0" font-size="2.6" fill="#666" text-anchor="start" font-weight="normal">MA</text><rect x="1208" y="502.0" width="5" height="3.2" rx="1.2" fill="none" stroke="#8a8a9a" stroke-width="0.5"/><rect x="1214" y="501.0" width="18.900000000000002" height="4.6" fill="none" stroke="#6a6ad8" stroke-width="0.45" stroke-dasharray="0.8 0.6"/><text x="1214.5" y="504.90000000000003" font-size="3.6" fill="#3434b4" text-anchor="start" font-weight="normal">C6D2POC3R</text><polyline points="1176.75,503.6 1178.00,504.8 1179.25,502.40000000000003 1180.50,504.8 1181.75,502.40000000000003 1183.00,504.8 1184.25,502.40000000000003 1185.50,504.8 1186.75,502.40000000000003" fill="none" stroke="#555" stroke-width="0.55"/><text x="1170.75" y="501.8" font-size="2.4" fill="#777" text-anchor="start" font-weight="normal">CJ6B</text><text x="1183.75" y="501.8" font-size="2.4" fill="#777" text-anchor="start" font-weight="normal">7GGLJ</text><text x="1150.0" y="504.6" font-size="2.9" fill="#707070" text-anchor="end" font-weight="normal">K9VG91AEBF9EDT6</text><line x1="1151.5" y1="510.5" x2="1208" y2="510.5" stroke="#6a6a6a" stroke-width="0.9"/><text x="1152.5" y="509.4" font-size="2.6" fill="#666" text-anchor="start" font-weight="normal">2A</text><rect x="1208" y="508.4" width="5" height="3.2" rx="1.2" fill="none" stroke="#8a8a9a" stroke-width="0.5"/><rect x="1214" y="507.4" width="18.900000000000002" height="4.6" fill="none" stroke="#6a6ad8" stroke-width="0.45" stroke-dasharray="0.8 0.6"/><text x="1214.5" y="511.3" font-size="3.6" fill="#3434b4" text-anchor="start" font-weight="normal">NBL96NHN4</text><polyline points="1176.75,510 1178.00,511.2 1179.25,508.8 1180.50,511.2 1181.75,508.8 1183.00,511.2 1184.25,508.8 1185.50,511.2 1186.75,508.8" fill="none" stroke="#555" stroke-width="0.55"/><text x="1170.75" y="508.2" font-size="2.4" fill="#777" text-anchor="start" font-weight="normal">HF_G</text><text x="1183.75" y="508.2" font-size="2.4" fill="#777" text-anchor="start" font-weight="normal">FPGF0</text><text x="1150.0" y="511.0" font-size="2.9" fill="#707070" text-anchor="end" font-weight="normal">SUUTJ8WMAFECHN1</text><line x1="1151.5" y1="524.5" x2="1208" y2="524.5" stroke="#6a6a6a" stroke-width="0.9"/><text x="1152.5" y="524.1" font-size="2.6" fill="#666" text-anchor="start" font-weight="normal">63</text><rect x="1208" y="523.1" width="5" height="3.2" rx="1.2" fill="none" stroke="#8a8a9a" stroke-width="0.5"/><rect x="1214" y="522.1" width="18.900000000000002" height="4.6" fill="none" stroke="#6a6ad8" stroke-width="0.45" stroke-dasharray="0.8 0.6"/><text x="1214.5" y="526.0" font-size="3.6" fill="#3434b4" text-anchor="start" font-weight="normal">NFBDBI4DL</text><text x="1150.0" y="525.7" font-size="2.9" fill="#707070" text-anchor="end" font-weight="normal">T5RIRU_BV1GK5K7</text><line x1="1151.5" y1="533.5" x2="1208" y2="533.5" stroke="#6a6a6a" stroke-width="0.9"/><text x="1152.5" y="532.4" font-size="2.6" fill="#666" text-anchor="start" font-weight="normal">VS</text><rect x="1208" y="531.4" width="5" height="3.2" rx="1.2" fill="none" stroke="#8a8a9a" stroke-width="0.5"/><rect x="1214" y="530.4" width="14.700000000000001" height="4.6" fill="none" stroke="#6a6ad8" stroke-width="0.45" stroke-dasharray="0.8 0.6"/><text x="1214.5" y="534.3" font-size="3.6" fill="#3434b4" text-anchor="start" font-weight="normal">PA3BWO_</text><text x="1150.0" y="534.0" font-size="2.9" fill="#707070" text-anchor="end" font-weight="normal">WAPWFKGCV4W0EH6</text><line x1="1151.5" y1="541.5" x2="1158.5" y2="541.5" stroke="#6a6a6a" stroke-width="0.9"/><text x="1152.5" y="540.9" font-size="2.6" fill="#666" text-anchor="start" font-weight="normal">KN</text><text x="1150.0" y="542.5" font-size="2.9" fill="#707070" text-anchor="end" font-weight="normal">DP3FNNTAR4HL5KT</text><line x1="1151.5" y1="555.5" x2="1158.5" y2="555.5" stroke="#6a6a6a" stroke-width="0.9"/><text x="1152.5" y="554.6" font-size="2.6" fill="#666" text-anchor="start" font-weight="normal">2P</text><text x="1150.0" y="556.2" font-size="2.9" fill="#707070" text-anchor="end" font-weight="normal">WRBFNRJEE2UEEEA</text><line x1="1151.5" y1="564.5" x2="1158.5" y2="564.5" stroke="#6a6a6a" stroke-width="0.9"/><text x="1152.5" y="564.0" font-size="2.6" fill="#666" text-anchor="start" font-weight="normal">E0</text><text x="1150.0" y="565.6" font-size="2.9" fill="#707070" text-anchor="end" font-weight="normal">EJH89S5LGRU23L5</text><line x1="1151.5" y1="582.5" x2="1207" y2="582.5" stroke="#6a6a6a" stroke-width="0.9"/><text x="1152.5" y="581.4" font-size="2.6" fill="#666" text-anchor="start" font-weight="normal">G6</text><rect x="1207" y="580.4" width="5" height="3.2" rx="1.2" fill="none" stroke="#8a8a9a" stroke-width="0.5"/><rect x="1213" y="579.4" width="14.700000000000001" height="4.6" fill="none" stroke="#6a6ad8" stroke-width="0.45" stroke-dasharray="0.8 0.6"/><text x="1213.5" y="583.3" font-size="3.6" fill="#3434b4" text-anchor="start" font-weight="normal">WVNB1OG</text><text x="1150.0" y="583.0" font-size="2.9" fill="#707070" text-anchor="end" font-weight="normal">N_WSAMEFKURLCJ7</text><line x1="1151.5" y1="590.5" x2="1207" y2="590.5" stroke="#6a6a6a" stroke-width="0.9"/><text x="1152.5" y="590.1" font-size="2.6" fill="#666" text-anchor="start" font-weight="normal">GD</text><rect x="1207" y="589.1" width="5" height="3.2" rx="1.2" fill="none" stroke="#8a8a9a" stroke-width="0.5"/><rect x="1213" y="588.1" width="16.8" height="4.6" fill="none" stroke="#6a6ad8" stroke-width="0.45" stroke-dasharray="0.8 0.6"/><text x="1213.5" y="592.0" font-size="3.6" fill="#3434b4" text-anchor="start" font-weight="normal">1RFODETA</text><polyline points="1176.25,590.7 1177.50,591.9000000000001 1178.75,589.5 1180.00,591.9000000000001 1181.25,589.5 1182.50,591.9000000000001 1183.75,589.5 1185.00,591.9000000000001 1186.25,589.5" fill="none" stroke="#555" stroke-width="0.55"/><text x="1170.25" y="588.9000000000001" font-size="2.4" fill="#777" text-anchor="start" font-weight="normal">SI_0</text><text x="1183.25" y="588.9000000000001" font-size="2.4" fill="#777" text-anchor="start" font-weight="normal">LI0R0</text><text x="1150.0" y="591.7" font-size="2.9" fill="#707070" text-anchor="end" font-weight="normal">0KHPKT1BOMO10P7</text><line x1="1151.5" y1="608.5" x2="1207" y2="608.5" stroke="#6a6a6a" stroke-width="0.9"/><text x="1152.5" y="607.4" font-size="2.6" fill="#666" text-anchor="start" font-weight="normal">RA</text><rect x="1207" y="606.4" width="5" height="3.2" rx="1.2" fill="none" stroke="#8a8a9a" stroke-width="0.5"/><rect x="1213" y="605.4" width="16.8" height="4.6" fill="none" stroke="#6a6ad8" stroke-width="0.45" stroke-dasharray="0.8 0.6"/><text x="1213.5" y="609.3" font-size="3.6" fill="#3434b4" text-anchor="start" font-weight="normal">DG10PTB7</text><text x="1150.0" y="609.0" font-size="2.9" fill="#707070" text-anchor="end" font-weight="normal">58HH68F2H87LO45</text><line x1="1151.5" y1="613.5" x2="1207" y2="613.5" stroke="#6a6a6a" stroke-width="0.9"/><text x="1152.5" y="613.1" font-size="2.6" fill="#666" text-anchor="start" font-weight="normal">DH</text><rect x="1207" y="612.1" width="5" height="3.2" rx="1.2" fill="none" stroke="#8a8a9a" stroke-width="0.5"/><rect x="1213" y="611.1" width="16.8" height="4.6" fill="none" stroke="#6a6ad8" stroke-width="0.45" stroke-dasharray="0.8 0.6"/><text x="1213.5" y="615.0" font-size="3.6" fill="#3434b4" text-anchor="start" font-weight="normal">MES057PW</text><text x="1150.0" y="614.7" font-size="2.9" fill="#707070" text-anchor="end" font-weight="normal">DE9O7N1HD4DPK9V</text><line x1="1151.5" y1="624.5" x2="1207" y2="624.5" stroke="#6a6a6a" stroke-width="0.9"/><text x="1152.5" y="624.1999999999999" font-size="2.6" fill="#666" text-anchor="start" font-weight="normal">NG</text><rect x="1207" y="623.1999999999999" width="5" height="3.2" rx="1.2" fill="none" stroke="#8a8a9a" stroke-width="0.5"/><rect x="1213" y="622.1999999999999" width="0.0" height="4.6" fill="none" stroke="#6a6ad8" stroke-width="0.45" stroke-dasharray="0.8 0.6"/><text x="1213.5" y="626.0999999999999" font-size="3.6" fill="#3434b4" text-anchor="start" font-weight="normal"></text><polyline points="1176.25,624.8 1177.50,626.0 1178.75,623.5999999999999 1180.00,626.0 1181.25,623.5999999999999 1182.50,626.0 1183.75,623.5999999999999 1185.00,626.0 1186.25,623.5999999999999" fill="none" stroke="#555" stroke-width="0.55"/><text x="1170.25" y="623.0" font-size="2.4" fill="#777" text-anchor="start" font-weight="normal">F7R6</text><text x="1183.25" y="623.0" font-size="2.4" fill="#777" text-anchor="start" font-weight="normal">6IE5V</text><text x="1150.0" y="625.8" font-size="2.9" fill="#707070" text-anchor="end" font-weight="normal">GNS0EH77RL9A9B7</text><line x1="1151.5" y1="642.5" x2="1158.5" y2="642.5" stroke="#6a6a6a" stroke-width="0.9"/><text x="1152.5" y="641.4" font-size="2.6" fill="#666" text-anchor="start" font-weight="normal">CO</text><text x="1150.0" y="643.0" font-size="2.9" fill="#707070" text-anchor="end" font-weight="normal">8I0J1VC0LOB6F5N</text><line x1="1151.5" y1="647.5" x2="1158.5" y2="647.5" stroke="#6a6a6a" stroke-width="0.9"/><text x="1152.5" y="647.1999999999999" font-size="2.6" fill="#666" text-anchor="start" font-weight="normal">CT</text><text x="1150.0" y="648.8" font-size="2.9" fill="#707070" text-anchor="end" font-weight="normal">5IMUVME2BKA07OE</text><line x1="1151.5" y1="656.5" x2="1158.5" y2="656.5" stroke="#6a6a6a" stroke-width="0.9"/><text x="1152.5" y="655.6999999999999" font-size="2.6" fill="#666" text-anchor="start" font-weight="normal">70</text><text x="1150.0" y="657.3" font-size="2.9" fill="#707070" text-anchor="end" font-weight="normal">98NNM7MU6SOVC3L</text><line x1="1151.5" y1="662.5" x2="1158.5" y2="662.5" stroke="#6a6a6a" stroke-width="0.9"/><text x="1152.5" y="661.4" font-size="2.6" fill="#666" text-anchor="start" font-weight="normal">W3</text><text x="1150.0" y="663.0" font-size="2.9" fill="#707070" text-anchor="end" font-weight="normal">B0KPAJR671IRPHS</text><line x1="1151.5" y1="670.5" x2="1158.5" y2="670.5" stroke="#6a6a6a" stroke-width="0.9"/><text x="1152.5" y="670.1999999999999" font-size="2.6" fill="#666" text-anchor="start" font-weight="normal">3J</text><text x="1150.0" y="671.8" font-size="2.9" fill="#707070" text-anchor="end" font-weight="normal">IIVDKO4KF53ROJS</text><line x1="1151.5" y1="676.5" x2="1158.5" y2="676.5" stroke="#6a6a6a" stroke-width="0.9"/><text x="1152.5" y="675.6999999999999" font-size="2.6" fill="#666" text-anchor="start" font-weight="normal">3G</text><text x="1150.0" y="677.3" font-size="2.9" fill="#707070" text-anchor="end" font-weight="normal">D4GBTETLI3E1U9H</text><line x1="1151.5" y1="685.5" x2="1158.5" y2="685.5" stroke="#6a6a6a" stroke-width="0.9"/><text x="1152.5" y="684.4" font-size="2.6" fill="#666" text-anchor="start" font-weight="normal">5P</text><text x="1150.0" y="686.0" font-size="2.9" fill="#707070" text-anchor="end" font-weight="normal">80M4ER1LRP30RED</text><line x1="1151.5" y1="690.5" x2="1158.5" y2="690.5" stroke="#6a6a6a" stroke-width="0.9"/><text x="1152.5" y="690.1999999999999" font-size="2.6" fill="#666" text-anchor="start" font-weight="normal">7N</text><text x="1150.0" y="691.8" font-size="2.9" fill="#707070" text-anchor="end" font-weight="normal">VA57WL6VO4FN32I</text><line x1="1151.5" y1="699.5" x2="1158.5" y2="699.5" stroke="#6a6a6a" stroke-width="0.9"/><text x="1152.5" y="698.6999999999999" font-size="2.6" fill="#666" text-anchor="start" font-weight="normal">O0</text><text x="1150.0" y="700.3" font-size="2.9" fill="#707070" text-anchor="end" font-weight="normal">0180IONSHC9I23E</text><line x1="1151.5" y1="705.5" x2="1158.5" y2="705.5" stroke="#6a6a6a" stroke-width="0.9"/><text x="1152.5" y="704.6999999999999" font-size="2.6" fill="#666" text-anchor="start" font-weight="normal">76</text><text x="1150.0" y="706.3" font-size="2.9" fill="#707070" text-anchor="end" font-weight="normal">W__4VL7BK20HTNP</text><line x1="1151.5" y1="719.5" x2="1210" y2="719.5" stroke="#6a6a6a" stroke-width="0.9"/><text x="1152.5" y="719.0" font-size="2.6" fill="#666" text-anchor="start" font-weight="normal">M0</text><rect x="1210" y="718.0" width="5" height="3.2" rx="1.2" fill="none" stroke="#8a8a9a" stroke-width="0.5"/><rect x="1216" y="717.0" width="16.8" height="4.6" fill="none" stroke="#6a6ad8" stroke-width="0.45" stroke-dasharray="0.8 0.6"/><text x="1216.5" y="720.9" font-size="3.6" fill="#3434b4" text-anchor="start" font-weight="normal">URKE6CMA</text><text x="1150.0" y="720.6" font-size="2.9" fill="#707070" text-anchor="end" font-weight="normal">3SBEALFPALOLRPB</text><line x1="1151.5" y1="725.5" x2="1210" y2="725.5" stroke="#6a6a6a" stroke-width="0.9"/><text x="1152.5" y="724.6999999999999" font-size="2.6" fill="#666" text-anchor="start" font-weight="normal">BH</text><rect x="1210" y="723.6999999999999" width="5" height="3.2" rx="1.2" fill="none" stroke="#8a8a9a" stroke-width="0.5"/><rect x="1216" y="722.6999999999999" width="16.8" height="4.6" fill="none" stroke="#6a6ad8" stroke-width="0.45" stroke-dasharray="0.8 0.6"/><text x="1216.5" y="726.5999999999999" font-size="3.6" fill="#3434b4" text-anchor="start" font-weight="normal">FFMJ7WE_</text><text x="1150.0" y="726.3" font-size="2.9" fill="#707070" text-anchor="end" font-weight="normal">VT37RWDFRKRFEDR</text><text x="1022.5" y="650.1" font-size="3.2" fill="#555" text-anchor="start" font-weight="normal">L</text><text x="1022.5" y="655.9" font-size="3.2" fill="#555" text-anchor="start" font-weight="normal">B</text><text x="1022.5" y="664.6" font-size="3.2" fill="#555" text-anchor="start" font-weight="normal">B</text><text x="1022.5" y="670.4" font-size="3.2" fill="#555" text-anchor="start" font-weight="normal">B</text><text x="1022.5" y="675.9" font-size="3.2" fill="#555" text-anchor="start" font-weight="normal">L</text><text x="1022.5" y="684.6" font-size="3.2" fill="#555" text-anchor="start" font-weight="normal">L</text><text x="1022.5" y="690.4" font-size="3.2" fill="#555" text-anchor="start" font-weight="normal">L</text><text x="1022.5" y="696.2" font-size="3.2" fill="#555" text-anchor="start" font-weight="normal">L</text><text x="1022.5" y="704.9" font-size="3.2" fill="#555" text-anchor="start" font-weight="normal">B</text><text x="1022.5" y="710.6" font-size="3.2" fill="#555" text-anchor="start" font-weight="normal">B</text><text x="1022.5" y="719.2" font-size="3.2" fill="#555" text-anchor="start" font-weight="normal">B</text><text x="1022.5" y="724.9" font-size="3.2" fill="#555" text-anchor="start" font-weight="normal">L</text><text x="1159.5" y="503.20000000000005" font-size="3.2" fill="#555" text-anchor="start" font-weight="normal">L</text><text x="1159.5" y="509.6" font-size="3.2" fill="#555" text-anchor="start" font-weight="normal">L</text><text x="1159.5" y="719.2" font-size="3.2" fill="#555" text-anchor="start" font-weight="normal">L</text><text x="1159.5" y="724.9" font-size="3.2" fill="#555" text-anchor="start" font-weight="normal">L</text><rect x="1036.5" y="309.5" width="115.0" height="425.0" fill="none" stroke="#606060" stroke-width="0.9"/><line x1="1094.5" y1="314.3" x2="1094.5" y2="727.5" stroke="#606060" stroke-width="0.9"/><line x1="1036.5" y1="314.5" x2="1151.5" y2="314.5" stroke="#606060" stroke-width="0.9"/><line x1="1036.5" y1="727.5" x2="1151.5" y2="727.5" stroke="#333" stroke-width="1.0"/><text x="1094.0" y="313.5" font-size="4.6" fill="#333" text-anchor="middle" font-weight="normal">INTERFACE</text><text x="1149.5" y="313.5" font-size="3" fill="#444" text-anchor="end" font-weight="normal">1 of 8</text><rect x="1036.5" y="315.5" width="58.0" height="6.0" fill="none" stroke="#555" stroke-width="0.9"/><text x="1065.5" y="319.8" font-size="4.8" fill="#444" text-anchor="middle" textLength="54.0" lengthAdjust="spacingAndGlyphs">A TO D INTERFACE (VIO1V8)</text><rect x="1036.5" y="412.5" width="58.0" height="6.0" fill="none" stroke="#555" stroke-width="0.9"/><text x="1065.5" y="417.3" font-size="4.8" fill="#444" text-anchor="middle">D TO A CLK2G0</text><rect x="1036.5" y="430.5" width="58.0" height="5.0" fill="none" stroke="#555" stroke-width="0.9"/><text x="1065.5" y="434.5" font-size="4.8" fill="#444" text-anchor="middle">CSI 0 M</text><rect x="1036.5" y="475.5" width="58.0" height="6.0" fill="none" stroke="#555" stroke-width="0.9"/><text x="1065.5" y="480.3" font-size="4.8" fill="#444" text-anchor="middle">CSI 0 S</text><rect x="1036.5" y="522.5" width="58.0" height="5.0" fill="none" stroke="#555" stroke-width="0.9"/><text x="1065.5" y="526.1999999999999" font-size="4.8" fill="#444" text-anchor="middle">CSI 1</text><rect x="1036.5" y="596.5" width="58.0" height="6.0" fill="none" stroke="#555" stroke-width="0.9"/><text x="1065.5" y="601.0" font-size="4.8" fill="#444" text-anchor="middle">CSI 2 M (NC)</text><rect x="1036.5" y="642.5" width="58.0" height="6.0" fill="none" stroke="#555" stroke-width="0.9"/><text x="1065.5" y="647.0" font-size="4.8" fill="#444" text-anchor="middle">CSI CTRL (VCAM)</text><rect x="1094.5" y="315.5" width="57.0" height="6.0" fill="none" stroke="#555" stroke-width="0.9"/><text x="1123.0" y="319.8" font-size="4.8" fill="#444" text-anchor="middle">RF</text><rect x="1094.5" y="329.5" width="57.0" height="6.0" fill="none" stroke="#555" stroke-width="0.9"/><text x="1123.0" y="334.1" font-size="4.8" fill="#444" text-anchor="middle">FM</text><rect x="1094.5" y="346.5" width="57.0" height="6.0" fill="none" stroke="#555" stroke-width="0.9"/><text x="1123.0" y="351.2" font-size="4.8" fill="#444" text-anchor="middle">GPS</text><rect x="1094.5" y="367.5" width="57.0" height="5.0" fill="none" stroke="#555" stroke-width="0.9"/><text x="1123.0" y="371.2" font-size="4.8" fill="#444" text-anchor="middle">TSEN</text><rect x="1094.5" y="395.5" width="57.0" height="6.0" fill="none" stroke="#555" stroke-width="0.9"/><text x="1123.0" y="400.3" font-size="4.8" fill="#444" text-anchor="middle">LVDSRF</text><rect x="1094.5" y="493.5" width="57.0" height="6.0" fill="none" stroke="#555" stroke-width="0.9"/><text x="1123.0" y="498.2" font-size="4.8" fill="#444" text-anchor="middle" textLength="53.0" lengthAdjust="spacingAndGlyphs">2VDSRF CTRL (VIO1V8)</text><rect x="1094.5" y="516.5" width="57.0" height="6.0" fill="none" stroke="#555" stroke-width="0.9"/><text x="1123.0" y="520.8" font-size="4.8" fill="#444" text-anchor="middle">APCOUT</text><rect x="1094.5" y="544.5" width="57.0" height="6.0" fill="none" stroke="#555" stroke-width="0.9"/><text x="1123.0" y="549.3" font-size="4.8" fill="#444" text-anchor="middle">CLK TEST</text><rect x="1094.5" y="570.5" width="57.0" height="6.0" fill="none" stroke="#555" stroke-width="0.9"/><text x="1123.0" y="575.0" font-size="4.8" fill="#444" text-anchor="middle">CLK IN</text><rect x="1094.5" y="596.5" width="57.0" height="6.0" fill="none" stroke="#555" stroke-width="0.9"/><text x="1123.0" y="601.0" font-size="4.8" fill="#444" text-anchor="middle">USB2U</text><rect x="1094.5" y="631.5" width="57.0" height="5.0" fill="none" stroke="#555" stroke-width="0.9"/><text x="1123.0" y="635.5" font-size="4.8" fill="#444" text-anchor="middle">DSI</text><rect x="1094.5" y="711.5" width="57.0" height="6.0" fill="none" stroke="#555" stroke-width="0.9"/><text x="1123.0" y="716.0999999999999" font-size="4.8" fill="#444" text-anchor="middle">DXI CTRL (VIO1V8)</text><polyline points="1005,318 1006.25,319.2 1007.50,316.8 1008.75,319.2 1010.00,316.8 1011.25,319.2 1012.50,316.8 1013.75,319.2 1015.00,316.8" fill="none" stroke="#555" stroke-width="0.55"/><text x="999" y="316.2" font-size="2.4" fill="#777" text-anchor="start" font-weight="normal">GEJM</text><text x="1012" y="316.2" font-size="2.4" fill="#777" text-anchor="start" font-weight="normal">56OF7</text><line x1="1022.5" y1="318" x2="1022.5" y2="323" stroke="#6a6a6a" stroke-width="0.9"/><line x1="1000" y1="318.5" x2="1024" y2="318.5" stroke="#777" stroke-width="0.9"/><rect x="1164" y="341" width="26" height="5" fill="none" stroke="#aaa" stroke-width="0.5"/><line x1="1176.5" y1="340" x2="1176.5" y2="346" stroke="#444" stroke-width="0.9"/><line x1="1178.5" y1="340" x2="1178.5" y2="346" stroke="#444" stroke-width="0.9"/><polyline points="1195,338.3 1196.25,339.5 1197.50,337.1 1198.75,339.5 1200.00,337.1 1201.25,339.5 1202.50,337.1 1203.75,339.5 1205.00,337.1" fill="none" stroke="#555" stroke-width="0.55"/><text x="1189" y="336.5" font-size="2.4" fill="#777" text-anchor="start" font-weight="normal">4IAM</text><text x="1202" y="336.5" font-size="2.4" fill="#777" text-anchor="start" font-weight="normal">NG6PR</text><polyline points="1287,338.3 1288.25,339.5 1289.50,337.1 1290.75,339.5 1292.00,337.1 1293.25,339.5 1294.50,337.1 1295.75,339.5 1297.00,337.1" fill="none" stroke="#555" stroke-width="0.55"/><text x="1281" y="336.5" font-size="2.4" fill="#777" text-anchor="start" font-weight="normal">94WD</text><text x="1294" y="336.5" font-size="2.4" fill="#777" text-anchor="start" font-weight="normal">BOBO9</text><polyline points="1287,343.3 1288.25,344.5 1289.50,342.1 1290.75,344.5 1292.00,342.1 1293.25,344.5 1294.50,342.1 1295.75,344.5 1297.00,342.1" fill="none" stroke="#555" stroke-width="0.55"/><text x="1281" y="341.5" font-size="2.4" fill="#777" text-anchor="start" font-weight="normal">TN6M</text><text x="1294" y="341.5" font-size="2.4" fill="#777" text-anchor="start" font-weight="normal">LNURI</text><polyline points="1205,364 1206.25,365.2 1207.50,362.8 1208.75,365.2 1210.00,362.8 1211.25,365.2 1212.50,362.8 1213.75,365.2 1215.00,362.8" fill="none" stroke="#555" stroke-width="0.55"/><text x="1199" y="362.2" font-size="2.4" fill="#777" text-anchor="start" font-weight="normal">KDO6</text><text x="1212" y="362.2" font-size="2.4" fill="#777" text-anchor="start" font-weight="normal">WU2VU</text><rect x="1160" y="361" width="30" height="8" fill="none" stroke="#aaa" stroke-width="0.5"/><line x1="1182.5" y1="361" x2="1182.5" y2="367" stroke="#666" stroke-width="0.9"/><line x1="955" y1="645.5" x2="980" y2="645.5" stroke="#777" stroke-width="0.9"/><line x1="966.5" y1="645" x2="966.5" y2="650.5" stroke="#555" stroke-width="0.9"/><text x="950" y="644" font-size="2.4" fill="#777" text-anchor="start" font-weight="normal">VCAM_1V8</text><rect x="1114" y="361.5" width="37.5" height="5.100000000000023" fill="none" stroke="#444" stroke-width="0.6"/><rect x="1114" y="373" width="37.5" height="5.399999999999977" fill="none" stroke="#444" stroke-width="0.6"/><line x1="1220.5" y1="296" x2="1220.5" y2="338.3" stroke="#666" stroke-width="0.9"/><line x1="1218.0" y1="310.5" x2="1223.0" y2="310.5" stroke="#444" stroke-width="0.9"/><line x1="1218.0" y1="311.5" x2="1223.0" y2="311.5" stroke="#444" stroke-width="0.9"/><text x="1218.5" y="306" font-size="2.2" fill="#888" text-anchor="start" font-weight="normal">C</text><line x1="1246.5" y1="298" x2="1246.5" y2="355.4" stroke="#666" stroke-width="0.9"/><line x1="1243.5" y1="312.5" x2="1248.5" y2="312.5" stroke="#444" stroke-width="0.9"/><line x1="1243.5" y1="313.5" x2="1248.5" y2="313.5" stroke="#444" stroke-width="0.9"/><text x="1244" y="308" font-size="2.2" fill="#888" text-anchor="start" font-weight="normal">C</text><line x1="1277.5" y1="298" x2="1277.5" y2="355.4" stroke="#666" stroke-width="0.9"/><line x1="1275.4" y1="312.5" x2="1280.4" y2="312.5" stroke="#444" stroke-width="0.9"/><line x1="1275.4" y1="313.5" x2="1280.4" y2="313.5" stroke="#444" stroke-width="0.9"/><text x="1275.9" y="308" font-size="2.2" fill="#888" text-anchor="start" font-weight="normal">C</text><line x1="1246" y1="355.5" x2="1277.9" y2="355.5" stroke="#666" stroke-width="0.9"/><line x1="1257.5" y1="391" x2="1257.5" y2="424" stroke="#666" stroke-width="0.9"/><line x1="1254.5" y1="407.5" x2="1259.5" y2="407.5" stroke="#444" stroke-width="0.9"/><line x1="1272.5" y1="387.1" x2="1272.5" y2="424" stroke="#666" stroke-width="0.9"/><line x1="1269.5" y1="405.5" x2="1274.5" y2="405.5" stroke="#444" stroke-width="0.9"/><line x1="1283.5" y1="381.2" x2="1283.5" y2="424" stroke="#666" stroke-width="0.9"/><line x1="1280.5" y1="402.5" x2="1285.5" y2="402.5" stroke="#444" stroke-width="0.9"/><rect x="422.5" y="794.5" width="69.0" height="26.0" fill="none" stroke="#555" stroke-width="0.8"/><circle cx="436.8" cy="809" r="5.8" fill="#fff" stroke="#555" stroke-width="0.7"/><line x1="433.8" y1="809.5" x2="439.8" y2="809.5" stroke="#999" stroke-width="0.9"/><line x1="436.5" y1="806" x2="436.5" y2="809" stroke="#999" stroke-width="0.9"/><text x="436.8" y="802" font-size="2.2" fill="#777" text-anchor="middle" font-weight="normal">TP1</text><text x="436.8" y="817.5" font-size="2.2" fill="#777" text-anchor="middle" font-weight="normal">GND</text><circle cx="451" cy="809" r="5.8" fill="#fff" stroke="#555" stroke-width="0.7"/><line x1="448" y1="809.5" x2="454" y2="809.5" stroke="#999" stroke-width="0.9"/><line x1="451.5" y1="806" x2="451.5" y2="809" stroke="#999" stroke-width="0.9"/><text x="451" y="802" font-size="2.2" fill="#777" text-anchor="middle" font-weight="normal">TP1</text><text x="451" y="817.5" font-size="2.2" fill="#777" text-anchor="middle" font-weight="normal">GND</text><circle cx="465.5" cy="809" r="5.8" fill="#fff" stroke="#555" stroke-width="0.7"/><line x1="462.5" y1="809.5" x2="468.5" y2="809.5" stroke="#999" stroke-width="0.9"/><line x1="465.5" y1="806" x2="465.5" y2="809" stroke="#999" stroke-width="0.9"/><text x="465.5" y="802" font-size="2.2" fill="#777" text-anchor="middle" font-weight="normal">TP1</text><text x="465.5" y="817.5" font-size="2.2" fill="#777" text-anchor="middle" font-weight="normal">GND</text><circle cx="480" cy="809" r="5.8" fill="#fff" stroke="#555" stroke-width="0.7"/><line x1="477" y1="809.5" x2="483" y2="809.5" stroke="#999" stroke-width="0.9"/><line x1="480.5" y1="806" x2="480.5" y2="809" stroke="#999" stroke-width="0.9"/><text x="480" y="802" font-size="2.2" fill="#777" text-anchor="middle" font-weight="normal">TP1</text><text x="480" y="817.5" font-size="2.2" fill="#777" text-anchor="middle" font-weight="normal">GND</text><circle cx="509.5" cy="800" r="5.8" fill="#fff" stroke="#555" stroke-width="0.8"/><circle cx="509.5" cy="800" r="3.2" fill="none" stroke="#444" stroke-width="0.7"/><line x1="506.0" y1="800.5" x2="513.0" y2="800.5" stroke="#333" stroke-width="0.9"/><line x1="509.5" y1="796.5" x2="509.5" y2="803.5" stroke="#333" stroke-width="0.9"/><circle cx="524" cy="800" r="5.8" fill="#fff" stroke="#555" stroke-width="0.8"/><circle cx="524" cy="800" r="3.2" fill="none" stroke="#444" stroke-width="0.7"/><line x1="520.5" y1="800.5" x2="527.5" y2="800.5" stroke="#333" stroke-width="0.9"/><line x1="524.5" y1="796.5" x2="524.5" y2="803.5" stroke="#333" stroke-width="0.9"/><line x1="509.5" y1="806" x2="509.5" y2="814" stroke="#999" stroke-width="0.9"/><line x1="509.5" y1="808.5" x2="524" y2="808.5" stroke="#999" stroke-width="0.9"/><line x1="524.5" y1="806" x2="524.5" y2="808" stroke="#999" stroke-width="0.9"/><line x1="507" y1="814.5" x2="512" y2="814.5" stroke="#aaa" stroke-width="0.9"/><rect x="597.5" y="751.5" width="152.0" height="69.0" fill="none" stroke="#555" stroke-width="0.8"/><rect x="607.5" y="758" width="6.5" height="7" fill="none" stroke="#555" stroke-width="0.7"/><text x="610.5" y="757.5" font-size="2" fill="#777" text-anchor="middle" font-weight="normal">SW1</text><line x1="614" y1="762.5" x2="633" y2="762.5" stroke="#6a6a6a" stroke-width="0.9"/><rect x="633" y="760.4" width="5" height="3.2" rx="1.2" fill="none" stroke="#8a8a9a" stroke-width="0.5"/><rect x="639" y="759.4" width="14.700000000000001" height="4.6" fill="none" stroke="#6a6ad8" stroke-width="0.45" stroke-dasharray="0.8 0.6"/><text x="639.5" y="763.3" font-size="3.6" fill="#3434b4" text-anchor="start" font-weight="normal">DVFTDV9</text><text x="660" y="762" font-size="2.4" fill="#888" text-anchor="start" font-weight="normal">5</text><rect x="607.5" y="766.5" width="6.5" height="7.0" fill="none" stroke="#555" stroke-width="0.7"/><text x="610.5" y="766.0" font-size="2" fill="#777" text-anchor="middle" font-weight="normal">SW1</text><line x1="614" y1="770.5" x2="633" y2="770.5" stroke="#6a6a6a" stroke-width="0.9"/><rect x="633" y="768.9" width="5" height="3.2" rx="1.2" fill="none" stroke="#8a8a9a" stroke-width="0.5"/><rect x="639" y="767.9" width="14.700000000000001" height="4.6" fill="none" stroke="#6a6ad8" stroke-width="0.45" stroke-dasharray="0.8 0.6"/><text x="639.5" y="771.8" font-size="3.6" fill="#3434b4" text-anchor="start" font-weight="normal">PJLP6BM</text><text x="660" y="770.5" font-size="2.4" fill="#888" text-anchor="start" font-weight="normal">5</text><rect x="607.5" y="775" width="6.5" height="7" fill="none" stroke="#555" stroke-width="0.7"/><text x="610.5" y="774.5" font-size="2" fill="#777" text-anchor="middle" font-weight="normal">SW1</text><line x1="614" y1="779.5" x2="633" y2="779.5" stroke="#6a6a6a" stroke-width="0.9"/><rect x="633" y="777.4" width="5" height="3.2" rx="1.2" fill="none" stroke="#8a8a9a" stroke-width="0.5"/><rect x="639" y="776.4" width="14.700000000000001" height="4.6" fill="none" stroke="#6a6ad8" stroke-width="0.45" stroke-dasharray="0.8 0.6"/><text x="639.5" y="780.3" font-size="3.6" fill="#3434b4" text-anchor="start" font-weight="normal">VH907UE</text><text x="660" y="779" font-size="2.4" fill="#888" text-anchor="start" font-weight="normal">5</text><circle cx="612" cy="788.5" r="3" fill="#fff" stroke="#555" stroke-width="0.7"/><line x1="615" y1="788.5" x2="634" y2="788.5" stroke="#6a6a6a" stroke-width="0.9"/><line x1="635.5" y1="786" x2="635.5" y2="791" stroke="#777" stroke-width="0.9"/><line x1="637.5" y1="786" x2="637.5" y2="791" stroke="#777" stroke-width="0.9"/><text x="612" y="794" font-size="2" fill="#777" text-anchor="middle" font-weight="normal">MIC1</text><circle cx="675.5" cy="763" r="3.2" fill="#fff" stroke="#555" stroke-width="0.7"/><text x="675.5" y="759.2" font-size="2" fill="#777" text-anchor="middle" font-weight="normal">TP</text><line x1="679" y1="763.5" x2="700" y2="763.5" stroke="#6a6a6a" stroke-width="0.9"/><rect x="700" y="761.4" width="5" height="3.2" rx="1.2" fill="none" stroke="#8a8a9a" stroke-width="0.5"/><rect x="706" y="760.4" width="10.5" height="4.6" fill="none" stroke="#6a6ad8" stroke-width="0.45" stroke-dasharray="0.8 0.6"/><text x="706.5" y="764.3" font-size="3.6" fill="#3434b4" text-anchor="start" font-weight="normal">GE147</text><text x="733" y="763" font-size="2.3" fill="#888" text-anchor="start" font-weight="normal">100</text><circle cx="675.5" cy="771.5" r="3.2" fill="#fff" stroke="#555" stroke-width="0.7"/><text x="675.5" y="767.7" font-size="2" fill="#777" text-anchor="middle" font-weight="normal">TP</text><line x1="679" y1="771.5" x2="700" y2="771.5" stroke="#6a6a6a" stroke-width="0.9"/><rect x="700" y="769.9" width="5" height="3.2" rx="1.2" fill="none" stroke="#8a8a9a" stroke-width="0.5"/><rect x="706" y="768.9" width="10.5" height="4.6" fill="none" stroke="#6a6ad8" stroke-width="0.45" stroke-dasharray="0.8 0.6"/><text x="706.5" y="772.8" font-size="3.6" fill="#3434b4" text-anchor="start" font-weight="normal">ER9O5</text><circle cx="675.5" cy="780" r="3.2" fill="#fff" stroke="#555" stroke-width="0.7"/><text x="675.5" y="776.2" font-size="2" fill="#777" text-anchor="middle" font-weight="normal">TP</text><line x1="679" y1="780.5" x2="700" y2="780.5" stroke="#6a6a6a" stroke-width="0.9"/><line x1="700.5" y1="778" x2="700.5" y2="782" stroke="#777" stroke-width="0.9"/><line x1="702.5" y1="778" x2="702.5" y2="782" stroke="#777" stroke-width="0.9"/><circle cx="675.5" cy="788.5" r="3.2" fill="#fff" stroke="#555" stroke-width="0.7"/><text x="675.5" y="784.7" font-size="2" fill="#777" text-anchor="middle" font-weight="normal">TP</text><line x1="679" y1="788.5" x2="700" y2="788.5" stroke="#6a6a6a" stroke-width="0.9"/><rect x="700" y="786.9" width="5" height="3.2" rx="1.2" fill="none" stroke="#8a8a9a" stroke-width="0.5"/><rect x="706" y="785.9" width="10.5" height="4.6" fill="none" stroke="#6a6ad8" stroke-width="0.45" stroke-dasharray="0.8 0.6"/><text x="706.5" y="789.8" font-size="3.6" fill="#3434b4" text-anchor="start" font-weight="normal">V7305</text><text x="733" y="788.5" font-size="2.3" fill="#888" text-anchor="start" font-weight="normal">100</text><circle cx="675.5" cy="797" r="3.2" fill="#fff" stroke="#555" stroke-width="0.7"/><text x="675.5" y="793.2" font-size="2" fill="#777" text-anchor="middle" font-weight="normal">TP</text><line x1="679" y1="797.5" x2="700" y2="797.5" stroke="#6a6a6a" stroke-width="0.9"/><rect x="700" y="795.4" width="5" height="3.2" rx="1.2" fill="none" stroke="#8a8a9a" stroke-width="0.5"/><rect x="706" y="794.4" width="10.5" height="4.6" fill="none" stroke="#6a6ad8" stroke-width="0.45" stroke-dasharray="0.8 0.6"/><text x="706.5" y="798.3" font-size="3.6" fill="#3434b4" text-anchor="start" font-weight="normal">VDG6F</text><text x="733" y="797" font-size="2.3" fill="#888" text-anchor="start" font-weight="normal">100</text><circle cx="675.5" cy="805.5" r="3.2" fill="#fff" stroke="#555" stroke-width="0.7"/><text x="675.5" y="801.7" font-size="2" fill="#777" text-anchor="middle" font-weight="normal">TP</text><line x1="679" y1="805.5" x2="700" y2="805.5" stroke="#6a6a6a" stroke-width="0.9"/><rect x="700" y="803.9" width="5" height="3.2" rx="1.2" fill="none" stroke="#8a8a9a" stroke-width="0.5"/><rect x="706" y="802.9" width="10.5" height="4.6" fill="none" stroke="#6a6ad8" stroke-width="0.45" stroke-dasharray="0.8 0.6"/><text x="706.5" y="806.8" font-size="3.6" fill="#3434b4" text-anchor="start" font-weight="normal">SICIE</text><text x="733" y="805.5" font-size="2.3" fill="#888" text-anchor="start" font-weight="normal">100</text><circle cx="675.5" cy="814" r="3.2" fill="#fff" stroke="#555" stroke-width="0.7"/><text x="675.5" y="810.2" font-size="2" fill="#777" text-anchor="middle" font-weight="normal">TP</text><line x1="679" y1="814.5" x2="700" y2="814.5" stroke="#6a6a6a" stroke-width="0.9"/><rect x="700" y="812.4" width="5" height="3.2" rx="1.2" fill="none" stroke="#8a8a9a" stroke-width="0.5"/><rect x="706" y="811.4" width="10.5" height="4.6" fill="none" stroke="#6a6ad8" stroke-width="0.45" stroke-dasharray="0.8 0.6"/><text x="706.5" y="815.3" font-size="3.6" fill="#3434b4" text-anchor="start" font-weight="normal">6CUEW</text><text x="733" y="814" font-size="2.3" fill="#888" text-anchor="start" font-weight="normal">100</text><text x="725" y="763" font-size="2.4" fill="#888" text-anchor="start" font-weight="normal">R A E R</text></svg><div class="abs" style="left:1505px;top:161px;width:16px;height:673px;background:#fff;border-right:1px solid #c8d0d4"></div><div class="abs" style="left:1505px;top:177px;width:15px;height:1px;background:#d0d0d0"></div><div class="abs" style="left:1505px;top:820px;width:15px;height:1px;background:#d0d0d0"></div><svg class="abs" style="left:1505px;top:161px" width="15" height="16"><path d="M3.5 10.5 L7.5 6.5 L11.5 10.5" fill="none" stroke="#444" stroke-width="1.5"/></svg><svg class="abs" style="left:1505px;top:821px" width="15" height="13"><path d="M3.5 5 L7.5 9 L11.5 5" fill="none" stroke="#444" stroke-width="1.5"/></svg><div class="abs" style="left:1505px;top:231px;width:15px;height:54px;background:#dcdcdc;border-top:1px solid #a8a8a8;border-bottom:1px solid #a8a8a8"></div><div class="abs" style="left:1509px;top:254px;width:7px;height:2px;background:#555"></div><div class="abs" style="left:1509px;top:257px;width:7px;height:2px;background:#555"></div><div class="abs" style="left:1509px;top:260px;width:7px;height:2px;background:#555"></div><div class="abs" style="left:0;top:134px;width:255px;height:699px;background:#fff;border-left:1px solid #a8b0b4"></div><svg class="abs" style="left:0;top:134px" width="236" height="700"><line x1="19.5" y1="6" x2="19.5" y2="700" stroke="#444" stroke-width="1" stroke-dasharray="1 1"/><line x1="38.5" y1="6" x2="38.5" y2="666" stroke="#444" stroke-width="1" stroke-dasharray="1 1"/><line x1="38.5" y1="663" x2="38.5" y2="700" stroke="#444" stroke-width="1" stroke-dasharray="1 1"/><line x1="43" y1="15.5" x2="50" y2="15.5" stroke="#444" stroke-width="1" stroke-dasharray="1 1"/><rect x="34.5" y="11.5" width="8" height="8" fill="url(#pb)" stroke="#999"/><rect x="36" y="15" width="5" height="1" fill="#111"/><rect x="38" y="13" width="1" height="5" fill="#111"/><path d="M50.5 8.5 h5 l1.5 2 h6.5 v9.5 h-13 z" fill="url(#fd)" stroke="#d7b35a" stroke-width="1"/><line x1="43" y1="31.5" x2="50" y2="31.5" stroke="#444" stroke-width="1" stroke-dasharray="1 1"/><rect x="34.5" y="27.5" width="8" height="8" fill="url(#pb)" stroke="#999"/><rect x="36" y="31" width="5" height="1" fill="#111"/><rect x="38" y="29" width="1" height="5" fill="#111"/><path d="M50.5 24.5 h5 l1.5 2 h6.5 v9.5 h-13 z" fill="url(#fd)" stroke="#d7b35a" stroke-width="1"/><line x1="43" y1="47.5" x2="50" y2="47.5" stroke="#444" stroke-width="1" stroke-dasharray="1 1"/><rect x="34.5" y="43.5" width="8" height="8" fill="url(#pb)" stroke="#999"/><rect x="36" y="47" width="5" height="1" fill="#111"/><rect x="38" y="45" width="1" height="5" fill="#111"/><path d="M50.5 40.5 h5 l1.5 2 h6.5 v9.5 h-13 z" fill="url(#fd)" stroke="#d7b35a" stroke-width="1"/><line x1="43" y1="63.5" x2="50" y2="63.5" stroke="#444" stroke-width="1" stroke-dasharray="1 1"/><rect x="34.5" y="59.5" width="8" height="8" fill="url(#pb)" stroke="#999"/><rect x="36" y="63" width="5" height="1" fill="#111"/><rect x="38" y="61" width="1" height="5" fill="#111"/><path d="M50.5 56.5 h5 l1.5 2 h6.5 v9.5 h-13 z" fill="url(#fd)" stroke="#d7b35a" stroke-width="1"/><line x1="43" y1="79.5" x2="50" y2="79.5" stroke="#444" stroke-width="1" stroke-dasharray="1 1"/><rect x="34.5" y="75.5" width="8" height="8" fill="url(#pb)" stroke="#999"/><rect x="36" y="79" width="5" height="1" fill="#111"/><rect x="38" y="77" width="1" height="5" fill="#111"/><path d="M50.5 72.5 h5 l1.5 2 h6.5 v9.5 h-13 z" fill="url(#fd)" stroke="#d7b35a" stroke-width="1"/><line x1="43" y1="95.5" x2="50" y2="95.5" stroke="#444" stroke-width="1" stroke-dasharray="1 1"/><rect x="34.5" y="91.5" width="8" height="8" fill="url(#pb)" stroke="#999"/><rect x="36" y="95" width="5" height="1" fill="#111"/><rect x="38" y="93" width="1" height="5" fill="#111"/><path d="M50.5 88.5 h5 l1.5 2 h6.5 v9.5 h-13 z" fill="url(#fd)" stroke="#d7b35a" stroke-width="1"/><line x1="43" y1="111.5" x2="50" y2="111.5" stroke="#444" stroke-width="1" stroke-dasharray="1 1"/><rect x="34.5" y="107.5" width="8" height="8" fill="url(#pb)" stroke="#999"/><rect x="36" y="111" width="5" height="1" fill="#111"/><rect x="38" y="109" width="1" height="5" fill="#111"/><path d="M50.5 104.5 h5 l1.5 2 h6.5 v9.5 h-13 z" fill="url(#fd)" stroke="#d7b35a" stroke-width="1"/><line x1="43" y1="127.5" x2="50" y2="127.5" stroke="#444" stroke-width="1" stroke-dasharray="1 1"/><rect x="34.5" y="123.5" width="8" height="8" fill="url(#pb)" stroke="#999"/><rect x="36" y="127" width="5" height="1" fill="#111"/><rect x="38" y="125" width="1" height="5" fill="#111"/><path d="M50.5 120.5 h5 l1.5 2 h6.5 v9.5 h-13 z" fill="url(#fd)" stroke="#d7b35a" stroke-width="1"/><line x1="43" y1="143.5" x2="50" y2="143.5" stroke="#444" stroke-width="1" stroke-dasharray="1 1"/><rect x="34.5" y="139.5" width="8" height="8" fill="url(#pb)" stroke="#999"/><rect x="36" y="143" width="5" height="1" fill="#111"/><rect x="38" y="141" width="1" height="5" fill="#111"/><path d="M50.5 136.5 h5 l1.5 2 h6.5 v9.5 h-13 z" fill="url(#fd)" stroke="#d7b35a" stroke-width="1"/><line x1="43" y1="159.5" x2="50" y2="159.5" stroke="#444" stroke-width="1" stroke-dasharray="1 1"/><rect x="34.5" y="155.5" width="8" height="8" fill="url(#pb)" stroke="#999"/><rect x="36" y="159" width="5" height="1" fill="#111"/><rect x="38" y="157" width="1" height="5" fill="#111"/><path d="M50.5 152.5 h5 l1.5 2 h6.5 v9.5 h-13 z" fill="url(#fd)" stroke="#d7b35a" stroke-width="1"/><line x1="43" y1="175.5" x2="50" y2="175.5" stroke="#444" stroke-width="1" stroke-dasharray="1 1"/><rect x="34.5" y="171.5" width="8" height="8" fill="url(#pb)" stroke="#999"/><rect x="36" y="175" width="5" height="1" fill="#111"/><rect x="38" y="173" width="1" height="5" fill="#111"/><path d="M50.5 168.5 h5 l1.5 2 h6.5 v9.5 h-13 z" fill="url(#fd)" stroke="#d7b35a" stroke-width="1"/><line x1="43" y1="191.5" x2="50" y2="191.5" stroke="#444" stroke-width="1" stroke-dasharray="1 1"/><rect x="34.5" y="187.5" width="8" height="8" fill="url(#pb)" stroke="#999"/><rect x="36" y="191" width="5" height="1" fill="#111"/><rect x="38" y="189" width="1" height="5" fill="#111"/><path d="M50.5 184.5 h5 l1.5 2 h6.5 v9.5 h-13 z" fill="url(#fd)" stroke="#d7b35a" stroke-width="1"/><line x1="43" y1="207.5" x2="50" y2="207.5" stroke="#444" stroke-width="1" stroke-dasharray="1 1"/><rect x="34.5" y="203.5" width="8" height="8" fill="url(#pb)" stroke="#999"/><rect x="36" y="207" width="5" height="1" fill="#111"/><rect x="38" y="205" width="1" height="5" fill="#111"/><path d="M50.5 200.5 h5 l1.5 2 h6.5 v9.5 h-13 z" fill="url(#fd)" stroke="#d7b35a" stroke-width="1"/><line x1="43" y1="223.5" x2="50" y2="223.5" stroke="#444" stroke-width="1" stroke-dasharray="1 1"/><rect x="34.5" y="219.5" width="8" height="8" fill="url(#pb)" stroke="#999"/><rect x="36" y="223" width="5" height="1" fill="#111"/><rect x="38" y="221" width="1" height="5" fill="#111"/><path d="M50.5 216.5 h5 l1.5 2 h6.5 v9.5 h-13 z" fill="url(#fd)" stroke="#d7b35a" stroke-width="1"/><line x1="43" y1="239.5" x2="50" y2="239.5" stroke="#444" stroke-width="1" stroke-dasharray="1 1"/><rect x="34.5" y="235.5" width="8" height="8" fill="url(#pb)" stroke="#999"/><rect x="36" y="239" width="5" height="1" fill="#111"/><rect x="38" y="237" width="1" height="5" fill="#111"/><path d="M50.5 232.5 h5 l1.5 2 h6.5 v9.5 h-13 z" fill="url(#fd)" stroke="#d7b35a" stroke-width="1"/><line x1="43" y1="255.5" x2="50" y2="255.5" stroke="#444" stroke-width="1" stroke-dasharray="1 1"/><rect x="34.5" y="251.5" width="8" height="8" fill="url(#pb)" stroke="#999"/><rect x="36" y="255" width="5" height="1" fill="#111"/><rect x="38" y="253" width="1" height="5" fill="#111"/><path d="M50.5 248.5 h5 l1.5 2 h6.5 v9.5 h-13 z" fill="url(#fd)" stroke="#d7b35a" stroke-width="1"/><line x1="43" y1="271.5" x2="50" y2="271.5" stroke="#444" stroke-width="1" stroke-dasharray="1 1"/><rect x="34.5" y="267.5" width="8" height="8" fill="url(#pb)" stroke="#999"/><rect x="36" y="271" width="5" height="1" fill="#111"/><rect x="38" y="269" width="1" height="5" fill="#111"/><path d="M50.5 264.5 h5 l1.5 2 h6.5 v9.5 h-13 z" fill="url(#fd)" stroke="#d7b35a" stroke-width="1"/><line x1="43" y1="287.5" x2="50" y2="287.5" stroke="#444" stroke-width="1" stroke-dasharray="1 1"/><rect x="34.5" y="283.5" width="8" height="8" fill="url(#pb)" stroke="#999"/><rect x="36" y="287" width="5" height="1" fill="#111"/><rect x="38" y="285" width="1" height="5" fill="#111"/><path d="M50.5 280.5 h5 l1.5 2 h6.5 v9.5 h-13 z" fill="url(#fd)" stroke="#d7b35a" stroke-width="1"/><line x1="43" y1="303.5" x2="50" y2="303.5" stroke="#444" stroke-width="1" stroke-dasharray="1 1"/><rect x="34.5" y="299.5" width="8" height="8" fill="url(#pb)" stroke="#999"/><rect x="36" y="303" width="5" height="1" fill="#111"/><rect x="38" y="301" width="1" height="5" fill="#111"/><path d="M50.5 296.5 h5 l1.5 2 h6.5 v9.5 h-13 z" fill="url(#fd)" stroke="#d7b35a" stroke-width="1"/><line x1="43" y1="319.5" x2="50" y2="319.5" stroke="#444" stroke-width="1" stroke-dasharray="1 1"/><rect x="34.5" y="315.5" width="8" height="8" fill="url(#pb)" stroke="#999"/><rect x="36" y="319" width="5" height="1" fill="#111"/><rect x="38" y="317" width="1" height="5" fill="#111"/><path d="M50.5 312.5 h5 l1.5 2 h6.5 v9.5 h-13 z" fill="url(#fd)" stroke="#d7b35a" stroke-width="1"/><line x1="43" y1="335.5" x2="50" y2="335.5" stroke="#444" stroke-width="1" stroke-dasharray="1 1"/><rect x="34.5" y="331.5" width="8" height="8" fill="url(#pb)" stroke="#999"/><rect x="36" y="335" width="5" height="1" fill="#111"/><rect x="38" y="333" width="1" height="5" fill="#111"/><path d="M50.5 328.5 h5 l1.5 2 h6.5 v9.5 h-13 z" fill="url(#fd)" stroke="#d7b35a" stroke-width="1"/><line x1="43" y1="351.5" x2="50" y2="351.5" stroke="#444" stroke-width="1" stroke-dasharray="1 1"/><rect x="34.5" y="347.5" width="8" height="8" fill="url(#pb)" stroke="#999"/><rect x="36" y="351" width="5" height="1" fill="#111"/><rect x="38" y="349" width="1" height="5" fill="#111"/><path d="M50.5 344.5 h5 l1.5 2 h6.5 v9.5 h-13 z" fill="url(#fd)" stroke="#d7b35a" stroke-width="1"/><line x1="43" y1="367.5" x2="50" y2="367.5" stroke="#444" stroke-width="1" stroke-dasharray="1 1"/><rect x="34.5" y="363.5" width="8" height="8" fill="url(#pb)" stroke="#999"/><rect x="36" y="367" width="5" height="1" fill="#111"/><rect x="38" y="365" width="1" height="5" fill="#111"/><path d="M50.5 360.5 h5 l1.5 2 h6.5 v9.5 h-13 z" fill="url(#fd)" stroke="#d7b35a" stroke-width="1"/><line x1="43" y1="383.5" x2="50" y2="383.5" stroke="#444" stroke-width="1" stroke-dasharray="1 1"/><rect x="34.5" y="379.5" width="8" height="8" fill="url(#pb)" stroke="#999"/><rect x="36" y="383" width="5" height="1" fill="#111"/><rect x="38" y="381" width="1" height="5" fill="#111"/><path d="M50.5 376.5 h5 l1.5 2 h6.5 v9.5 h-13 z" fill="url(#fd)" stroke="#d7b35a" stroke-width="1"/><line x1="43" y1="399.5" x2="50" y2="399.5" stroke="#444" stroke-width="1" stroke-dasharray="1 1"/><rect x="34.5" y="395.5" width="8" height="8" fill="url(#pb)" stroke="#999"/><rect x="36" y="399" width="5" height="1" fill="#111"/><rect x="38" y="397" width="1" height="5" fill="#111"/><path d="M50.5 392.5 h5 l1.5 2 h6.5 v9.5 h-13 z" fill="url(#fd)" stroke="#d7b35a" stroke-width="1"/><line x1="43" y1="415.5" x2="50" y2="415.5" stroke="#444" stroke-width="1" stroke-dasharray="1 1"/><rect x="34.5" y="411.5" width="8" height="8" fill="url(#pb)" stroke="#999"/><rect x="36" y="415" width="5" height="1" fill="#111"/><rect x="38" y="413" width="1" height="5" fill="#111"/><path d="M50.5 408.5 h5 l1.5 2 h6.5 v9.5 h-13 z" fill="url(#fd)" stroke="#d7b35a" stroke-width="1"/><line x1="43" y1="431.5" x2="50" y2="431.5" stroke="#444" stroke-width="1" stroke-dasharray="1 1"/><rect x="34.5" y="427.5" width="8" height="8" fill="url(#pb)" stroke="#999"/><rect x="36" y="431" width="5" height="1" fill="#111"/><rect x="38" y="429" width="1" height="5" fill="#111"/><path d="M50.5 424.5 h5 l1.5 2 h6.5 v9.5 h-13 z" fill="url(#fd)" stroke="#d7b35a" stroke-width="1"/><line x1="43" y1="447.5" x2="50" y2="447.5" stroke="#444" stroke-width="1" stroke-dasharray="1 1"/><rect x="34.5" y="443.5" width="8" height="8" fill="url(#pb)" stroke="#999"/><rect x="36" y="447" width="5" height="1" fill="#111"/><rect x="38" y="445" width="1" height="5" fill="#111"/><path d="M50.5 440.5 h5 l1.5 2 h6.5 v9.5 h-13 z" fill="url(#fd)" stroke="#d7b35a" stroke-width="1"/><line x1="43" y1="463.5" x2="50" y2="463.5" stroke="#444" stroke-width="1" stroke-dasharray="1 1"/><rect x="34.5" y="459.5" width="8" height="8" fill="url(#pb)" stroke="#999"/><rect x="36" y="463" width="5" height="1" fill="#111"/><rect x="38" y="461" width="1" height="5" fill="#111"/><path d="M50.5 456.5 h5 l1.5 2 h6.5 v9.5 h-13 z" fill="url(#fd)" stroke="#d7b35a" stroke-width="1"/><line x1="43" y1="479.5" x2="50" y2="479.5" stroke="#444" stroke-width="1" stroke-dasharray="1 1"/><rect x="34.5" y="475.5" width="8" height="8" fill="url(#pb)" stroke="#999"/><rect x="36" y="479" width="5" height="1" fill="#111"/><rect x="38" y="477" width="1" height="5" fill="#111"/><path d="M50.5 472.5 h5 l1.5 2 h6.5 v9.5 h-13 z" fill="url(#fd)" stroke="#d7b35a" stroke-width="1"/><line x1="43" y1="495.5" x2="50" y2="495.5" stroke="#444" stroke-width="1" stroke-dasharray="1 1"/><rect x="34.5" y="491.5" width="8" height="8" fill="url(#pb)" stroke="#999"/><rect x="36" y="495" width="5" height="1" fill="#111"/><rect x="38" y="493" width="1" height="5" fill="#111"/><path d="M50.5 488.5 h5 l1.5 2 h6.5 v9.5 h-13 z" fill="url(#fd)" stroke="#d7b35a" stroke-width="1"/><line x1="43" y1="511.5" x2="50" y2="511.5" stroke="#444" stroke-width="1" stroke-dasharray="1 1"/><rect x="34.5" y="507.5" width="8" height="8" fill="url(#pb)" stroke="#999"/><rect x="36" y="511" width="5" height="1" fill="#111"/><rect x="38" y="509" width="1" height="5" fill="#111"/><path d="M50.5 504.5 h5 l1.5 2 h6.5 v9.5 h-13 z" fill="url(#fd)" stroke="#d7b35a" stroke-width="1"/><line x1="43" y1="527.5" x2="50" y2="527.5" stroke="#444" stroke-width="1" stroke-dasharray="1 1"/><rect x="34.5" y="523.5" width="8" height="8" fill="url(#pb)" stroke="#999"/><rect x="36" y="527" width="5" height="1" fill="#111"/><rect x="38" y="525" width="1" height="5" fill="#111"/><path d="M50.5 520.5 h5 l1.5 2 h6.5 v9.5 h-13 z" fill="url(#fd)" stroke="#d7b35a" stroke-width="1"/><line x1="43" y1="543.5" x2="50" y2="543.5" stroke="#444" stroke-width="1" stroke-dasharray="1 1"/><rect x="34.5" y="539.5" width="8" height="8" fill="url(#pb)" stroke="#999"/><rect x="36" y="543" width="5" height="1" fill="#111"/><rect x="38" y="541" width="1" height="5" fill="#111"/><path d="M50.5 536.5 h5 l1.5 2 h6.5 v9.5 h-13 z" fill="url(#fd)" stroke="#d7b35a" stroke-width="1"/><line x1="43" y1="559.5" x2="50" y2="559.5" stroke="#444" stroke-width="1" stroke-dasharray="1 1"/><rect x="34.5" y="555.5" width="8" height="8" fill="url(#pb)" stroke="#999"/><rect x="36" y="559" width="5" height="1" fill="#111"/><rect x="38" y="557" width="1" height="5" fill="#111"/><path d="M50.5 552.5 h5 l1.5 2 h6.5 v9.5 h-13 z" fill="url(#fd)" stroke="#d7b35a" stroke-width="1"/><line x1="43" y1="575.5" x2="50" y2="575.5" stroke="#444" stroke-width="1" stroke-dasharray="1 1"/><rect x="34.5" y="571.5" width="8" height="8" fill="url(#pb)" stroke="#999"/><rect x="36" y="575" width="5" height="1" fill="#111"/><rect x="38" y="573" width="1" height="5" fill="#111"/><path d="M50.5 568.5 h5 l1.5 2 h6.5 v9.5 h-13 z" fill="url(#fd)" stroke="#d7b35a" stroke-width="1"/><line x1="43" y1="591.5" x2="50" y2="591.5" stroke="#444" stroke-width="1" stroke-dasharray="1 1"/><rect x="34.5" y="587.5" width="8" height="8" fill="url(#pb)" stroke="#999"/><rect x="36" y="591" width="5" height="1" fill="#111"/><rect x="38" y="589" width="1" height="5" fill="#111"/><path d="M50.5 584.5 h5 l1.5 2 h6.5 v9.5 h-13 z" fill="url(#fd)" stroke="#d7b35a" stroke-width="1"/><line x1="43" y1="607.5" x2="50" y2="607.5" stroke="#444" stroke-width="1" stroke-dasharray="1 1"/><rect x="34.5" y="603.5" width="8" height="8" fill="url(#pb)" stroke="#999"/><rect x="36" y="607" width="5" height="1" fill="#111"/><rect x="38" y="605" width="1" height="5" fill="#111"/><path d="M50.5 600.5 h5 l1.5 2 h6.5 v9.5 h-13 z" fill="url(#fd)" stroke="#d7b35a" stroke-width="1"/><line x1="43" y1="623.5" x2="50" y2="623.5" stroke="#444" stroke-width="1" stroke-dasharray="1 1"/><rect x="34.5" y="619.5" width="8" height="8" fill="url(#pb)" stroke="#999"/><rect x="36" y="623" width="5" height="1" fill="#111"/><rect x="38" y="621" width="1" height="5" fill="#111"/><path d="M50.5 616.5 h5 l1.5 2 h6.5 v9.5 h-13 z" fill="url(#fd)" stroke="#d7b35a" stroke-width="1"/><line x1="43" y1="639.5" x2="50" y2="639.5" stroke="#444" stroke-width="1" stroke-dasharray="1 1"/><rect x="34.5" y="635.5" width="8" height="8" fill="url(#pb)" stroke="#999"/><rect x="36" y="639" width="5" height="1" fill="#111"/><rect x="38" y="637" width="1" height="5" fill="#111"/><path d="M50.5 632.5 h5 l1.5 2 h6.5 v9.5 h-13 z" fill="url(#fd)" stroke="#d7b35a" stroke-width="1"/><line x1="43" y1="655.5" x2="50" y2="655.5" stroke="#444" stroke-width="1" stroke-dasharray="1 1"/><rect x="34.5" y="651.5" width="8" height="8" fill="url(#pb)" stroke="#999"/><rect x="36" y="655" width="5" height="1" fill="#111"/><path d="M50.5 648.5 h5 l1.5 2 h6.5 v9.5 h-13 z" fill="url(#fd)" stroke="#d7b35a" stroke-width="1"/><line x1="57.5" y1="663" x2="57.5" y2="687" stroke="#444" stroke-dasharray="1 1"/><line x1="58" y1="671.5" x2="67" y2="671.5" stroke="#444" stroke-dasharray="1 1"/><g transform="translate(67,663)"><path d="M4 0.5 H11 L15.5 5 V15.5 H4 Z" fill="#f4f8fc" stroke="#9aa8b8" stroke-width="1"/><path d="M11 0.5 V5 H15.5" fill="none" stroke="#9aa8b8"/><rect x="6" y="10" width="8" height="1.5" fill="#b8d0e8"/><rect x="6" y="13" width="8" height="1" fill="#b8d0e8"/><rect x="0" y="3" width="13" height="7" rx="1" fill="#c81c24"/><text x="6.5" y="9" font-family="Liberation Sans" font-weight="bold" font-size="6.5" fill="#fff" text-anchor="middle">PDF</text></g><line x1="58" y1="687.5" x2="67" y2="687.5" stroke="#444" stroke-dasharray="1 1"/><g transform="translate(67,679)"><path d="M4 0.5 H11 L15.5 5 V15.5 H4 Z" fill="#f4f8fc" stroke="#9aa8b8" stroke-width="1"/><path d="M11 0.5 V5 H15.5" fill="none" stroke="#9aa8b8"/><rect x="6" y="10" width="8" height="1.5" fill="#b8d0e8"/><rect x="6" y="13" width="8" height="1" fill="#b8d0e8"/><rect x="0" y="3" width="13" height="7" rx="1" fill="#c81c24"/><text x="6.5" y="9" font-family="Liberation Sans" font-weight="bold" font-size="6.5" fill="#fff" text-anchor="middle">PDF</text></g><path d="M50.5 700 h5 l1.5 2 h6.5 v9 h-13 z" fill="url(#fd)" stroke="#d7b35a"/><defs><linearGradient id="pb" x1="0" y1="0" x2="0" y2="1"><stop offset="0" stop-color="#f8f8f8"/><stop offset="1" stop-color="#d4d4d4"/></linearGradient><linearGradient id="fd" x1="0" y1="0" x2="0" y2="1"><stop offset="0" stop-color="#fbeea8"/><stop offset="1" stop-color="#f0cf6a"/></linearGradient></defs></svg><div class="ttxt" style="top:144px;left:70px">TECNO T431</div><div class="ttxt" style="top:160px;left:70px">TECNO T432</div><div class="ttxt" style="top:176px;left:70px">TECNO T453</div><div class="ttxt" style="top:192px;left:70px">TECNO T454</div><div class="ttxt" style="top:208px;left:70px">TECNO T462</div><div class="ttxt" style="top:224px;left:70px">TECNO T463</div><div class="ttxt" style="top:240px;left:70px">TECNO T464</div><div class="ttxt" style="top:256px;left:70px">TECNO T465</div><div class="ttxt" style="top:272px;left:70px">TECNO T466</div><div class="ttxt" style="top:288px;left:70px">TECNO T470</div><div class="ttxt" style="top:304px;left:70px">TECNO T472</div><div class="ttxt" style="top:320px;left:70px">TECNO T473</div><div class="ttxt" style="top:336px;left:70px">TECNO T474</div><div class="ttxt" style="top:352px;left:70px">TECNO T483</div><div class="ttxt" style="top:368px;left:70px">TECNO T484</div><div class="ttxt" style="top:384px;left:70px">TECNO T485</div><div class="ttxt" style="top:400px;left:70px">TECNO T525</div><div class="ttxt" style="top:416px;left:70px">TECNO T526</div><div class="ttxt" style="top:432px;left:70px">TECNO T528</div><div class="ttxt" style="top:448px;left:70px">TECNO T529</div><div class="ttxt" style="top:464px;left:70px">TECNO T531</div><div class="ttxt" style="top:480px;left:70px">TECNO T545</div><div class="ttxt" style="top:496px;left:70px">TECNO T551</div><div class="ttxt" style="top:512px;left:70px">TECNO T560</div><div class="ttxt" style="top:528px;left:70px">TECNO T611</div><div class="ttxt" style="top:544px;left:70px">TECNO T612</div><div class="ttxt" style="top:560px;left:70px">TECNO T630S</div><div class="ttxt" style="top:576px;left:70px">TECNO T631</div><div class="ttxt" style="top:592px;left:70px">TECNO T632S</div><div class="ttxt" style="top:608px;left:70px">TECNO T635</div><div class="ttxt" style="top:624px;left:70px">TECNO T660</div><div class="ttxt" style="top:640px;left:70px">TECNO T661</div><div class="ttxt" style="top:656px;left:70px">TECNO T662</div><div class="ttxt" style="top:672px;left:70px">TECNO T663</div><div class="ttxt" style="top:688px;left:70px">TECNO T701</div><div class="ttxt" style="top:704px;left:70px">TECNO T722</div><div class="ttxt" style="top:720px;left:70px">TECNO T731</div><div class="ttxt" style="top:736px;left:70px">TECNO T733</div><div class="ttxt" style="top:752px;left:70px">TECNO T735</div><div class="ttxt" style="top:768px;left:70px">TECNO T901</div><div class="ttxt" style="top:784px;left:70px">TECNO T920D</div><div class="abs" style="left:87px;top:797px;width:82px;height:16px;background:#3399ff;outline:1px dotted #1a2a55;outline-offset:-1px"></div><div class="ttxt" style="top:800px;left:88px;color:#fff">SD963A1-1_SCH</div><div class="ttxt" style="top:816px;left:88px">SD963_Placement</div><div class="abs" style="left:236px;top:141px;width:17px;height:691px;background:#fff;border:1px solid #a9a9a9"></div><div class="abs" style="left:236px;top:157px;width:17px;height:1px;background:#c8c8c8"></div><div class="abs" style="left:236px;top:815px;width:17px;height:1px;background:#c8c8c8"></div><svg class="abs" style="left:236px;top:141px" width="17" height="17"><path d="M4.5 11 L8.5 7 L12.5 11" fill="none" stroke="#444" stroke-width="1.6"/></svg><svg class="abs" style="left:236px;top:815px" width="17" height="17"><path d="M4.5 6 L8.5 10 L12.5 6" fill="none" stroke="#444" stroke-width="1.6"/></svg><div class="abs" style="left:236px;top:692px;width:17px;height:81px;background:#dadada;border:1px solid #a0a0a0"></div><div class="abs" style="left:241px;top:727px;width:7px;height:2px;background:#555"></div><div class="abs" style="left:241px;top:730px;width:7px;height:2px;background:#555"></div><div class="abs" style="left:241px;top:733px;width:7px;height:2px;background:#555"></div><div class="abs" style="left:255px;top:134px;width:5px;height:700px;background:#edf1f2"></div><div class="abs" style="left:260px;top:161px;width:1px;height:673px;background:#fbfbfb"></div><div class="abs" style="left:0;top:834px;width:1521px;height:2px;background:#dde6ea"></div><div class="abs" style="left:0;top:836px;width:1521px;height:20px;background:#44698d"></div><div class="abs" style="left:0;top:856px;width:1521px;height:3px;background:#c9d9e1"></div><div class="ttxt" style="left:0;top:844px;color:#08081a">Version:1.0.0.52</div><div class="ttxt" style="left:1381px;top:844px;color:#fff">Current [SD963A1-1_SCH]</div></body></html>
